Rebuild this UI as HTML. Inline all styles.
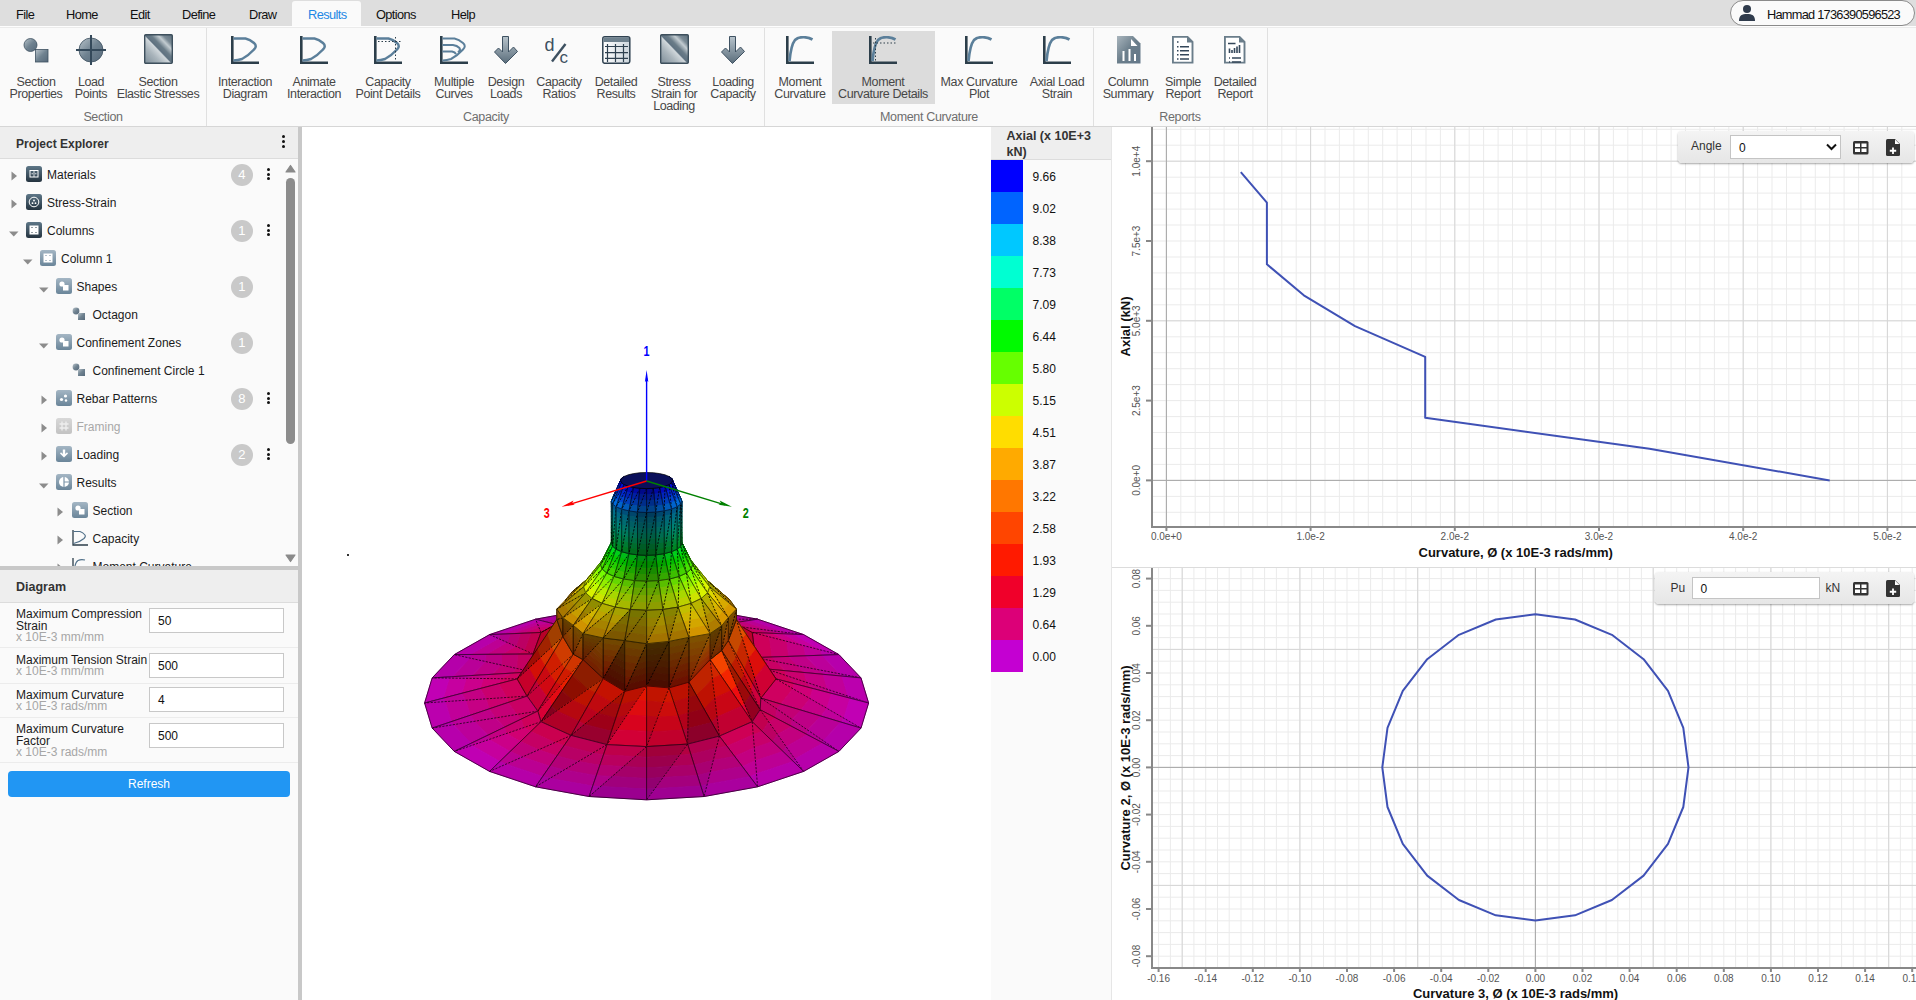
<!DOCTYPE html><html><head><meta charset="utf-8"><style>
*{box-sizing:border-box;margin:0;padding:0}
html,body{width:1916px;height:1000px;overflow:hidden;background:#fff;font-family:"Liberation Sans", sans-serif;}
.a{position:absolute}
.t{position:absolute;white-space:nowrap;line-height:1}
.menu{left:0;top:0;width:1916px;height:26px;background:#dedede}
.mi{position:absolute;top:7.8px;font-size:12.8px;color:#111;line-height:13px;letter-spacing:-0.6px}
.ribbon{left:0;top:26px;width:1916px;height:101px;background:#fafafa;border-bottom:1px solid #d6d6d6;box-shadow:inset 0 1px 0 #fdfdfd, inset 0 2px 0 #ebebeb}
.rl{position:absolute;top:75.6px;font-size:12.5px;line-height:12px;color:#474747;text-align:center;white-space:nowrap;letter-spacing:-0.4px}
.gl{position:absolute;top:110.6px;font-size:12.5px;line-height:12px;color:#6e6e6e;white-space:nowrap;letter-spacing:-0.35px}
.sep{position:absolute;top:28px;width:1px;height:98px;background:#e0e0e0}
</style></head><body>
<div class="a menu"></div>
<div class="mi" style="left:16px">File</div>
<div class="mi" style="left:66px">Home</div>
<div class="mi" style="left:130px">Edit</div>
<div class="mi" style="left:182px">Define</div>
<div class="mi" style="left:249px">Draw</div>
<div class="mi" style="left:376px">Options</div>
<div class="mi" style="left:451px">Help</div>
<div class="a" style="left:292px;top:1px;width:69px;height:26px;background:#fafafa;border-radius:3px 3px 0 0"></div>
<div class="mi" style="left:308px;color:#1e88e5">Results</div>
<div class="a" style="left:1730px;top:0px;width:185px;height:26px;border:1px solid #8a8a8a;border-radius:13px;background:#fafafa"></div>
<svg class="a" style="left:1738px;top:4px" width="20" height="18" viewBox="0 0 20 18"><circle cx="9" cy="5" r="4" fill="#2f3b4c"/><path d="M1 17 C1 11 4 10 9 10 C14 10 17 11 17 17 Z" fill="#2f3b4c"/></svg>
<div class="mi" style="left:1767px;top:8px;letter-spacing:-0.75px">Hammad 1736390596523</div>
<div class="a ribbon"></div>
<div class="sep" style="left:206px"></div>
<div class="sep" style="left:764px"></div>
<div class="sep" style="left:1093px"></div>
<div class="sep" style="left:1267px"></div>
<div class="a" style="left:832px;top:31px;width:103px;height:73px;background:#dcdcdc"></div>
<svg width="0" height="0" style="position:absolute"><defs>
<linearGradient id="gm" x1="0" y1="0" x2="1" y2="1"><stop offset="0" stop-color="#b9c4cb"/><stop offset="0.5" stop-color="#6f8290"/><stop offset="1" stop-color="#56697a"/></linearGradient>
<linearGradient id="gs" x1="0" y1="0" x2="1" y2="1"><stop offset="0" stop-color="#c5ced4"/><stop offset="0.3" stop-color="#7a8b97"/><stop offset="0.45" stop-color="#c9d1d6"/><stop offset="0.6" stop-color="#657886"/><stop offset="1" stop-color="#5f7280"/></linearGradient>
<linearGradient id="gq" x1="0" y1="1" x2="1" y2="0"><stop offset="0" stop-color="#7d8d98"/><stop offset="0.3" stop-color="#aab5bc"/><stop offset="0.47" stop-color="#d0d7db"/><stop offset="0.5" stop-color="#5e7180"/><stop offset="0.6" stop-color="#6a7c88"/><stop offset="0.73" stop-color="#c3ccd1"/><stop offset="0.82" stop-color="#7a8a95"/><stop offset="1" stop-color="#5d6f7c"/></linearGradient>
<linearGradient id="ga" x1="0" y1="0" x2="0" y2="1"><stop offset="0" stop-color="#b8c4cc"/><stop offset="1" stop-color="#5a6d7b"/></linearGradient>
<linearGradient id="gt" x1="0" y1="0" x2="1" y2="0"><stop offset="0" stop-color="#ffffff"/><stop offset="1" stop-color="#cdd6dd"/></linearGradient>
<linearGradient id="gd" x1="0" y1="0" x2="1" y2="1"><stop offset="0" stop-color="#a9b5bd"/><stop offset="0.5" stop-color="#6b7e8b"/><stop offset="1" stop-color="#64788a"/></linearGradient>
<linearGradient id="ti" x1="0" y1="0" x2="0" y2="1"><stop offset="0" stop-color="#5e7788"/><stop offset="1" stop-color="#24333f"/></linearGradient>
<linearGradient id="ti2" x1="0" y1="0" x2="0" y2="1"><stop offset="0" stop-color="#a4b6c4"/><stop offset="1" stop-color="#6a8599"/></linearGradient>
<linearGradient id="ti3" x1="0" y1="0" x2="0" y2="1"><stop offset="0" stop-color="#d8d8d8"/><stop offset="1" stop-color="#c2c2c2"/></linearGradient>
</defs></svg>
<div class="rl" style="left:-24px;width:120px">Section<br>Properties</div>
<svg class="a" style="left:23px;top:35px" width="26" height="28" viewBox="0 0 26 28"><circle cx="7.5" cy="10" r="6.5" fill="url(#gm)" stroke="#3d5060" stroke-width="0.8"/><rect x="12.5" y="14.5" width="12.5" height="12.5" fill="url(#gm)" stroke="#3d5060" stroke-width="0.8"/></svg>
<div class="rl" style="left:31px;width:120px">Load<br>Points</div>
<svg class="a" style="left:76px;top:35px" width="30" height="31" viewBox="0 0 30 31"><circle cx="15" cy="15" r="12" fill="url(#gm)" stroke="#3d5060" stroke-width="0.8"/><path d="M0 15 H30 M15 0 V30" stroke="#34495a" stroke-width="2"/></svg>
<div class="rl" style="left:98px;width:120px">Section<br>Elastic Stresses</div>
<svg class="a" style="left:144px;top:34px" width="29" height="30" viewBox="0 0 29 30"><rect x="0.7" y="0.7" width="27.6" height="28.6" fill="url(#gq)" stroke="#3d4f5c" stroke-width="1.4" rx="1"/></svg>
<div class="rl" style="left:185px;width:120px">Interaction<br>Diagram</div>
<svg class="a" style="left:231px;top:36px" width="29" height="28" viewBox="0 0 29 28"><path d="M1.3 0 V26.7 H28" fill="none" stroke="#2c3e4a" stroke-width="2.6"/><path d="M2.5 2.5 H14.5 Q19 3.5 23 7 Q26.5 10 23 13.5 Q17 20 11 23 Q7 24.4 2.5 24.5" fill="none" stroke="#5b7f9a" stroke-width="2.5"/></svg>
<div class="rl" style="left:254px;width:120px">Animate<br>Interaction</div>
<svg class="a" style="left:300px;top:36px" width="29" height="28" viewBox="0 0 29 28"><path d="M1.3 0 V26.7 H28" fill="none" stroke="#2c3e4a" stroke-width="2.6"/><path d="M2.5 2.5 H14.5 Q19 3.5 23 7 Q26.5 10 23 13.5 Q17 20 11 23 Q7 24.4 2.5 24.5" fill="none" stroke="#5b7f9a" stroke-width="2.5"/></svg>
<div class="rl" style="left:328px;width:120px">Capacity<br>Point Details</div>
<svg class="a" style="left:374px;top:36px" width="29" height="28" viewBox="0 0 29 28"><path d="M1.3 0 V26.7 H28" fill="none" stroke="#2c3e4a" stroke-width="2.6"/><path d="M2.5 2.5 H14.5 Q19 3.5 23 7 Q26.5 10 23 13.5 Q17 20 11 23 Q7 24.4 2.5 24.5" fill="none" stroke="#5b7f9a" stroke-width="2.5"/><path d="M4 5.5 H27 M21.5 1 V24" stroke="#2c3e4a" stroke-width="1" stroke-dasharray="1.5 2" fill="none"/></svg>
<div class="rl" style="left:394px;width:120px">Multiple<br>Curves</div>
<svg class="a" style="left:440px;top:36px" width="29" height="28" viewBox="0 0 29 28"><path d="M1.3 0 V26.7 H28" fill="none" stroke="#2c3e4a" stroke-width="2.6"/><path d="M2.5 2.5 H14.5 Q19 3.5 23 7 Q26.5 10 23 13.5 Q17 20 11 23 Q7 24.4 2.5 24.5 M2.5 9 H13 Q17 9.5 19.5 12 Q21 14 18 16.5 M2.5 15.5 H12 Q15 16 16 18" fill="none" stroke="#5b7f9a" stroke-width="2"/></svg>
<div class="rl" style="left:446px;width:120px">Design<br>Loads</div>
<svg class="a" style="left:494px;top:36px" width="24" height="28" viewBox="0 0 24 28"><path d="M8.5 0.5 H14.5 V16 L19.5 11 L23.5 15.5 L11.5 27.5 L0.5 16 L4.5 12 L8.5 16 Z" fill="url(#ga)" stroke="#3f5262" stroke-width="1"/></svg>
<div class="rl" style="left:499px;width:120px">Capacity<br>Ratios</div>
<svg class="a" style="left:545px;top:36px" width="28" height="28" viewBox="0 0 28 28"><text x="-0.5" y="14.5" font-family="Liberation Sans" font-size="18" fill="#3d5060">d</text><path d="M7 25.5 L20.5 8" stroke="#3d5060" stroke-width="2.4"/><text x="14.5" y="26.5" font-family="Liberation Sans" font-size="17" fill="#3d5060">c</text></svg>
<div class="rl" style="left:556px;width:120px">Detailed<br>Results</div>
<svg class="a" style="left:602px;top:36px" width="29" height="28" viewBox="0 0 29 28"><rect x="0.8" y="0.8" width="27" height="26.5" rx="2" fill="url(#gt)" stroke="#2f4150" stroke-width="1.5"/><rect x="1.5" y="1.5" width="25.6" height="4.5" fill="#6d808d"/><path d="M5.5 8 V26 M13.5 8 V26 M21.5 8 V26 M3 10.5 H26 M3 16.6 H26 M3 22.3 H26" stroke="#2f4150" stroke-width="1.2"/></svg>
<div class="rl" style="left:614px;width:120px">Stress<br>Strain for<br>Loading</div>
<svg class="a" style="left:660px;top:34px" width="29" height="30" viewBox="0 0 29 30"><rect x="0.7" y="0.7" width="27.6" height="28.6" fill="url(#gq)" stroke="#3d4f5c" stroke-width="1.4" rx="1"/></svg>
<div class="rl" style="left:673px;width:120px">Loading<br>Capacity</div>
<svg class="a" style="left:721px;top:36px" width="24" height="28" viewBox="0 0 24 28"><path d="M8.5 0.5 H14.5 V16 L19.5 11 L23.5 15.5 L11.5 27.5 L0.5 16 L4.5 12 L8.5 16 Z" fill="url(#ga)" stroke="#3f5262" stroke-width="1"/></svg>
<div class="rl" style="left:740px;width:120px">Moment<br>Curvature</div>
<svg class="a" style="left:786px;top:36px" width="29" height="28" viewBox="0 0 29 28"><path d="M1.3 0 V26.7 H28" fill="none" stroke="#2c3e4a" stroke-width="2.6"/><path d="M3.5 25 Q5 9 9 4 Q12 1 18 1.2 Q23 1.5 26.5 3.5" fill="none" stroke="#5b7f9a" stroke-width="2.7"/></svg>
<div class="rl" style="left:823px;width:120px">Moment<br>Curvature Details</div>
<svg class="a" style="left:869px;top:36px" width="29" height="28" viewBox="0 0 29 28"><path d="M1.3 0 V26.7 H28" fill="none" stroke="#2c3e4a" stroke-width="2.6"/><path d="M3.5 25 Q5 9 9 4 Q12 1 18 1.2 Q23 1.5 26.5 3.5" fill="none" stroke="#5b7f9a" stroke-width="2.7"/><path d="M4 7 H27 M6.5 2 V25" stroke="#2c3e4a" stroke-width="1" stroke-dasharray="1.5 2" fill="none"/></svg>
<div class="rl" style="left:919px;width:120px">Max Curvature<br>Plot</div>
<svg class="a" style="left:965px;top:36px" width="29" height="28" viewBox="0 0 29 28"><path d="M1.3 0 V26.7 H28" fill="none" stroke="#2c3e4a" stroke-width="2.6"/><path d="M3.5 25 Q5 9 9 4 Q12 1 18 1.2 Q23 1.5 26.5 3.5" fill="none" stroke="#5b7f9a" stroke-width="2.7"/></svg>
<div class="rl" style="left:997px;width:120px">Axial Load<br>Strain</div>
<svg class="a" style="left:1043px;top:36px" width="29" height="28" viewBox="0 0 29 28"><path d="M1.3 0 V26.7 H28" fill="none" stroke="#2c3e4a" stroke-width="2.6"/><path d="M3.5 25 Q5 9 9 4 Q12 1 18 1.2 Q23 1.5 26.5 3.5" fill="none" stroke="#5b7f9a" stroke-width="2.7"/></svg>
<div class="rl" style="left:1068px;width:120px">Column<br>Summary</div>
<svg class="a" style="left:1117px;top:36px" width="24" height="28" viewBox="0 0 24 28"><path d="M0 0 H16 L23.5 7.5 V27.5 H0 Z" fill="url(#gd)"/><path d="M14 3 L20.5 10 H14 Z" fill="#fff"/><rect x="5.5" y="15" width="2" height="10" fill="#fff"/><rect x="11.5" y="13" width="2" height="12" fill="#fff"/><rect x="17" y="18" width="2" height="7" fill="#fff"/></svg>
<div class="rl" style="left:1123px;width:120px">Simple<br>Report</div>
<svg class="a" style="left:1172px;top:36px" width="22" height="28" viewBox="0 0 22 28"><path d="M0.9 0.9 H15.5 L20.5 6 V26.6 H0.9 Z" fill="#fff" stroke="#6a7d8a" stroke-width="1.9"/><path d="M15 1 V6.5 H20.5" fill="#6a7d8a"/><path d="M5 6 H6.5 M5 10.7 H6.5 M8 10.7 H17 M5 14.7 H6.5 M8 14.7 H17 M5 18.8 H6.5 M8 18.8 H17 M5 23 H6.5 M8 23 H17" stroke="#34475a" stroke-width="1.5"/></svg>
<div class="rl" style="left:1175px;width:120px">Detailed<br>Report</div>
<svg class="a" style="left:1224px;top:36px" width="22" height="28" viewBox="0 0 22 28"><path d="M0.9 0.9 H15.5 L20.5 6 V26.6 H0.9 Z" fill="#fff" stroke="#6a7d8a" stroke-width="1.9"/><path d="M15 1 V6.5 H20.5" fill="#6a7d8a"/><path d="M4 7.5 H11.5 M5 22 H6 M8 22 H17 M5 26 H6 M8 26 H17" stroke="#34475a" stroke-width="1.5"/><path d="M5.5 17 V12.5 M8 17 V14 M10.5 17 V12 M13 17 V10.5 M15.5 17 V9" stroke="#34475a" stroke-width="1.6"/></svg>
<div class="gl" style="left:43px;width:120px;text-align:center">Section</div>
<div class="gl" style="left:426px;width:120px;text-align:center">Capacity</div>
<div class="gl" style="left:869px;width:120px;text-align:center">Moment Curvature</div>
<div class="gl" style="left:1120px;width:120px;text-align:center">Reports</div>
<div class="a" style="left:0;top:127px;width:298px;height:873px;background:#fafafa"></div>
<div class="a" style="left:298px;top:127px;width:4px;height:873px;background:#c8c8c8"></div>
<div class="a" style="left:0;top:127px;width:298px;height:32px;background:#eeeeee;border-bottom:1px solid #dcdcdc"></div>
<div class="t" style="left:16px;top:138px;font-size:12px;font-weight:bold;color:#333;letter-spacing:0px">Project Explorer</div>
<div class="a" style="left:282.0px;top:135.0px;width:3px;height:3px;border-radius:50%;background:#111"></div><div class="a" style="left:282.0px;top:139.8px;width:3px;height:3px;border-radius:50%;background:#111"></div><div class="a" style="left:282.0px;top:144.60000000000002px;width:3px;height:3px;border-radius:50%;background:#111"></div>
<div class="a" style="left:0;top:160px;width:283px;height:406px;overflow:hidden"><div class="a" style="left:0;top:-160px;width:283px;height:1000px"><svg class="a" style="left:11px;top:171px" width="7" height="10"><path d="M0.5 0.5 L6 5 L0.5 9.5 Z" fill="#8c8c8c"/></svg><svg class="a" style="left:26px;top:166px" width="16" height="16"><rect x="0" y="0" width="16" height="16" rx="2.5" fill="url(#ti)"/><rect x="4" y="4.5" width="8" height="6.5" fill="none" stroke="#fff" stroke-width="1"/><path d="M8 5 V11 M5.5 7.75 H7 M9 7.75 H10.5" stroke="#fff" stroke-width="0.8"/></svg><div class="t" style="left:47px;top:169px;font-size:12px;color:#1a1a1a">Materials</div><div class="a" style="left:230.8px;top:163.5px;width:22px;height:22px;border-radius:50%;background:#c9c9c9;color:#fff;font-size:13px;line-height:22px;text-align:center">4</div><div class="a" style="left:266.5px;top:167.7px;width:3px;height:3px;border-radius:50%;background:#111"></div><div class="a" style="left:266.5px;top:172.5px;width:3px;height:3px;border-radius:50%;background:#111"></div><div class="a" style="left:266.5px;top:177.3px;width:3px;height:3px;border-radius:50%;background:#111"></div><svg class="a" style="left:11px;top:199px" width="7" height="10"><path d="M0.5 0.5 L6 5 L0.5 9.5 Z" fill="#8c8c8c"/></svg><svg class="a" style="left:26px;top:194px" width="16" height="16"><rect x="0" y="0" width="16" height="16" rx="2.5" fill="url(#ti)"/><circle cx="8" cy="8" r="4.8" fill="none" stroke="#fff" stroke-width="1"/><circle cx="8" cy="6.5" r="0.9" fill="#fff"/><circle cx="6.5" cy="9.2" r="0.9" fill="#fff"/><circle cx="9.5" cy="9.2" r="0.9" fill="#fff"/></svg><div class="t" style="left:47px;top:197px;font-size:12px;color:#1a1a1a">Stress-Strain</div><svg class="a" style="left:9px;top:231px" width="10" height="6"><path d="M0 0.5 H9.5 L4.75 5.5 Z" fill="#8c8c8c"/></svg><svg class="a" style="left:26px;top:222px" width="16" height="16"><rect x="0" y="0" width="16" height="16" rx="2.5" fill="url(#ti)"/><rect x="3.5" y="3.5" width="9" height="9" fill="#fff"/><path d="M5.5 5.5 h1 M9.5 5.5 h1 M5.5 10.5 h1 M9.5 10.5 h1" stroke="#2c3e4a" stroke-width="1"/></svg><div class="t" style="left:47px;top:225px;font-size:12px;color:#1a1a1a">Columns</div><div class="a" style="left:230.8px;top:219.5px;width:22px;height:22px;border-radius:50%;background:#c9c9c9;color:#fff;font-size:13px;line-height:22px;text-align:center">1</div><div class="a" style="left:266.5px;top:223.7px;width:3px;height:3px;border-radius:50%;background:#111"></div><div class="a" style="left:266.5px;top:228.5px;width:3px;height:3px;border-radius:50%;background:#111"></div><div class="a" style="left:266.5px;top:233.3px;width:3px;height:3px;border-radius:50%;background:#111"></div><svg class="a" style="left:23px;top:259px" width="10" height="6"><path d="M0 0.5 H9.5 L4.75 5.5 Z" fill="#8c8c8c"/></svg><svg class="a" style="left:40px;top:250px" width="16" height="16"><rect x="0" y="0" width="16" height="16" rx="2.5" fill="url(#ti2)"/><rect x="3.5" y="3.5" width="9" height="9" fill="#fff"/><path d="M5.5 5.5 h1 M9.5 5.5 h1 M5.5 10.5 h1 M9.5 10.5 h1" stroke="#6a8599" stroke-width="1"/></svg><div class="t" style="left:61px;top:253px;font-size:12px;color:#1a1a1a">Column 1</div><svg class="a" style="left:39px;top:287px" width="10" height="6"><path d="M0 0.5 H9.5 L4.75 5.5 Z" fill="#8c8c8c"/></svg><svg class="a" style="left:56px;top:278px" width="16" height="16"><rect x="0" y="0" width="16" height="16" rx="2.5" fill="url(#ti2)"/><circle cx="6" cy="6" r="2.6" fill="#fff"/><rect x="7" y="7" width="5.5" height="5.5" fill="#fff"/></svg><div class="t" style="left:76.5px;top:281px;font-size:12px;color:#1a1a1a">Shapes</div><div class="a" style="left:230.8px;top:275.5px;width:22px;height:22px;border-radius:50%;background:#c9c9c9;color:#fff;font-size:13px;line-height:22px;text-align:center">1</div><svg class="a" style="left:72px;top:307px" width="14" height="14"><circle cx="4" cy="4" r="3.4" fill="url(#gm)"/><rect x="6" y="6" width="7" height="7" fill="url(#gm)"/></svg><div class="t" style="left:92.5px;top:309px;font-size:12px;color:#1a1a1a">Octagon</div><svg class="a" style="left:39px;top:343px" width="10" height="6"><path d="M0 0.5 H9.5 L4.75 5.5 Z" fill="#8c8c8c"/></svg><svg class="a" style="left:56px;top:334px" width="16" height="16"><rect x="0" y="0" width="16" height="16" rx="2.5" fill="url(#ti2)"/><circle cx="6" cy="6" r="2.6" fill="#fff"/><rect x="7" y="7" width="5.5" height="5.5" fill="#fff"/></svg><div class="t" style="left:76.5px;top:337px;font-size:12px;color:#1a1a1a">Confinement Zones</div><div class="a" style="left:230.8px;top:331.5px;width:22px;height:22px;border-radius:50%;background:#c9c9c9;color:#fff;font-size:13px;line-height:22px;text-align:center">1</div><svg class="a" style="left:72px;top:363px" width="14" height="14"><circle cx="4" cy="4" r="3.4" fill="url(#gm)"/><rect x="6" y="6" width="7" height="7" fill="url(#gm)"/></svg><div class="t" style="left:92.5px;top:365px;font-size:12px;color:#1a1a1a">Confinement Circle 1</div><svg class="a" style="left:41px;top:395px" width="7" height="10"><path d="M0.5 0.5 L6 5 L0.5 9.5 Z" fill="#8c8c8c"/></svg><svg class="a" style="left:56px;top:390px" width="16" height="16"><rect x="0" y="0" width="16" height="16" rx="2.5" fill="url(#ti2)"/><circle cx="5.5" cy="9.5" r="1.6" fill="#fff"/><circle cx="9.5" cy="6" r="1.6" fill="#fff"/><circle cx="10" cy="10.5" r="1.2" fill="#fff"/></svg><div class="t" style="left:76.5px;top:393px;font-size:12px;color:#1a1a1a">Rebar Patterns</div><div class="a" style="left:230.8px;top:387.5px;width:22px;height:22px;border-radius:50%;background:#c9c9c9;color:#fff;font-size:13px;line-height:22px;text-align:center">8</div><div class="a" style="left:266.5px;top:391.7px;width:3px;height:3px;border-radius:50%;background:#111"></div><div class="a" style="left:266.5px;top:396.5px;width:3px;height:3px;border-radius:50%;background:#111"></div><div class="a" style="left:266.5px;top:401.3px;width:3px;height:3px;border-radius:50%;background:#111"></div><svg class="a" style="left:41px;top:423px" width="7" height="10"><path d="M0.5 0.5 L6 5 L0.5 9.5 Z" fill="#8c8c8c"/></svg><svg class="a" style="left:56px;top:418px" width="16" height="16"><rect x="0" y="0" width="16" height="16" rx="2.5" fill="url(#ti3)"/><path d="M6 3.5 V12.5 M10 3.5 V12.5 M3.5 6 H12.5 M3.5 10 H12.5" stroke="#eee" stroke-width="1.3"/></svg><div class="t" style="left:76.5px;top:421px;font-size:12px;color:#a8a8a8">Framing</div><svg class="a" style="left:41px;top:451px" width="7" height="10"><path d="M0.5 0.5 L6 5 L0.5 9.5 Z" fill="#8c8c8c"/></svg><svg class="a" style="left:56px;top:446px" width="16" height="16"><rect x="0" y="0" width="16" height="16" rx="2.5" fill="url(#ti2)"/><path d="M6.8 3.5 H9.2 V8 L11 6.3 L12 7.5 L8 11.5 L4 7.5 L5 6.3 L6.8 8 Z" fill="#fff"/></svg><div class="t" style="left:76.5px;top:449px;font-size:12px;color:#1a1a1a">Loading</div><div class="a" style="left:230.8px;top:443.5px;width:22px;height:22px;border-radius:50%;background:#c9c9c9;color:#fff;font-size:13px;line-height:22px;text-align:center">2</div><div class="a" style="left:266.5px;top:447.7px;width:3px;height:3px;border-radius:50%;background:#111"></div><div class="a" style="left:266.5px;top:452.5px;width:3px;height:3px;border-radius:50%;background:#111"></div><div class="a" style="left:266.5px;top:457.3px;width:3px;height:3px;border-radius:50%;background:#111"></div><svg class="a" style="left:39px;top:483px" width="10" height="6"><path d="M0 0.5 H9.5 L4.75 5.5 Z" fill="#8c8c8c"/></svg><svg class="a" style="left:56px;top:474px" width="16" height="16"><rect x="0" y="0" width="16" height="16" rx="2.5" fill="url(#ti2)"/><circle cx="8" cy="8" r="5" fill="#fff"/><path d="M8 3 V13 M8 8 H13" stroke="#7d96a9" stroke-width="1.2"/></svg><div class="t" style="left:76.5px;top:477px;font-size:12px;color:#1a1a1a">Results</div><svg class="a" style="left:57px;top:507px" width="7" height="10"><path d="M0.5 0.5 L6 5 L0.5 9.5 Z" fill="#8c8c8c"/></svg><svg class="a" style="left:72px;top:502px" width="16" height="16"><rect x="0" y="0" width="16" height="16" rx="2.5" fill="url(#ti2)"/><circle cx="6" cy="6" r="2.6" fill="#fff"/><rect x="7" y="7" width="5.5" height="5.5" fill="#fff"/></svg><div class="t" style="left:92.5px;top:505px;font-size:12px;color:#1a1a1a">Section</div><svg class="a" style="left:57px;top:535px" width="7" height="10"><path d="M0.5 0.5 L6 5 L0.5 9.5 Z" fill="#8c8c8c"/></svg><svg class="a" style="left:72px;top:530px" width="16" height="16"><path d="M1 0 V15 H16" fill="none" stroke="#2c3e4a" stroke-width="1.3"/><path d="M1.5 1.5 H8 Q11 2.5 13 5 Q14 6.5 12 8.5 Q8 12 1.5 13.5" fill="none" stroke="#4f6f88" stroke-width="1.1"/></svg><div class="t" style="left:92.5px;top:533px;font-size:12px;color:#1a1a1a">Capacity</div><svg class="a" style="left:57px;top:563px" width="7" height="10"><path d="M0.5 0.5 L6 5 L0.5 9.5 Z" fill="#8c8c8c"/></svg><svg class="a" style="left:72px;top:558px" width="16" height="16"><path d="M1 0 V15 H16" fill="none" stroke="#2c3e4a" stroke-width="1.3"/><path d="M2 14 Q3 4 6 2.5 Q9 1 13 2" fill="none" stroke="#4f6f88" stroke-width="1.1"/></svg><div class="t" style="left:92.5px;top:561px;font-size:12px;color:#1a1a1a">Moment Curvature</div></div></div>
<svg class="a" style="left:285px;top:164px" width="11" height="9"><path d="M1 8 L5.5 1.5 L10 8 Z" fill="#8a8a8a" stroke="#8a8a8a" stroke-linejoin="round" stroke-width="1.2"/></svg>
<svg class="a" style="left:285px;top:554px" width="11" height="9"><path d="M1 1 L5.5 7.5 L10 1 Z" fill="#8a8a8a" stroke="#8a8a8a" stroke-linejoin="round" stroke-width="1.2"/></svg>
<div class="a" style="left:286px;top:177.5px;width:9px;height:266px;border-radius:4.5px;background:#8c8c8c"></div>
<div class="a" style="left:0;top:566px;width:298px;height:4px;background:#c8c8c8"></div>
<div class="a" style="left:0;top:570px;width:298px;height:33px;background:#eeeeee;border-bottom:1px solid #dcdcdc"></div>
<div class="t" style="left:16px;top:581px;font-size:12.5px;font-weight:bold;color:#333">Diagram</div>
<div class="a" style="left:16px;top:608.9px;font-size:12px;line-height:11.8px;color:#1a1a1a;white-space:nowrap">Maximum Compression<br>Strain<br><span style="color:#a6a6a6">x 10E-3 mm/mm</span></div>
<div class="a" style="left:149px;top:607.5px;width:135px;height:25px;background:#fff;border:1px solid #c8c8c8"></div>
<div class="t" style="left:158px;top:614.5px;font-size:12px;color:#111">50</div>
<div class="a" style="left:0;top:647.3px;width:298px;height:1px;background:#ececec"></div>
<div class="a" style="left:16px;top:654.5px;font-size:12px;line-height:11.8px;color:#1a1a1a;white-space:nowrap">Maximum Tension Strain<br><span style="color:#a6a6a6">x 10E-3 mm/mm</span></div>
<div class="a" style="left:149px;top:652.6px;width:135px;height:25px;background:#fff;border:1px solid #c8c8c8"></div>
<div class="t" style="left:158px;top:659.6px;font-size:12px;color:#111">500</div>
<div class="a" style="left:0;top:682.6px;width:298px;height:1px;background:#ececec"></div>
<div class="a" style="left:16px;top:689.5px;font-size:12px;line-height:11.8px;color:#1a1a1a;white-space:nowrap">Maximum Curvature<br><span style="color:#a6a6a6">x 10E-3 rads/mm</span></div>
<div class="a" style="left:149px;top:687.4px;width:135px;height:25px;background:#fff;border:1px solid #c8c8c8"></div>
<div class="t" style="left:158px;top:694.4px;font-size:12px;color:#111">4</div>
<div class="a" style="left:0;top:717.3px;width:298px;height:1px;background:#ececec"></div>
<div class="a" style="left:16px;top:723.9px;font-size:12px;line-height:11.8px;color:#1a1a1a;white-space:nowrap">Maximum Curvature<br>Factor<br><span style="color:#a6a6a6">x 10E-3 rads/mm</span></div>
<div class="a" style="left:149px;top:722.6px;width:135px;height:25px;background:#fff;border:1px solid #c8c8c8"></div>
<div class="t" style="left:158px;top:729.6px;font-size:12px;color:#111">500</div>
<div class="a" style="left:0;top:762.2px;width:298px;height:1px;background:#ececec"></div>
<div class="a" style="left:8px;top:771px;width:282px;height:26px;border-radius:4px;background:#2196f3"></div>
<div class="t" style="left:8px;top:778px;width:282px;text-align:center;font-size:12px;color:#fff">Refresh</div>
<div class="a" style="left:302px;top:127px;width:689px;height:873px;background:#fff"></div>
<div class="a" style="left:347px;top:554px;width:2px;height:2px;background:#333"></div>
<svg class="a" style="left:0;top:0" width="991" height="1000"><path d="M605.6 614.6L646.6 603.9L646.6 604.3L613.8 612.9Z" fill="#a0003a" stroke="#a0003a" stroke-width="1"/><path d="M613.8 612.9L646.6 604.3L646.6 604.8L622.0 611.2Z" fill="#9b004c" stroke="#9b004c" stroke-width="1"/><path d="M622.0 611.2L646.6 604.8L646.6 605.3L630.2 609.5Z" fill="#97005e" stroke="#97005e" stroke-width="1"/><path d="M630.2 609.5L646.6 605.3L646.6 605.7L638.4 607.9Z" fill="#920070" stroke="#920070" stroke-width="1"/><path d="M638.4 607.9L646.6 605.7L646.6 606.2L646.6 606.2Z" fill="#8e0082" stroke="#8e0082" stroke-width="1"/><path d="M605.6 614.6L605.6 614.6L613.8 612.9L602.3 613.5Z" fill="#b30041" stroke="#b30041" stroke-width="1"/><path d="M602.3 613.5L613.8 612.9L622.0 611.2L599.0 612.5Z" fill="#ae0055" stroke="#ae0055" stroke-width="1"/><path d="M599.0 612.5L622.0 611.2L630.2 609.5L595.7 611.5Z" fill="#a90069" stroke="#a90069" stroke-width="1"/><path d="M595.7 611.5L630.2 609.5L638.4 607.9L592.4 610.5Z" fill="#a4007d" stroke="#a4007d" stroke-width="1"/><path d="M592.4 610.5L638.4 607.9L646.6 606.2L589.1 609.5Z" fill="#9f0092" stroke="#9f0092" stroke-width="1"/><path d="M605.6 614.6L646.6 603.9L646.6 606.2L589.1 609.5Z" fill="none" stroke="#000" stroke-width="0.7" stroke-opacity="0.85"/><path d="M605.6 614.6L646.6 606.2" stroke="#000" stroke-width="0.75" stroke-dasharray="2.2 1.3" stroke-opacity="0.9"/><path d="M646.6 603.9L686.2 619.1L689.8 617.1L658.1 605.0Z" fill="#be004a" stroke="#be004a" stroke-width="1"/><path d="M658.1 605.0L689.8 617.1L693.3 615.2L669.6 606.1Z" fill="#b9005e" stroke="#b9005e" stroke-width="1"/><path d="M669.6 606.1L693.3 615.2L696.9 613.3L681.1 607.3Z" fill="#b40073" stroke="#b40073" stroke-width="1"/><path d="M681.1 607.3L696.9 613.3L700.5 611.4L692.6 608.4Z" fill="#af0088" stroke="#af0088" stroke-width="1"/><path d="M692.6 608.4L700.5 611.4L704.1 609.5L704.1 609.5Z" fill="#a9009c" stroke="#a9009c" stroke-width="1"/><path d="M646.6 603.9L646.6 603.9L658.1 605.0L646.6 604.3Z" fill="#ae0043" stroke="#ae0043" stroke-width="1"/><path d="M646.6 604.3L658.1 605.0L669.6 606.1L646.6 604.8Z" fill="#aa0056" stroke="#aa0056" stroke-width="1"/><path d="M646.6 604.8L669.6 606.1L681.1 607.3L646.6 605.3Z" fill="#a50069" stroke="#a50069" stroke-width="1"/><path d="M646.6 605.3L681.1 607.3L692.6 608.4L646.6 605.7Z" fill="#a0007c" stroke="#a0007c" stroke-width="1"/><path d="M646.6 605.7L692.6 608.4L704.1 609.5L646.6 606.2Z" fill="#9b008f" stroke="#9b008f" stroke-width="1"/><path d="M646.6 603.9L686.2 619.1L704.1 609.5L646.6 606.2Z" fill="none" stroke="#000" stroke-width="0.7" stroke-opacity="0.85"/><path d="M646.6 603.9L704.1 609.5" stroke="#000" stroke-width="0.75" stroke-dasharray="2.2 1.3" stroke-opacity="0.9"/><path d="M573.8 628.9L605.6 614.6L602.3 613.5L576.9 625.0Z" fill="#b1004e" stroke="#b1004e" stroke-width="1"/><path d="M576.9 625.0L602.3 613.5L599.0 612.5L579.9 621.1Z" fill="#ad005f" stroke="#ad005f" stroke-width="1"/><path d="M579.9 621.1L599.0 612.5L595.7 611.5L583.0 617.3Z" fill="#a90071" stroke="#a90071" stroke-width="1"/><path d="M583.0 617.3L595.7 611.5L592.4 610.5L586.1 613.4Z" fill="#a40083" stroke="#a40083" stroke-width="1"/><path d="M586.1 613.4L592.4 610.5L589.1 609.5L589.1 609.5Z" fill="#a00095" stroke="#a00095" stroke-width="1"/><path d="M573.8 628.9L573.8 628.9L576.9 625.0L566.2 626.9Z" fill="#bc0053" stroke="#bc0053" stroke-width="1"/><path d="M566.2 626.9L576.9 625.0L579.9 621.1L558.5 625.0Z" fill="#b80065" stroke="#b80065" stroke-width="1"/><path d="M558.5 625.0L579.9 621.1L583.0 617.3L550.9 623.1Z" fill="#b30078" stroke="#b30078" stroke-width="1"/><path d="M550.9 623.1L583.0 617.3L586.1 613.4L543.2 621.1Z" fill="#ae008b" stroke="#ae008b" stroke-width="1"/><path d="M543.2 621.1L586.1 613.4L589.1 609.5L535.6 619.2Z" fill="#aa009e" stroke="#aa009e" stroke-width="1"/><path d="M573.8 628.9L605.6 614.6L589.1 609.5L535.6 619.2Z" fill="none" stroke="#000" stroke-width="0.7" stroke-opacity="0.85"/><path d="M573.8 628.9L589.1 609.5" stroke="#000" stroke-width="0.75" stroke-dasharray="2.2 1.3" stroke-opacity="0.9"/><path d="M686.2 619.1L722.1 624.6L729.2 623.5L700.5 619.1Z" fill="#bc0053" stroke="#bc0053" stroke-width="1"/><path d="M700.5 619.1L729.2 623.5L736.3 622.4L714.8 619.1Z" fill="#b80065" stroke="#b80065" stroke-width="1"/><path d="M714.8 619.1L736.3 622.4L743.4 621.3L729.0 619.1Z" fill="#b30078" stroke="#b30078" stroke-width="1"/><path d="M729.0 619.1L743.4 621.3L750.5 620.3L743.3 619.2Z" fill="#ae008b" stroke="#ae008b" stroke-width="1"/><path d="M743.3 619.2L750.5 620.3L757.6 619.2L757.6 619.2Z" fill="#a9009e" stroke="#a9009e" stroke-width="1"/><path d="M686.2 619.1L686.2 619.1L700.5 619.1L689.8 617.1Z" fill="#bd0053" stroke="#bd0053" stroke-width="1"/><path d="M689.8 617.1L700.5 619.1L714.8 619.1L693.3 615.2Z" fill="#b90066" stroke="#b90066" stroke-width="1"/><path d="M693.3 615.2L714.8 619.1L729.0 619.1L696.9 613.3Z" fill="#b40079" stroke="#b40079" stroke-width="1"/><path d="M696.9 613.3L729.0 619.1L743.3 619.2L700.5 611.4Z" fill="#af008c" stroke="#af008c" stroke-width="1"/><path d="M700.5 611.4L743.3 619.2L757.6 619.2L704.1 609.5Z" fill="#ab009f" stroke="#ab009f" stroke-width="1"/><path d="M686.2 619.1L722.1 624.6L757.6 619.2L704.1 609.5Z" fill="none" stroke="#000" stroke-width="0.7" stroke-opacity="0.85"/><path d="M686.2 619.1L757.6 619.2" stroke="#000" stroke-width="0.75" stroke-dasharray="2.2 1.3" stroke-opacity="0.9"/><path d="M722.1 624.6L752.2 632.5L762.5 632.9L738.4 626.6Z" fill="#ca004f" stroke="#ca004f" stroke-width="1"/><path d="M738.4 626.6L762.5 632.9L772.8 633.3L754.7 628.6Z" fill="#c50064" stroke="#c50064" stroke-width="1"/><path d="M754.7 628.6L772.8 633.3L783.0 633.7L771.0 630.6Z" fill="#bf007a" stroke="#bf007a" stroke-width="1"/><path d="M771.0 630.6L783.0 633.7L793.3 634.1L787.3 632.6Z" fill="#ba0090" stroke="#ba0090" stroke-width="1"/><path d="M787.3 632.6L793.3 634.1L803.6 634.6L803.6 634.6Z" fill="#b400a7" stroke="#b400a7" stroke-width="1"/><path d="M722.1 624.6L722.1 624.6L738.4 626.6L729.2 623.5Z" fill="#cc004f" stroke="#cc004f" stroke-width="1"/><path d="M729.2 623.5L738.4 626.6L754.7 628.6L736.3 622.4Z" fill="#c70065" stroke="#c70065" stroke-width="1"/><path d="M736.3 622.4L754.7 628.6L771.0 630.6L743.4 621.3Z" fill="#c1007b" stroke="#c1007b" stroke-width="1"/><path d="M743.4 621.3L771.0 630.6L787.3 632.6L750.5 620.3Z" fill="#bb0092" stroke="#bb0092" stroke-width="1"/><path d="M750.5 620.3L787.3 632.6L803.6 634.6L757.6 619.2Z" fill="#b600a8" stroke="#b600a8" stroke-width="1"/><path d="M722.1 624.6L752.2 632.5L803.6 634.6L757.6 619.2Z" fill="none" stroke="#000" stroke-width="0.7" stroke-opacity="0.85"/><path d="M722.1 624.6L803.6 634.6" stroke="#000" stroke-width="0.75" stroke-dasharray="2.2 1.3" stroke-opacity="0.9"/><path d="M541.0 632.5L573.8 628.9L566.2 626.9L539.9 629.8Z" fill="#ce0055" stroke="#ce0055" stroke-width="1"/><path d="M539.9 629.8L566.2 626.9L558.5 625.0L538.8 627.2Z" fill="#c8006b" stroke="#c8006b" stroke-width="1"/><path d="M538.8 627.2L558.5 625.0L550.9 623.1L537.8 624.5Z" fill="#c30080" stroke="#c30080" stroke-width="1"/><path d="M537.8 624.5L550.9 623.1L543.2 621.1L536.7 621.8Z" fill="#be0095" stroke="#be0095" stroke-width="1"/><path d="M536.7 621.8L543.2 621.1L535.6 619.2L535.6 619.2Z" fill="#b800ab" stroke="#b800ab" stroke-width="1"/><path d="M541.0 632.5L541.0 632.5L539.9 629.8L530.7 632.9Z" fill="#cc0055" stroke="#cc0055" stroke-width="1"/><path d="M530.7 632.9L539.9 629.8L538.8 627.2L520.4 633.3Z" fill="#c7006a" stroke="#c7006a" stroke-width="1"/><path d="M520.4 633.3L538.8 627.2L537.8 624.5L510.2 633.7Z" fill="#c2007f" stroke="#c2007f" stroke-width="1"/><path d="M510.2 633.7L537.8 624.5L536.7 621.8L499.9 634.1Z" fill="#bc0094" stroke="#bc0094" stroke-width="1"/><path d="M499.9 634.1L536.7 621.8L535.6 619.2L489.6 634.6Z" fill="#b700aa" stroke="#b700aa" stroke-width="1"/><path d="M541.0 632.5L573.8 628.9L535.6 619.2L489.6 634.6Z" fill="none" stroke="#000" stroke-width="0.7" stroke-opacity="0.85"/><path d="M541.0 632.5L535.6 619.2" stroke="#000" stroke-width="0.75" stroke-dasharray="2.2 1.3" stroke-opacity="0.9"/><path d="M624.2 619.3L646.6 612.7L646.6 610.5L629.8 615.5Z" fill="#c31500" stroke="#c31500" stroke-width="1"/><path d="M629.8 615.5L646.6 610.5L646.6 608.3L635.4 611.6Z" fill="#be0c0a" stroke="#be0c0a" stroke-width="1"/><path d="M635.4 611.6L646.6 608.3L646.6 606.1L641.0 607.7Z" fill="#ba0417" stroke="#ba0417" stroke-width="1"/><path d="M641.0 607.7L646.6 606.1L646.6 603.9L646.6 603.9Z" fill="#b40029" stroke="#b40029" stroke-width="1"/><path d="M624.2 619.3L624.2 619.3L629.8 615.5L619.5 618.1Z" fill="#c21500" stroke="#c21500" stroke-width="1"/><path d="M619.5 618.1L629.8 615.5L635.4 611.6L614.9 616.9Z" fill="#be0c0a" stroke="#be0c0a" stroke-width="1"/><path d="M614.9 616.9L635.4 611.6L641.0 607.7L610.3 615.7Z" fill="#b90417" stroke="#b90417" stroke-width="1"/><path d="M610.3 615.7L641.0 607.7L646.6 603.9L605.6 614.6Z" fill="#b40029" stroke="#b40029" stroke-width="1"/><path d="M624.2 619.3L646.6 612.7L646.6 603.9L605.6 614.6Z" fill="none" stroke="#000" stroke-width="0.7" stroke-opacity="0.85"/><path d="M624.2 619.3L646.6 603.9" stroke="#000" stroke-width="0.75" stroke-dasharray="2.2 1.3" stroke-opacity="0.9"/><path d="M646.6 612.7L668.5 624.1L672.9 622.8L656.5 614.3Z" fill="#bc1101" stroke="#bc1101" stroke-width="1"/><path d="M656.5 614.3L672.9 622.8L677.3 621.6L666.4 615.9Z" fill="#b8090d" stroke="#b8090d" stroke-width="1"/><path d="M666.4 615.9L677.3 621.6L681.8 620.3L676.3 617.5Z" fill="#b40219" stroke="#b40219" stroke-width="1"/><path d="M676.3 617.5L681.8 620.3L686.2 619.1L686.2 619.1Z" fill="#ae002d" stroke="#ae002d" stroke-width="1"/><path d="M646.6 612.7L646.6 612.7L656.5 614.3L646.6 610.5Z" fill="#ba1101" stroke="#ba1101" stroke-width="1"/><path d="M646.6 610.5L656.5 614.3L666.4 615.9L646.6 608.3Z" fill="#b6090d" stroke="#b6090d" stroke-width="1"/><path d="M646.6 608.3L666.4 615.9L676.3 617.5L646.6 606.1Z" fill="#b10219" stroke="#b10219" stroke-width="1"/><path d="M646.6 606.1L676.3 617.5L686.2 619.1L646.6 603.9Z" fill="#ac002c" stroke="#ac002c" stroke-width="1"/><path d="M646.6 612.7L668.5 624.1L686.2 619.1L646.6 603.9Z" fill="none" stroke="#000" stroke-width="0.7" stroke-opacity="0.85"/><path d="M646.6 612.7L686.2 619.1" stroke="#000" stroke-width="0.75" stroke-dasharray="2.2 1.3" stroke-opacity="0.9"/><path d="M533.1 654.0L541.0 632.5L530.7 632.9L524.4 650.1Z" fill="#c1004f" stroke="#c1004f" stroke-width="1"/><path d="M524.4 650.1L530.7 632.9L520.4 633.3L515.7 646.2Z" fill="#bc0063" stroke="#bc0063" stroke-width="1"/><path d="M515.7 646.2L520.4 633.3L510.2 633.7L507.0 642.3Z" fill="#b70077" stroke="#b70077" stroke-width="1"/><path d="M507.0 642.3L510.2 633.7L499.9 634.1L498.3 638.4Z" fill="#b1008b" stroke="#b1008b" stroke-width="1"/><path d="M498.3 638.4L499.9 634.1L489.6 634.6L489.6 634.6Z" fill="#ac00a0" stroke="#ac00a0" stroke-width="1"/><path d="M533.1 654.0L533.1 654.0L524.4 650.1L517.4 654.1Z" fill="#cd0054" stroke="#cd0054" stroke-width="1"/><path d="M517.4 654.1L524.4 650.1L515.7 646.2L501.6 654.2Z" fill="#c80069" stroke="#c80069" stroke-width="1"/><path d="M501.6 654.2L515.7 646.2L507.0 642.3L485.9 654.4Z" fill="#c2007f" stroke="#c2007f" stroke-width="1"/><path d="M485.9 654.4L507.0 642.3L498.3 638.4L470.1 654.5Z" fill="#bd0094" stroke="#bd0094" stroke-width="1"/><path d="M470.1 654.5L498.3 638.4L489.6 634.6L454.3 654.6Z" fill="#b700aa" stroke="#b700aa" stroke-width="1"/><path d="M533.1 654.0L541.0 632.5L489.6 634.6L454.3 654.6Z" fill="none" stroke="#000" stroke-width="0.7" stroke-opacity="0.85"/><path d="M533.1 654.0L489.6 634.6" stroke="#000" stroke-width="0.75" stroke-dasharray="2.2 1.3" stroke-opacity="0.9"/><path d="M752.2 632.5L755.4 657.6L772.1 657.0L769.5 636.9Z" fill="#ce005a" stroke="#ce005a" stroke-width="1"/><path d="M769.5 636.9L772.1 657.0L788.8 656.4L786.9 641.3Z" fill="#c9006e" stroke="#c9006e" stroke-width="1"/><path d="M786.9 641.3L788.8 656.4L805.5 655.8L804.2 645.7Z" fill="#c40083" stroke="#c40083" stroke-width="1"/><path d="M804.2 645.7L805.5 655.8L822.2 655.2L821.5 650.2Z" fill="#be0098" stroke="#be0098" stroke-width="1"/><path d="M821.5 650.2L822.2 655.2L838.9 654.6L838.9 654.6Z" fill="#b900ac" stroke="#b900ac" stroke-width="1"/><path d="M752.2 632.5L752.2 632.5L769.5 636.9L762.5 632.9Z" fill="#d6005d" stroke="#d6005d" stroke-width="1"/><path d="M762.5 632.9L769.5 636.9L786.9 641.3L772.8 633.3Z" fill="#d10072" stroke="#d10072" stroke-width="1"/><path d="M772.8 633.3L786.9 641.3L804.2 645.7L783.0 633.7Z" fill="#cb0088" stroke="#cb0088" stroke-width="1"/><path d="M783.0 633.7L804.2 645.7L821.5 650.2L793.3 634.1Z" fill="#c6009d" stroke="#c6009d" stroke-width="1"/><path d="M793.3 634.1L821.5 650.2L838.9 654.6L803.6 634.6Z" fill="#c000b3" stroke="#c000b3" stroke-width="1"/><path d="M752.2 632.5L755.4 657.6L838.9 654.6L803.6 634.6Z" fill="none" stroke="#000" stroke-width="0.7" stroke-opacity="0.85"/><path d="M752.2 632.5L838.9 654.6" stroke="#000" stroke-width="0.75" stroke-dasharray="2.2 1.3" stroke-opacity="0.9"/><path d="M604.3 622.2L624.2 619.3L619.5 618.1L604.6 620.3Z" fill="#ea1501" stroke="#ea1501" stroke-width="1"/><path d="M604.6 620.3L619.5 618.1L614.9 616.9L605.0 618.4Z" fill="#e40b12" stroke="#e40b12" stroke-width="1"/><path d="M605.0 618.4L614.9 616.9L610.3 615.7L605.3 616.5Z" fill="#de0122" stroke="#de0122" stroke-width="1"/><path d="M605.3 616.5L610.3 615.7L605.6 614.6L605.6 614.6Z" fill="#d60041" stroke="#d60041" stroke-width="1"/><path d="M604.3 622.2L604.3 622.2L604.6 620.3L596.7 623.9Z" fill="#ce1301" stroke="#ce1301" stroke-width="1"/><path d="M596.7 623.9L604.6 620.3L605.0 618.4L589.0 625.5Z" fill="#c80a10" stroke="#c80a10" stroke-width="1"/><path d="M589.0 625.5L605.0 618.4L605.3 616.5L581.4 627.2Z" fill="#c3011e" stroke="#c3011e" stroke-width="1"/><path d="M581.4 627.2L605.3 616.5L605.6 614.6L573.8 628.9Z" fill="#bc0039" stroke="#bc0039" stroke-width="1"/><path d="M604.3 622.2L624.2 619.3L605.6 614.6L573.8 628.9Z" fill="none" stroke="#000" stroke-width="0.7" stroke-opacity="0.85"/><path d="M604.3 622.2L605.6 614.6" stroke="#000" stroke-width="0.75" stroke-dasharray="2.2 1.3" stroke-opacity="0.9"/><path d="M532.3 671.9L533.1 654.0L517.4 654.1L516.7 668.5Z" fill="#c30061" stroke="#c30061" stroke-width="1"/><path d="M516.7 668.5L517.4 654.1L501.6 654.2L501.1 665.0Z" fill="#bf0072" stroke="#bf0072" stroke-width="1"/><path d="M501.1 665.0L501.6 654.2L485.9 654.4L485.5 661.5Z" fill="#ba0084" stroke="#ba0084" stroke-width="1"/><path d="M485.5 661.5L485.9 654.4L470.1 654.5L469.9 658.1Z" fill="#b60095" stroke="#b60095" stroke-width="1"/><path d="M469.9 658.1L470.1 654.5L454.3 654.6L454.3 654.6Z" fill="#b100a7" stroke="#b100a7" stroke-width="1"/><path d="M532.3 671.9L532.3 671.9L516.7 668.5L512.3 673.1Z" fill="#c70063" stroke="#c70063" stroke-width="1"/><path d="M512.3 673.1L516.7 668.5L501.1 665.0L492.3 674.3Z" fill="#c20074" stroke="#c20074" stroke-width="1"/><path d="M492.3 674.3L501.1 665.0L485.5 661.5L472.2 675.5Z" fill="#be0086" stroke="#be0086" stroke-width="1"/><path d="M472.2 675.5L485.5 661.5L469.9 658.1L452.2 676.7Z" fill="#b90098" stroke="#b90098" stroke-width="1"/><path d="M452.2 676.7L469.9 658.1L454.3 654.6L432.2 677.9Z" fill="#b500aa" stroke="#b500aa" stroke-width="1"/><path d="M532.3 671.9L533.1 654.0L454.3 654.6L432.2 677.9Z" fill="none" stroke="#000" stroke-width="0.7" stroke-opacity="0.85"/><path d="M532.3 671.9L454.3 654.6" stroke="#000" stroke-width="0.75" stroke-dasharray="2.2 1.3" stroke-opacity="0.9"/><path d="M755.4 657.6L766.1 668.9L785.1 670.7L776.5 661.6Z" fill="#c90064" stroke="#c90064" stroke-width="1"/><path d="M776.5 661.6L785.1 670.7L804.1 672.5L797.6 665.7Z" fill="#c50076" stroke="#c50076" stroke-width="1"/><path d="M797.6 665.7L804.1 672.5L823.1 674.3L818.8 669.8Z" fill="#c00088" stroke="#c00088" stroke-width="1"/><path d="M818.8 669.8L823.1 674.3L842.0 676.1L839.9 673.9Z" fill="#bc009a" stroke="#bc009a" stroke-width="1"/><path d="M839.9 673.9L842.0 676.1L861.0 677.9L861.0 677.9Z" fill="#b700ac" stroke="#b700ac" stroke-width="1"/><path d="M755.4 657.6L755.4 657.6L776.5 661.6L772.1 657.0Z" fill="#c90064" stroke="#c90064" stroke-width="1"/><path d="M772.1 657.0L776.5 661.6L797.6 665.7L788.8 656.4Z" fill="#c50076" stroke="#c50076" stroke-width="1"/><path d="M788.8 656.4L797.6 665.7L818.8 669.8L805.5 655.8Z" fill="#c00088" stroke="#c00088" stroke-width="1"/><path d="M805.5 655.8L818.8 669.8L839.9 673.9L822.2 655.2Z" fill="#bc009a" stroke="#bc009a" stroke-width="1"/><path d="M822.2 655.2L839.9 673.9L861.0 677.9L838.9 654.6Z" fill="#b700ac" stroke="#b700ac" stroke-width="1"/><path d="M755.4 657.6L766.1 668.9L861.0 677.9L838.9 654.6Z" fill="none" stroke="#000" stroke-width="0.7" stroke-opacity="0.85"/><path d="M755.4 657.6L861.0 677.9" stroke="#000" stroke-width="0.75" stroke-dasharray="2.2 1.3" stroke-opacity="0.9"/><path d="M571.6 615.9L583.1 609.0L572.6 614.8L563.9 620.0Z" fill="#e94100" stroke="#e94100" stroke-width="1"/><path d="M563.9 620.0L572.6 614.8L562.1 620.7L556.3 624.2Z" fill="#e92300" stroke="#e92300" stroke-width="1"/><path d="M556.3 624.2L562.1 620.7L551.5 626.6L548.6 628.3Z" fill="#e30d0f" stroke="#e30d0f" stroke-width="1"/><path d="M548.6 628.3L551.5 626.6L541.0 632.5L541.0 632.5Z" fill="#d9002f" stroke="#d9002f" stroke-width="1"/><path d="M571.6 615.9L571.6 615.9L563.9 620.0L562.0 625.4Z" fill="#c53700" stroke="#c53700" stroke-width="1"/><path d="M562.0 625.4L563.9 620.0L556.3 624.2L552.4 634.9Z" fill="#c51e00" stroke="#c51e00" stroke-width="1"/><path d="M552.4 634.9L556.3 624.2L548.6 628.3L542.7 644.5Z" fill="#c00b0d" stroke="#c00b0d" stroke-width="1"/><path d="M542.7 644.5L548.6 628.3L541.0 632.5L533.1 654.0Z" fill="#b70028" stroke="#b70028" stroke-width="1"/><path d="M571.6 615.9L583.1 609.0L541.0 632.5L533.1 654.0Z" fill="none" stroke="#000" stroke-width="0.7" stroke-opacity="0.85"/><path d="M571.6 615.9L541.0 632.5" stroke="#000" stroke-width="0.75" stroke-dasharray="2.2 1.3" stroke-opacity="0.9"/><path d="M710.1 609.0L719.9 620.2L728.8 629.6L721.4 621.1Z" fill="#ce3500" stroke="#ce3500" stroke-width="1"/><path d="M721.4 621.1L728.8 629.6L737.6 638.9L732.7 633.3Z" fill="#ce1b00" stroke="#ce1b00" stroke-width="1"/><path d="M732.7 633.3L737.6 638.9L746.5 648.2L744.1 645.4Z" fill="#c70910" stroke="#c70910" stroke-width="1"/><path d="M744.1 645.4L746.5 648.2L755.4 657.6L755.4 657.6Z" fill="#be002f" stroke="#be002f" stroke-width="1"/><path d="M710.1 609.0L710.1 609.0L721.4 621.1L720.6 614.8Z" fill="#c93400" stroke="#c93400" stroke-width="1"/><path d="M720.6 614.8L721.4 621.1L732.7 633.3L731.1 620.7Z" fill="#c91a00" stroke="#c91a00" stroke-width="1"/><path d="M731.1 620.7L732.7 633.3L744.1 645.4L741.7 626.6Z" fill="#c30910" stroke="#c30910" stroke-width="1"/><path d="M741.7 626.6L744.1 645.4L755.4 657.6L752.2 632.5Z" fill="#ba002e" stroke="#ba002e" stroke-width="1"/><path d="M710.1 609.0L719.9 620.2L755.4 657.6L752.2 632.5Z" fill="none" stroke="#000" stroke-width="0.7" stroke-opacity="0.85"/><path d="M710.1 609.0L755.4 657.6" stroke="#000" stroke-width="0.75" stroke-dasharray="2.2 1.3" stroke-opacity="0.9"/><path d="M564.9 623.0L571.6 615.9L562.0 625.4L556.9 630.8Z" fill="#ff4900" stroke="#ff4900" stroke-width="1"/><path d="M556.9 630.8L562.0 625.4L552.4 634.9L549.0 638.5Z" fill="#ff2400" stroke="#ff2400" stroke-width="1"/><path d="M549.0 638.5L552.4 634.9L542.7 644.5L541.1 646.3Z" fill="#f60b15" stroke="#f60b15" stroke-width="1"/><path d="M541.1 646.3L542.7 644.5L533.1 654.0L533.1 654.0Z" fill="#e80044" stroke="#e80044" stroke-width="1"/><path d="M564.9 623.0L564.9 623.0L556.9 630.8L556.7 635.3Z" fill="#d23c00" stroke="#d23c00" stroke-width="1"/><path d="M556.7 635.3L556.9 630.8L549.0 638.5L548.6 647.5Z" fill="#d21e00" stroke="#d21e00" stroke-width="1"/><path d="M548.6 647.5L549.0 638.5L541.1 646.3L540.5 659.7Z" fill="#cb0912" stroke="#cb0912" stroke-width="1"/><path d="M540.5 659.7L541.1 646.3L533.1 654.0L532.3 671.9Z" fill="#c00038" stroke="#c00038" stroke-width="1"/><path d="M564.9 623.0L571.6 615.9L533.1 654.0L532.3 671.9Z" fill="none" stroke="#000" stroke-width="0.7" stroke-opacity="0.85"/><path d="M564.9 623.0L533.1 654.0" stroke="#000" stroke-width="0.75" stroke-dasharray="2.2 1.3" stroke-opacity="0.9"/><path d="M766.1 668.9L776.0 678.9L794.5 683.7L786.6 675.7Z" fill="#ce005a" stroke="#ce005a" stroke-width="1"/><path d="M786.6 675.7L794.5 683.7L813.0 688.5L807.1 682.5Z" fill="#c9006e" stroke="#c9006e" stroke-width="1"/><path d="M807.1 682.5L813.0 688.5L831.5 693.4L827.6 689.4Z" fill="#c40083" stroke="#c40083" stroke-width="1"/><path d="M827.6 689.4L831.5 693.4L850.1 698.2L848.1 696.2Z" fill="#bf0098" stroke="#bf0098" stroke-width="1"/><path d="M848.1 696.2L850.1 698.2L868.6 703.0L868.6 703.0Z" fill="#ba00ad" stroke="#ba00ad" stroke-width="1"/><path d="M766.1 668.9L766.1 668.9L786.6 675.7L785.1 670.7Z" fill="#d0005b" stroke="#d0005b" stroke-width="1"/><path d="M785.1 670.7L786.6 675.7L807.1 682.5L804.1 672.5Z" fill="#cb006f" stroke="#cb006f" stroke-width="1"/><path d="M804.1 672.5L807.1 682.5L827.6 689.4L823.1 674.3Z" fill="#c60084" stroke="#c60084" stroke-width="1"/><path d="M823.1 674.3L827.6 689.4L848.1 696.2L842.0 676.1Z" fill="#c10099" stroke="#c10099" stroke-width="1"/><path d="M842.0 676.1L848.1 696.2L868.6 703.0L861.0 677.9Z" fill="#bb00ae" stroke="#bb00ae" stroke-width="1"/><path d="M766.1 668.9L776.0 678.9L868.6 703.0L861.0 677.9Z" fill="none" stroke="#000" stroke-width="0.7" stroke-opacity="0.85"/><path d="M766.1 668.9L868.6 703.0" stroke="#000" stroke-width="0.75" stroke-dasharray="2.2 1.3" stroke-opacity="0.9"/><path d="M517.2 678.9L532.3 671.9L512.3 673.1L500.2 678.7Z" fill="#cf0060" stroke="#cf0060" stroke-width="1"/><path d="M500.2 678.7L512.3 673.1L492.3 674.3L483.2 678.5Z" fill="#ca0073" stroke="#ca0073" stroke-width="1"/><path d="M483.2 678.5L492.3 674.3L472.2 675.5L466.2 678.3Z" fill="#c50087" stroke="#c50087" stroke-width="1"/><path d="M466.2 678.3L472.2 675.5L452.2 676.7L449.2 678.1Z" fill="#c0009b" stroke="#c0009b" stroke-width="1"/><path d="M449.2 678.1L452.2 676.7L432.2 677.9L432.2 677.9Z" fill="#bb00af" stroke="#bb00af" stroke-width="1"/><path d="M517.2 678.9L517.2 678.9L500.2 678.7L498.7 683.7Z" fill="#d50063" stroke="#d50063" stroke-width="1"/><path d="M498.7 683.7L500.2 678.7L483.2 678.5L480.2 688.5Z" fill="#d00077" stroke="#d00077" stroke-width="1"/><path d="M480.2 688.5L483.2 678.5L466.2 678.3L461.7 693.4Z" fill="#cb008c" stroke="#cb008c" stroke-width="1"/><path d="M461.7 693.4L466.2 678.3L449.2 678.1L443.1 698.2Z" fill="#c600a0" stroke="#c600a0" stroke-width="1"/><path d="M443.1 698.2L449.2 678.1L432.2 677.9L424.6 703.0Z" fill="#c100b4" stroke="#c100b4" stroke-width="1"/><path d="M517.2 678.9L532.3 671.9L432.2 677.9L424.6 703.0Z" fill="none" stroke="#000" stroke-width="0.7" stroke-opacity="0.85"/><path d="M517.2 678.9L432.2 677.9" stroke="#000" stroke-width="0.75" stroke-dasharray="2.2 1.3" stroke-opacity="0.9"/><path d="M678.1 566.4L691.1 570.1L695.9 573.8L686.1 571.0Z" fill="#939000" stroke="#939000" stroke-width="1"/><path d="M686.1 571.0L695.9 573.8L700.6 577.4L694.1 575.5Z" fill="#9c8800" stroke="#9c8800" stroke-width="1"/><path d="M694.1 575.5L700.6 577.4L705.3 581.0L702.1 580.1Z" fill="#9c7b00" stroke="#9c7b00" stroke-width="1"/><path d="M702.1 580.1L705.3 581.0L710.1 584.6L710.1 584.6Z" fill="#9c6e00" stroke="#9c6e00" stroke-width="1"/><path d="M678.1 566.4L678.1 566.4L686.1 571.0L681.1 569.9Z" fill="#aeab00" stroke="#aeab00" stroke-width="1"/><path d="M681.1 569.9L686.1 571.0L694.1 575.5L684.0 573.3Z" fill="#baa100" stroke="#baa100" stroke-width="1"/><path d="M684.0 573.3L694.1 575.5L702.1 580.1L687.0 576.7Z" fill="#ba9200" stroke="#ba9200" stroke-width="1"/><path d="M687.0 576.7L702.1 580.1L710.1 584.6L689.9 580.2Z" fill="#ba8300" stroke="#ba8300" stroke-width="1"/><path d="M678.1 566.4L691.1 570.1L710.1 584.6L689.9 580.2Z" fill="none" stroke="#000" stroke-width="0.7" stroke-opacity="0.85"/><path d="M678.1 566.4L710.1 584.6" stroke="#000" stroke-width="0.95" stroke-dasharray="2.2 1.3" stroke-opacity="0.9"/><path d="M592.0 575.0L602.1 570.1L597.3 573.8L589.8 577.4Z" fill="#cac500" stroke="#cac500" stroke-width="1"/><path d="M589.8 577.4L597.3 573.8L592.6 577.4L587.6 579.8Z" fill="#d7bb00" stroke="#d7bb00" stroke-width="1"/><path d="M587.6 579.8L592.6 577.4L587.9 581.0L585.4 582.2Z" fill="#d7a900" stroke="#d7a900" stroke-width="1"/><path d="M585.4 582.2L587.9 581.0L583.1 584.6L583.1 584.6Z" fill="#d79800" stroke="#d79800" stroke-width="1"/><path d="M592.0 575.0L592.0 575.0L589.8 577.4L586.9 579.4Z" fill="#dfdb00" stroke="#dfdb00" stroke-width="1"/><path d="M586.9 579.4L589.8 577.4L587.6 579.8L581.8 583.7Z" fill="#eecf00" stroke="#eecf00" stroke-width="1"/><path d="M581.8 583.7L587.6 579.8L585.4 582.2L576.7 588.1Z" fill="#eebc00" stroke="#eebc00" stroke-width="1"/><path d="M576.7 588.1L585.4 582.2L583.1 584.6L571.6 592.4Z" fill="#eea800" stroke="#eea800" stroke-width="1"/><path d="M592.0 575.0L602.1 570.1L583.1 584.6L571.6 592.4Z" fill="none" stroke="#000" stroke-width="0.7" stroke-opacity="0.85"/><path d="M592.0 575.0L583.1 584.6" stroke="#000" stroke-width="0.95" stroke-dasharray="2.2 1.3" stroke-opacity="0.9"/><path d="M691.1 570.1L701.2 575.0L705.8 579.5L698.3 575.8Z" fill="#c6c200" stroke="#c6c200" stroke-width="1"/><path d="M698.3 575.8L705.8 579.5L710.5 583.9L705.5 581.5Z" fill="#d3b800" stroke="#d3b800" stroke-width="1"/><path d="M705.5 581.5L710.5 583.9L715.2 588.4L712.7 587.1Z" fill="#d3a600" stroke="#d3a600" stroke-width="1"/><path d="M712.7 587.1L715.2 588.4L719.9 592.8L719.9 592.8Z" fill="#d39500" stroke="#d39500" stroke-width="1"/><path d="M691.1 570.1L691.1 570.1L698.3 575.8L695.9 573.8Z" fill="#b6b200" stroke="#b6b200" stroke-width="1"/><path d="M695.9 573.8L698.3 575.8L705.5 581.5L700.6 577.4Z" fill="#c2a900" stroke="#c2a900" stroke-width="1"/><path d="M700.6 577.4L705.5 581.5L712.7 587.1L705.3 581.0Z" fill="#c29900" stroke="#c29900" stroke-width="1"/><path d="M705.3 581.0L712.7 587.1L719.9 592.8L710.1 584.6Z" fill="#c28900" stroke="#c28900" stroke-width="1"/><path d="M691.1 570.1L701.2 575.0L719.9 592.8L710.1 584.6Z" fill="none" stroke="#000" stroke-width="0.7" stroke-opacity="0.85"/><path d="M691.1 570.1L719.9 592.8" stroke="#000" stroke-width="0.95" stroke-dasharray="2.2 1.3" stroke-opacity="0.9"/><path d="M730.3 618.8L736.4 619.5L746.3 634.4L741.7 633.9Z" fill="#a13f00" stroke="#a13f00" stroke-width="1"/><path d="M741.7 633.9L746.3 634.4L756.2 649.2L753.1 648.9Z" fill="#a12300" stroke="#a12300" stroke-width="1"/><path d="M753.1 648.9L756.2 649.2L766.1 664.1L764.5 663.9Z" fill="#9e0c05" stroke="#9e0c05" stroke-width="1"/><path d="M764.5 663.9L766.1 664.1L776.0 678.9L776.0 678.9Z" fill="#950020" stroke="#950020" stroke-width="1"/><path d="M730.3 618.8L730.3 618.8L741.7 633.9L739.2 631.4Z" fill="#bb4900" stroke="#bb4900" stroke-width="1"/><path d="M739.2 631.4L741.7 633.9L753.1 648.9L748.2 643.9Z" fill="#bb2900" stroke="#bb2900" stroke-width="1"/><path d="M748.2 643.9L753.1 648.9L764.5 663.9L757.1 656.4Z" fill="#b90e06" stroke="#b90e06" stroke-width="1"/><path d="M757.1 656.4L764.5 663.9L776.0 678.9L766.1 668.9Z" fill="#ae0025" stroke="#ae0025" stroke-width="1"/><path d="M730.3 618.8L736.4 619.5L776.0 678.9L766.1 668.9Z" fill="none" stroke="#000" stroke-width="0.7" stroke-opacity="0.85"/><path d="M730.3 618.8L776.0 678.9" stroke="#000" stroke-width="0.95" stroke-dasharray="2.2 1.3" stroke-opacity="0.9"/><path d="M585.7 580.7L592.0 575.0L586.9 579.4L582.2 583.6Z" fill="#a19e00" stroke="#a19e00" stroke-width="1"/><path d="M582.2 583.6L586.9 579.4L581.8 583.7L578.7 586.5Z" fill="#ab9500" stroke="#ab9500" stroke-width="1"/><path d="M578.7 586.5L581.8 583.7L576.7 588.1L575.1 589.5Z" fill="#ab8700" stroke="#ab8700" stroke-width="1"/><path d="M575.1 589.5L576.7 588.1L571.6 592.4L571.6 592.4Z" fill="#ab7900" stroke="#ab7900" stroke-width="1"/><path d="M585.7 580.7L585.7 580.7L582.2 583.6L580.5 585.7Z" fill="#a6a300" stroke="#a6a300" stroke-width="1"/><path d="M580.5 585.7L582.2 583.6L578.7 586.5L575.3 590.7Z" fill="#b19a00" stroke="#b19a00" stroke-width="1"/><path d="M575.3 590.7L578.7 586.5L575.1 589.5L570.1 595.7Z" fill="#b18c00" stroke="#b18c00" stroke-width="1"/><path d="M570.1 595.7L575.1 589.5L571.6 592.4L564.9 600.7Z" fill="#b17d00" stroke="#b17d00" stroke-width="1"/><path d="M585.7 580.7L592.0 575.0L571.6 592.4L564.9 600.7Z" fill="none" stroke="#000" stroke-width="0.7" stroke-opacity="0.85"/><path d="M585.7 580.7L571.6 592.4" stroke="#000" stroke-width="0.95" stroke-dasharray="2.2 1.3" stroke-opacity="0.9"/><path d="M701.2 575.0L707.5 580.7L713.2 585.6L708.4 581.4Z" fill="#cbc700" stroke="#cbc700" stroke-width="1"/><path d="M708.4 581.4L713.2 585.6L718.9 590.6L715.7 587.7Z" fill="#d8bc00" stroke="#d8bc00" stroke-width="1"/><path d="M715.7 587.7L718.9 590.6L724.6 595.5L723.0 594.1Z" fill="#d8aa00" stroke="#d8aa00" stroke-width="1"/><path d="M723.0 594.1L724.6 595.5L730.3 600.5L730.3 600.5Z" fill="#d89900" stroke="#d89900" stroke-width="1"/><path d="M701.2 575.0L701.2 575.0L708.4 581.4L705.8 579.5Z" fill="#979400" stroke="#979400" stroke-width="1"/><path d="M705.8 579.5L708.4 581.4L715.7 587.7L710.5 583.9Z" fill="#a18c00" stroke="#a18c00" stroke-width="1"/><path d="M710.5 583.9L715.7 587.7L723.0 594.1L715.2 588.4Z" fill="#a17e00" stroke="#a17e00" stroke-width="1"/><path d="M715.2 588.4L723.0 594.1L730.3 600.5L719.9 592.8Z" fill="#a17100" stroke="#a17100" stroke-width="1"/><path d="M701.2 575.0L707.5 580.7L730.3 600.5L719.9 592.8Z" fill="none" stroke="#000" stroke-width="0.7" stroke-opacity="0.85"/><path d="M701.2 575.0L730.3 600.5" stroke="#000" stroke-width="0.95" stroke-dasharray="2.2 1.3" stroke-opacity="0.9"/><path d="M776.0 678.9L760.9 698.1L780.9 704.1L793.0 688.7Z" fill="#cf0060" stroke="#cf0060" stroke-width="1"/><path d="M793.0 688.7L780.9 704.1L800.9 710.1L810.0 698.6Z" fill="#ca0073" stroke="#ca0073" stroke-width="1"/><path d="M810.0 698.6L800.9 710.1L821.0 716.1L827.0 708.4Z" fill="#c50087" stroke="#c50087" stroke-width="1"/><path d="M827.0 708.4L821.0 716.1L841.0 722.1L844.0 718.2Z" fill="#c0009b" stroke="#c0009b" stroke-width="1"/><path d="M844.0 718.2L841.0 722.1L861.0 728.1L861.0 728.1Z" fill="#bb00af" stroke="#bb00af" stroke-width="1"/><path d="M776.0 678.9L776.0 678.9L793.0 688.7L794.5 683.7Z" fill="#d50063" stroke="#d50063" stroke-width="1"/><path d="M794.5 683.7L793.0 688.7L810.0 698.6L813.0 688.5Z" fill="#d00077" stroke="#d00077" stroke-width="1"/><path d="M813.0 688.5L810.0 698.6L827.0 708.4L831.5 693.4Z" fill="#cb008c" stroke="#cb008c" stroke-width="1"/><path d="M831.5 693.4L827.0 708.4L844.0 718.2L850.1 698.2Z" fill="#c600a0" stroke="#c600a0" stroke-width="1"/><path d="M850.1 698.2L844.0 718.2L861.0 728.1L868.6 703.0Z" fill="#c100b4" stroke="#c100b4" stroke-width="1"/><path d="M776.0 678.9L760.9 698.1L861.0 728.1L868.6 703.0Z" fill="none" stroke="#000" stroke-width="0.7" stroke-opacity="0.85"/><path d="M776.0 678.9L861.0 728.1" stroke="#000" stroke-width="0.75" stroke-dasharray="2.2 1.3" stroke-opacity="0.9"/><path d="M527.1 696.1L517.2 678.9L498.7 683.7L506.6 697.5Z" fill="#ce005a" stroke="#ce005a" stroke-width="1"/><path d="M506.6 697.5L498.7 683.7L480.2 688.5L486.1 698.9Z" fill="#c9006e" stroke="#c9006e" stroke-width="1"/><path d="M486.1 698.9L480.2 688.5L461.7 693.4L465.6 700.2Z" fill="#c40083" stroke="#c40083" stroke-width="1"/><path d="M465.6 700.2L461.7 693.4L443.1 698.2L445.1 701.6Z" fill="#bf0098" stroke="#bf0098" stroke-width="1"/><path d="M445.1 701.6L443.1 698.2L424.6 703.0L424.6 703.0Z" fill="#ba00ad" stroke="#ba00ad" stroke-width="1"/><path d="M527.1 696.1L527.1 696.1L506.6 697.5L508.1 702.5Z" fill="#d0005b" stroke="#d0005b" stroke-width="1"/><path d="M508.1 702.5L506.6 697.5L486.1 698.9L489.1 708.9Z" fill="#cb006f" stroke="#cb006f" stroke-width="1"/><path d="M489.1 708.9L486.1 698.9L465.6 700.2L470.1 715.3Z" fill="#c60084" stroke="#c60084" stroke-width="1"/><path d="M470.1 715.3L465.6 700.2L445.1 701.6L451.2 721.7Z" fill="#c10099" stroke="#c10099" stroke-width="1"/><path d="M451.2 721.7L445.1 701.6L424.6 703.0L432.2 728.1Z" fill="#bb00ae" stroke="#bb00ae" stroke-width="1"/><path d="M527.1 696.1L517.2 678.9L424.6 703.0L432.2 728.1Z" fill="none" stroke="#000" stroke-width="0.7" stroke-opacity="0.85"/><path d="M527.1 696.1L424.6 703.0" stroke="#000" stroke-width="0.75" stroke-dasharray="2.2 1.3" stroke-opacity="0.9"/><path d="M736.4 619.5L728.3 640.5L736.5 654.9L742.5 639.1Z" fill="#c64900" stroke="#c64900" stroke-width="1"/><path d="M742.5 639.1L736.5 654.9L744.6 669.3L748.6 658.8Z" fill="#c62700" stroke="#c62700" stroke-width="1"/><path d="M748.6 658.8L744.6 669.3L752.7 683.7L754.7 678.4Z" fill="#c30d0a" stroke="#c30d0a" stroke-width="1"/><path d="M754.7 678.4L752.7 683.7L760.9 698.1L760.9 698.1Z" fill="#b7002d" stroke="#b7002d" stroke-width="1"/><path d="M736.4 619.5L736.4 619.5L742.5 639.1L746.3 634.4Z" fill="#e15200" stroke="#e15200" stroke-width="1"/><path d="M746.3 634.4L742.5 639.1L748.6 658.8L756.2 649.2Z" fill="#e12c00" stroke="#e12c00" stroke-width="1"/><path d="M756.2 649.2L748.6 658.8L754.7 678.4L766.1 664.1Z" fill="#dc0e0b" stroke="#dc0e0b" stroke-width="1"/><path d="M766.1 664.1L754.7 678.4L760.9 698.1L776.0 678.9Z" fill="#cf0033" stroke="#cf0033" stroke-width="1"/><path d="M736.4 619.5L728.3 640.5L760.9 698.1L776.0 678.9Z" fill="none" stroke="#000" stroke-width="0.7" stroke-opacity="0.85"/><path d="M736.4 619.5L760.9 698.1" stroke="#000" stroke-width="0.95" stroke-dasharray="2.2 1.3" stroke-opacity="0.9"/><path d="M562.9 636.6L556.8 619.5L546.9 634.4L551.5 647.2Z" fill="#a13f00" stroke="#a13f00" stroke-width="1"/><path d="M551.5 647.2L546.9 634.4L537.0 649.2L540.1 657.7Z" fill="#a12300" stroke="#a12300" stroke-width="1"/><path d="M540.1 657.7L537.0 649.2L527.1 664.1L528.7 668.3Z" fill="#9f0c05" stroke="#9f0c05" stroke-width="1"/><path d="M528.7 668.3L527.1 664.1L517.2 678.9L517.2 678.9Z" fill="#960020" stroke="#960020" stroke-width="1"/><path d="M562.9 636.6L562.9 636.6L551.5 647.2L554.0 651.5Z" fill="#d55300" stroke="#d55300" stroke-width="1"/><path d="M554.0 651.5L551.5 647.2L540.1 657.7L545.0 666.4Z" fill="#d52e00" stroke="#d52e00" stroke-width="1"/><path d="M545.0 666.4L540.1 657.7L528.7 668.3L536.1 681.2Z" fill="#d21007" stroke="#d21007" stroke-width="1"/><path d="M536.1 681.2L528.7 668.3L517.2 678.9L527.1 696.1Z" fill="#c6002a" stroke="#c6002a" stroke-width="1"/><path d="M562.9 636.6L556.8 619.5L517.2 678.9L527.1 696.1Z" fill="none" stroke="#000" stroke-width="0.7" stroke-opacity="0.85"/><path d="M562.9 636.6L517.2 678.9" stroke="#000" stroke-width="0.95" stroke-dasharray="2.2 1.3" stroke-opacity="0.9"/><path d="M707.5 580.7L709.6 586.8L716.3 592.4L714.7 587.8Z" fill="#a09d00" stroke="#a09d00" stroke-width="1"/><path d="M714.7 587.8L716.3 592.4L723.0 597.9L721.9 594.9Z" fill="#ab9400" stroke="#ab9400" stroke-width="1"/><path d="M721.9 594.9L723.0 597.9L729.7 603.5L729.1 602.0Z" fill="#ab8600" stroke="#ab8600" stroke-width="1"/><path d="M729.1 602.0L729.7 603.5L736.4 609.1L736.4 609.1Z" fill="#ab7800" stroke="#ab7800" stroke-width="1"/><path d="M707.5 580.7L707.5 580.7L714.7 587.8L713.2 585.6Z" fill="#a9a600" stroke="#a9a600" stroke-width="1"/><path d="M713.2 585.6L714.7 587.8L721.9 594.9L718.9 590.6Z" fill="#b49d00" stroke="#b49d00" stroke-width="1"/><path d="M718.9 590.6L721.9 594.9L729.1 602.0L724.6 595.5Z" fill="#b48e00" stroke="#b48e00" stroke-width="1"/><path d="M724.6 595.5L729.1 602.0L736.4 609.1L730.3 600.5Z" fill="#b47f00" stroke="#b47f00" stroke-width="1"/><path d="M707.5 580.7L709.6 586.8L736.4 609.1L730.3 600.5Z" fill="none" stroke="#000" stroke-width="0.7" stroke-opacity="0.85"/><path d="M707.5 580.7L736.4 609.1" stroke="#000" stroke-width="0.95" stroke-dasharray="2.2 1.3" stroke-opacity="0.9"/><path d="M583.6 586.8L585.7 580.7L580.5 585.7L578.9 590.2Z" fill="#c2be00" stroke="#c2be00" stroke-width="1"/><path d="M578.9 590.2L580.5 585.7L575.3 590.7L574.2 593.7Z" fill="#cfb400" stroke="#cfb400" stroke-width="1"/><path d="M574.2 593.7L575.3 590.7L570.1 595.7L569.6 597.2Z" fill="#cfa300" stroke="#cfa300" stroke-width="1"/><path d="M569.6 597.2L570.1 595.7L564.9 600.7L564.9 600.7Z" fill="#cf9200" stroke="#cf9200" stroke-width="1"/><path d="M583.6 586.8L583.6 586.8L578.9 590.2L576.9 592.4Z" fill="#efea00" stroke="#efea00" stroke-width="1"/><path d="M576.9 592.4L578.9 590.2L574.2 593.7L570.2 597.9Z" fill="#ffdd00" stroke="#ffdd00" stroke-width="1"/><path d="M570.2 597.9L574.2 593.7L569.6 597.2L563.5 603.5Z" fill="#ffc800" stroke="#ffc800" stroke-width="1"/><path d="M563.5 603.5L569.6 597.2L564.9 600.7L556.8 609.1Z" fill="#ffb400" stroke="#ffb400" stroke-width="1"/><path d="M583.6 586.8L585.7 580.7L564.9 600.7L556.8 609.1Z" fill="none" stroke="#000" stroke-width="0.7" stroke-opacity="0.85"/><path d="M583.6 586.8L564.9 600.7" stroke="#000" stroke-width="0.95" stroke-dasharray="2.2 1.3" stroke-opacity="0.9"/><path d="M686.4 556.4L691.0 560.4L695.1 565.5L691.7 562.5Z" fill="#76fb00" stroke="#76fb00" stroke-width="1"/><path d="M691.7 562.5L695.1 565.5L699.2 570.5L696.9 568.5Z" fill="#9cfb00" stroke="#9cfb00" stroke-width="1"/><path d="M696.9 568.5L699.2 570.5L703.3 575.6L702.2 574.6Z" fill="#c3fb00" stroke="#c3fb00" stroke-width="1"/><path d="M702.2 574.6L703.3 575.6L707.5 580.7L707.5 580.7Z" fill="#d9f200" stroke="#d9f200" stroke-width="1"/><path d="M686.4 556.4L686.4 556.4L691.7 562.5L690.1 561.0Z" fill="#76fb00" stroke="#76fb00" stroke-width="1"/><path d="M690.1 561.0L691.7 562.5L696.9 568.5L693.8 565.7Z" fill="#9cfb00" stroke="#9cfb00" stroke-width="1"/><path d="M693.8 565.7L696.9 568.5L702.2 574.6L697.5 570.4Z" fill="#c3fb00" stroke="#c3fb00" stroke-width="1"/><path d="M697.5 570.4L702.2 574.6L707.5 580.7L701.2 575.0Z" fill="#d9f200" stroke="#d9f200" stroke-width="1"/><path d="M686.4 556.4L691.0 560.4L707.5 580.7L701.2 575.0Z" fill="none" stroke="#000" stroke-width="0.7" stroke-opacity="0.85"/><path d="M686.4 556.4L707.5 580.7" stroke="#000" stroke-width="0.95" stroke-dasharray="2.2 1.3" stroke-opacity="0.9"/><path d="M602.2 560.4L606.8 556.4L603.1 561.0L599.6 564.0Z" fill="#76fb00" stroke="#76fb00" stroke-width="1"/><path d="M599.6 564.0L603.1 561.0L599.4 565.7L597.1 567.7Z" fill="#9cfb00" stroke="#9cfb00" stroke-width="1"/><path d="M597.1 567.7L599.4 565.7L595.7 570.4L594.6 571.4Z" fill="#c3fb00" stroke="#c3fb00" stroke-width="1"/><path d="M594.6 571.4L595.7 570.4L592.0 575.0L592.0 575.0Z" fill="#d9f200" stroke="#d9f200" stroke-width="1"/><path d="M602.2 560.4L602.2 560.4L599.6 564.0L598.1 565.5Z" fill="#76fb00" stroke="#76fb00" stroke-width="1"/><path d="M598.1 565.5L599.6 564.0L597.1 567.7L594.0 570.5Z" fill="#9cfb00" stroke="#9cfb00" stroke-width="1"/><path d="M594.0 570.5L597.1 567.7L594.6 571.4L589.9 575.6Z" fill="#c3fb00" stroke="#c3fb00" stroke-width="1"/><path d="M589.9 575.6L594.6 571.4L592.0 575.0L585.7 580.7Z" fill="#d9f200" stroke="#d9f200" stroke-width="1"/><path d="M602.2 560.4L606.8 556.4L592.0 575.0L585.7 580.7Z" fill="none" stroke="#000" stroke-width="0.7" stroke-opacity="0.85"/><path d="M602.2 560.4L592.0 575.0" stroke="#000" stroke-width="0.95" stroke-dasharray="2.2 1.3" stroke-opacity="0.9"/><path d="M736.4 609.1L728.3 617.6L728.3 620.8L735.2 613.6Z" fill="#7b5000" stroke="#7b5000" stroke-width="1"/><path d="M735.2 613.6L728.3 620.8L728.3 624.1L734.1 618.1Z" fill="#7b4c00" stroke="#7b4c00" stroke-width="1"/><path d="M734.1 618.1L728.3 624.1L728.3 627.4L732.9 622.5Z" fill="#7b4800" stroke="#7b4800" stroke-width="1"/><path d="M732.9 622.5L728.3 627.4L728.3 630.6L731.8 627.0Z" fill="#7b4500" stroke="#7b4500" stroke-width="1"/><path d="M731.8 627.0L728.3 630.6L728.3 633.9L730.6 631.5Z" fill="#7b4100" stroke="#7b4100" stroke-width="1"/><path d="M730.6 631.5L728.3 633.9L728.3 637.2L729.5 636.0Z" fill="#7b3d00" stroke="#7b3d00" stroke-width="1"/><path d="M729.5 636.0L728.3 637.2L728.3 640.5L728.3 640.5Z" fill="#7b3a00" stroke="#7b3a00" stroke-width="1"/><path d="M736.4 609.1L736.4 609.1L735.2 613.6L736.4 610.6Z" fill="#825500" stroke="#825500" stroke-width="1"/><path d="M736.4 610.6L735.2 613.6L734.1 618.1L736.4 612.1Z" fill="#825100" stroke="#825100" stroke-width="1"/><path d="M736.4 612.1L734.1 618.1L732.9 622.5L736.4 613.6Z" fill="#824d00" stroke="#824d00" stroke-width="1"/><path d="M736.4 613.6L732.9 622.5L731.8 627.0L736.4 615.1Z" fill="#824900" stroke="#824900" stroke-width="1"/><path d="M736.4 615.1L731.8 627.0L730.6 631.5L736.4 616.5Z" fill="#824500" stroke="#824500" stroke-width="1"/><path d="M736.4 616.5L730.6 631.5L729.5 636.0L736.4 618.0Z" fill="#824100" stroke="#824100" stroke-width="1"/><path d="M736.4 618.0L729.5 636.0L728.3 640.5L736.4 619.5Z" fill="#823d00" stroke="#823d00" stroke-width="1"/><path d="M736.4 609.1L728.3 617.6L728.3 640.5L736.4 619.5Z" fill="none" stroke="#000" stroke-width="0.7" stroke-opacity="0.85"/><path d="M736.4 609.1L728.3 640.5" stroke="#000" stroke-width="0.95" stroke-dasharray="2.2 1.3" stroke-opacity="0.9"/><path d="M562.9 617.8L556.8 609.1L556.8 610.6L562.1 618.0Z" fill="#8d5c00" stroke="#8d5c00" stroke-width="1"/><path d="M562.1 618.0L556.8 610.6L556.8 612.1L561.2 618.3Z" fill="#8d5800" stroke="#8d5800" stroke-width="1"/><path d="M561.2 618.3L556.8 612.1L556.8 613.6L560.3 618.5Z" fill="#8d5500" stroke="#8d5500" stroke-width="1"/><path d="M560.3 618.5L556.8 613.6L556.8 615.1L559.4 618.8Z" fill="#8d5100" stroke="#8d5100" stroke-width="1"/><path d="M559.4 618.8L556.8 615.1L556.8 616.5L558.6 619.0Z" fill="#8d4d00" stroke="#8d4d00" stroke-width="1"/><path d="M558.6 619.0L556.8 616.5L556.8 618.0L557.7 619.3Z" fill="#8d4900" stroke="#8d4900" stroke-width="1"/><path d="M557.7 619.3L556.8 618.0L556.8 619.5L556.8 619.5Z" fill="#8d4600" stroke="#8d4600" stroke-width="1"/><path d="M562.9 617.8L562.9 617.8L562.1 618.0L562.9 620.4Z" fill="#835500" stroke="#835500" stroke-width="1"/><path d="M562.9 620.4L562.1 618.0L561.2 618.3L562.9 623.1Z" fill="#835200" stroke="#835200" stroke-width="1"/><path d="M562.9 623.1L561.2 618.3L560.3 618.5L562.9 625.8Z" fill="#834e00" stroke="#834e00" stroke-width="1"/><path d="M562.9 625.8L560.3 618.5L559.4 618.8L562.9 628.5Z" fill="#834b00" stroke="#834b00" stroke-width="1"/><path d="M562.9 628.5L559.4 618.8L558.6 619.0L562.9 631.2Z" fill="#834700" stroke="#834700" stroke-width="1"/><path d="M562.9 631.2L558.6 619.0L557.7 619.3L562.9 633.9Z" fill="#834400" stroke="#834400" stroke-width="1"/><path d="M562.9 633.9L557.7 619.3L556.8 619.5L562.9 636.6Z" fill="#834100" stroke="#834100" stroke-width="1"/><path d="M562.9 617.8L556.8 609.1L556.8 619.5L562.9 636.6Z" fill="none" stroke="#000" stroke-width="0.7" stroke-opacity="0.85"/><path d="M562.9 617.8L556.8 619.5" stroke="#000" stroke-width="0.95" stroke-dasharray="2.2 1.3" stroke-opacity="0.9"/><path d="M691.0 560.4L692.6 564.7L696.9 570.2L695.7 567.0Z" fill="#77ff00" stroke="#77ff00" stroke-width="1"/><path d="M695.7 567.0L696.9 570.2L701.1 575.7L700.3 573.6Z" fill="#9eff00" stroke="#9eff00" stroke-width="1"/><path d="M700.3 573.6L701.1 575.7L705.4 581.2L705.0 580.2Z" fill="#c5ff00" stroke="#c5ff00" stroke-width="1"/><path d="M705.0 580.2L705.4 581.2L709.6 586.8L709.6 586.8Z" fill="#dcf500" stroke="#dcf500" stroke-width="1"/><path d="M691.0 560.4L691.0 560.4L695.7 567.0L695.1 565.5Z" fill="#77ff00" stroke="#77ff00" stroke-width="1"/><path d="M695.1 565.5L695.7 567.0L700.3 573.6L699.2 570.5Z" fill="#9eff00" stroke="#9eff00" stroke-width="1"/><path d="M699.2 570.5L700.3 573.6L705.0 580.2L703.3 575.6Z" fill="#c5ff00" stroke="#c5ff00" stroke-width="1"/><path d="M703.3 575.6L705.0 580.2L709.6 586.8L707.5 580.7Z" fill="#dcf500" stroke="#dcf500" stroke-width="1"/><path d="M691.0 560.4L692.6 564.7L709.6 586.8L707.5 580.7Z" fill="none" stroke="#000" stroke-width="0.7" stroke-opacity="0.85"/><path d="M691.0 560.4L709.6 586.8" stroke="#000" stroke-width="0.95" stroke-dasharray="2.2 1.3" stroke-opacity="0.9"/><path d="M600.6 564.7L602.2 560.4L598.1 565.5L596.9 568.7Z" fill="#77ff00" stroke="#77ff00" stroke-width="1"/><path d="M596.9 568.7L598.1 565.5L594.0 570.5L593.2 572.7Z" fill="#9eff00" stroke="#9eff00" stroke-width="1"/><path d="M593.2 572.7L594.0 570.5L589.9 575.6L589.5 576.7Z" fill="#c5ff00" stroke="#c5ff00" stroke-width="1"/><path d="M589.5 576.7L589.9 575.6L585.7 580.7L585.7 580.7Z" fill="#dcf500" stroke="#dcf500" stroke-width="1"/><path d="M600.6 564.7L600.6 564.7L596.9 568.7L596.4 570.2Z" fill="#77ff00" stroke="#77ff00" stroke-width="1"/><path d="M596.4 570.2L596.9 568.7L593.2 572.7L592.1 575.7Z" fill="#9eff00" stroke="#9eff00" stroke-width="1"/><path d="M592.1 575.7L593.2 572.7L589.5 576.7L587.9 581.2Z" fill="#c5ff00" stroke="#c5ff00" stroke-width="1"/><path d="M587.9 581.2L589.5 576.7L585.7 580.7L583.6 586.8Z" fill="#dcf500" stroke="#dcf500" stroke-width="1"/><path d="M600.6 564.7L602.2 560.4L585.7 580.7L583.6 586.8Z" fill="none" stroke="#000" stroke-width="0.7" stroke-opacity="0.85"/><path d="M600.6 564.7L585.7 580.7" stroke="#000" stroke-width="0.95" stroke-dasharray="2.2 1.3" stroke-opacity="0.9"/><path d="M677.1 536.9L680.6 539.9L683.2 545.0L680.6 542.8Z" fill="#00dc1c" stroke="#00dc1c" stroke-width="1"/><path d="M680.6 542.8L683.2 545.0L685.8 550.1L684.1 548.7Z" fill="#04d900" stroke="#04d900" stroke-width="1"/><path d="M684.1 548.7L685.8 550.1L688.4 555.3L687.5 554.5Z" fill="#26dd00" stroke="#26dd00" stroke-width="1"/><path d="M687.5 554.5L688.4 555.3L691.0 560.4L691.0 560.4Z" fill="#47e000" stroke="#47e000" stroke-width="1"/><path d="M677.1 536.9L677.1 536.9L680.6 542.8L679.4 541.8Z" fill="#00dc1c" stroke="#00dc1c" stroke-width="1"/><path d="M679.4 541.8L680.6 542.8L684.1 548.7L681.8 546.7Z" fill="#04d900" stroke="#04d900" stroke-width="1"/><path d="M681.8 546.7L684.1 548.7L687.5 554.5L684.1 551.5Z" fill="#26dd00" stroke="#26dd00" stroke-width="1"/><path d="M684.1 551.5L687.5 554.5L691.0 560.4L686.4 556.4Z" fill="#47e000" stroke="#47e000" stroke-width="1"/><path d="M677.1 536.9L680.6 539.9L691.0 560.4L686.4 556.4Z" fill="none" stroke="#000" stroke-width="0.7" stroke-opacity="0.85"/><path d="M677.1 536.9L691.0 560.4" stroke="#000" stroke-width="0.95" stroke-dasharray="2.2 1.3" stroke-opacity="0.9"/><path d="M612.6 539.9L616.1 536.9L613.8 541.8L611.1 544.0Z" fill="#00dc1c" stroke="#00dc1c" stroke-width="1"/><path d="M611.1 544.0L613.8 541.8L611.4 546.7L609.7 548.1Z" fill="#04d900" stroke="#04d900" stroke-width="1"/><path d="M609.7 548.1L611.4 546.7L609.1 551.5L608.2 552.3Z" fill="#26dd00" stroke="#26dd00" stroke-width="1"/><path d="M608.2 552.3L609.1 551.5L606.8 556.4L606.8 556.4Z" fill="#47e000" stroke="#47e000" stroke-width="1"/><path d="M612.6 539.9L612.6 539.9L611.1 544.0L610.0 545.0Z" fill="#00dc1c" stroke="#00dc1c" stroke-width="1"/><path d="M610.0 545.0L611.1 544.0L609.7 548.1L607.4 550.1Z" fill="#04d900" stroke="#04d900" stroke-width="1"/><path d="M607.4 550.1L609.7 548.1L608.2 552.3L604.8 555.3Z" fill="#26dd00" stroke="#26dd00" stroke-width="1"/><path d="M604.8 555.3L608.2 552.3L606.8 556.4L602.2 560.4Z" fill="#47e000" stroke="#47e000" stroke-width="1"/><path d="M612.6 539.9L616.1 536.9L606.8 556.4L602.2 560.4Z" fill="none" stroke="#000" stroke-width="0.7" stroke-opacity="0.85"/><path d="M612.6 539.9L606.8 556.4" stroke="#000" stroke-width="0.95" stroke-dasharray="2.2 1.3" stroke-opacity="0.9"/><path d="M709.6 586.8L707.5 592.8L712.7 599.0L714.3 594.5Z" fill="#dcd800" stroke="#dcd800" stroke-width="1"/><path d="M714.3 594.5L712.7 599.0L717.9 605.2L719.0 602.2Z" fill="#ebcc00" stroke="#ebcc00" stroke-width="1"/><path d="M719.0 602.2L717.9 605.2L723.1 611.4L723.6 609.9Z" fill="#ebb900" stroke="#ebb900" stroke-width="1"/><path d="M723.6 609.9L723.1 611.4L728.3 617.6L728.3 617.6Z" fill="#eba600" stroke="#eba600" stroke-width="1"/><path d="M709.6 586.8L709.6 586.8L714.3 594.5L716.3 592.4Z" fill="#cbc600" stroke="#cbc600" stroke-width="1"/><path d="M716.3 592.4L714.3 594.5L719.0 602.2L723.0 597.9Z" fill="#d8bc00" stroke="#d8bc00" stroke-width="1"/><path d="M723.0 597.9L719.0 602.2L723.6 609.9L729.7 603.5Z" fill="#d8aa00" stroke="#d8aa00" stroke-width="1"/><path d="M729.7 603.5L723.6 609.9L728.3 617.6L736.4 609.1Z" fill="#d89900" stroke="#d89900" stroke-width="1"/><path d="M709.6 586.8L707.5 592.8L728.3 617.6L736.4 609.1Z" fill="none" stroke="#000" stroke-width="0.7" stroke-opacity="0.85"/><path d="M709.6 586.8L728.3 617.6" stroke="#000" stroke-width="0.95" stroke-dasharray="2.2 1.3" stroke-opacity="0.9"/><path d="M585.7 592.8L583.6 586.8L576.9 592.4L578.5 596.9Z" fill="#a19e00" stroke="#a19e00" stroke-width="1"/><path d="M578.5 596.9L576.9 592.4L570.2 597.9L571.3 601.0Z" fill="#ac9500" stroke="#ac9500" stroke-width="1"/><path d="M571.3 601.0L570.2 597.9L563.5 603.5L564.1 605.0Z" fill="#ac8700" stroke="#ac8700" stroke-width="1"/><path d="M564.1 605.0L563.5 603.5L556.8 609.1L556.8 609.1Z" fill="#ac7900" stroke="#ac7900" stroke-width="1"/><path d="M585.7 592.8L585.7 592.8L578.5 596.9L580.0 599.1Z" fill="#9e9b00" stroke="#9e9b00" stroke-width="1"/><path d="M580.0 599.1L578.5 596.9L571.3 601.0L574.3 605.3Z" fill="#a89200" stroke="#a89200" stroke-width="1"/><path d="M574.3 605.3L571.3 601.0L564.1 605.0L568.6 611.5Z" fill="#a88400" stroke="#a88400" stroke-width="1"/><path d="M568.6 611.5L564.1 605.0L556.8 609.1L562.9 617.8Z" fill="#a87700" stroke="#a87700" stroke-width="1"/><path d="M585.7 592.8L583.6 586.8L556.8 609.1L562.9 617.8Z" fill="none" stroke="#000" stroke-width="0.7" stroke-opacity="0.85"/><path d="M585.7 592.8L556.8 609.1" stroke="#000" stroke-width="0.95" stroke-dasharray="2.2 1.3" stroke-opacity="0.9"/><path d="M573.3 654.2L562.9 636.6L554.0 651.5L561.8 664.6Z" fill="#cf3c00" stroke="#cf3c00" stroke-width="1"/><path d="M561.8 664.6L554.0 651.5L545.0 666.4L550.2 675.1Z" fill="#cf1e00" stroke="#cf1e00" stroke-width="1"/><path d="M550.2 675.1L545.0 666.4L536.1 681.2L538.7 685.6Z" fill="#c90911" stroke="#c90911" stroke-width="1"/><path d="M538.7 685.6L536.1 681.2L527.1 696.1L527.1 696.1Z" fill="#bd0038" stroke="#bd0038" stroke-width="1"/><path d="M573.3 654.2L573.3 654.2L561.8 664.6L564.4 668.4Z" fill="#d73e00" stroke="#d73e00" stroke-width="1"/><path d="M564.4 668.4L561.8 664.6L550.2 675.1L555.6 682.6Z" fill="#d71f00" stroke="#d71f00" stroke-width="1"/><path d="M555.6 682.6L550.2 675.1L538.7 685.6L546.7 696.9Z" fill="#d00912" stroke="#d00912" stroke-width="1"/><path d="M546.7 696.9L538.7 685.6L527.1 696.1L537.8 711.1Z" fill="#c40039" stroke="#c40039" stroke-width="1"/><path d="M573.3 654.2L562.9 636.6L527.1 696.1L537.8 711.1Z" fill="none" stroke="#000" stroke-width="0.7" stroke-opacity="0.85"/><path d="M573.3 654.2L527.1 696.1" stroke="#000" stroke-width="0.75" stroke-dasharray="2.2 1.3" stroke-opacity="0.9"/><path d="M728.3 640.5L721.6 650.4L731.2 665.2L736.3 657.8Z" fill="#bd3600" stroke="#bd3600" stroke-width="1"/><path d="M736.3 657.8L731.2 665.2L740.8 680.0L744.2 675.1Z" fill="#bd1b00" stroke="#bd1b00" stroke-width="1"/><path d="M744.2 675.1L740.8 680.0L750.5 694.9L752.1 692.4Z" fill="#b70810" stroke="#b70810" stroke-width="1"/><path d="M752.1 692.4L750.5 694.9L760.1 709.7L760.1 709.7Z" fill="#ad0033" stroke="#ad0033" stroke-width="1"/><path d="M728.3 640.5L728.3 640.5L736.3 657.8L736.5 654.9Z" fill="#e24100" stroke="#e24100" stroke-width="1"/><path d="M736.5 654.9L736.3 657.8L744.2 675.1L744.6 669.3Z" fill="#e22000" stroke="#e22000" stroke-width="1"/><path d="M744.6 669.3L744.2 675.1L752.1 692.4L752.7 683.7Z" fill="#da0a13" stroke="#da0a13" stroke-width="1"/><path d="M752.7 683.7L752.1 692.4L760.1 709.7L760.9 698.1Z" fill="#ce003d" stroke="#ce003d" stroke-width="1"/><path d="M728.3 640.5L721.6 650.4L760.1 709.7L760.9 698.1Z" fill="none" stroke="#000" stroke-width="0.7" stroke-opacity="0.85"/><path d="M728.3 640.5L760.1 709.7" stroke="#000" stroke-width="0.75" stroke-dasharray="2.2 1.3" stroke-opacity="0.9"/><path d="M680.6 539.9L681.8 543.0L684.5 548.5L683.6 546.1Z" fill="#00e31d" stroke="#00e31d" stroke-width="1"/><path d="M683.6 546.1L684.5 548.5L687.2 553.9L686.6 552.3Z" fill="#04e000" stroke="#04e000" stroke-width="1"/><path d="M686.6 552.3L687.2 553.9L689.9 559.3L689.6 558.5Z" fill="#27e400" stroke="#27e400" stroke-width="1"/><path d="M689.6 558.5L689.9 559.3L692.6 564.7L692.6 564.7Z" fill="#4ae700" stroke="#4ae700" stroke-width="1"/><path d="M680.6 539.9L680.6 539.9L683.6 546.1L683.2 545.0Z" fill="#00e31d" stroke="#00e31d" stroke-width="1"/><path d="M683.2 545.0L683.6 546.1L686.6 552.3L685.8 550.1Z" fill="#04e000" stroke="#04e000" stroke-width="1"/><path d="M685.8 550.1L686.6 552.3L689.6 558.5L688.4 555.3Z" fill="#27e400" stroke="#27e400" stroke-width="1"/><path d="M688.4 555.3L689.6 558.5L692.6 564.7L691.0 560.4Z" fill="#4ae700" stroke="#4ae700" stroke-width="1"/><path d="M680.6 539.9L681.8 543.0L692.6 564.7L691.0 560.4Z" fill="none" stroke="#000" stroke-width="0.7" stroke-opacity="0.85"/><path d="M680.6 539.9L692.6 564.7" stroke="#000" stroke-width="0.95" stroke-dasharray="2.2 1.3" stroke-opacity="0.9"/><path d="M611.4 543.0L612.6 539.9L610.0 545.0L609.1 547.4Z" fill="#00e31d" stroke="#00e31d" stroke-width="1"/><path d="M609.1 547.4L610.0 545.0L607.4 550.1L606.8 551.7Z" fill="#04e000" stroke="#04e000" stroke-width="1"/><path d="M606.8 551.7L607.4 550.1L604.8 555.3L604.5 556.0Z" fill="#27e400" stroke="#27e400" stroke-width="1"/><path d="M604.5 556.0L604.8 555.3L602.2 560.4L602.2 560.4Z" fill="#4ae700" stroke="#4ae700" stroke-width="1"/><path d="M611.4 543.0L611.4 543.0L609.1 547.4L608.7 548.5Z" fill="#00e31d" stroke="#00e31d" stroke-width="1"/><path d="M608.7 548.5L609.1 547.4L606.8 551.7L606.0 553.9Z" fill="#04e000" stroke="#04e000" stroke-width="1"/><path d="M606.0 553.9L606.8 551.7L604.5 556.0L603.3 559.3Z" fill="#27e400" stroke="#27e400" stroke-width="1"/><path d="M603.3 559.3L604.5 556.0L602.2 560.4L600.6 564.7Z" fill="#4ae700" stroke="#4ae700" stroke-width="1"/><path d="M611.4 543.0L612.6 539.9L602.2 560.4L600.6 564.7Z" fill="none" stroke="#000" stroke-width="0.7" stroke-opacity="0.85"/><path d="M611.4 543.0L602.2 560.4" stroke="#000" stroke-width="0.95" stroke-dasharray="2.2 1.3" stroke-opacity="0.9"/><path d="M692.6 564.7L691.0 569.0L695.1 574.9L696.3 571.7Z" fill="#77ff00" stroke="#77ff00" stroke-width="1"/><path d="M696.3 571.7L695.1 574.9L699.2 580.9L700.0 578.8Z" fill="#9eff00" stroke="#9eff00" stroke-width="1"/><path d="M700.0 578.8L699.2 580.9L703.3 586.9L703.7 585.8Z" fill="#c5ff00" stroke="#c5ff00" stroke-width="1"/><path d="M703.7 585.8L703.3 586.9L707.5 592.8L707.5 592.8Z" fill="#dcf500" stroke="#dcf500" stroke-width="1"/><path d="M692.6 564.7L692.6 564.7L696.3 571.7L696.9 570.2Z" fill="#77ff00" stroke="#77ff00" stroke-width="1"/><path d="M696.9 570.2L696.3 571.7L700.0 578.8L701.1 575.7Z" fill="#9eff00" stroke="#9eff00" stroke-width="1"/><path d="M701.1 575.7L700.0 578.8L703.7 585.8L705.4 581.2Z" fill="#c5ff00" stroke="#c5ff00" stroke-width="1"/><path d="M705.4 581.2L703.7 585.8L707.5 592.8L709.6 586.8Z" fill="#dcf500" stroke="#dcf500" stroke-width="1"/><path d="M692.6 564.7L691.0 569.0L707.5 592.8L709.6 586.8Z" fill="none" stroke="#000" stroke-width="0.7" stroke-opacity="0.85"/><path d="M692.6 564.7L707.5 592.8" stroke="#000" stroke-width="0.95" stroke-dasharray="2.2 1.3" stroke-opacity="0.9"/><path d="M602.2 569.0L600.6 564.7L596.4 570.2L597.5 573.4Z" fill="#77ff00" stroke="#77ff00" stroke-width="1"/><path d="M597.5 573.4L596.4 570.2L592.1 575.7L592.9 577.9Z" fill="#9eff00" stroke="#9eff00" stroke-width="1"/><path d="M592.9 577.9L592.1 575.7L587.9 581.2L588.2 582.3Z" fill="#c5ff00" stroke="#c5ff00" stroke-width="1"/><path d="M588.2 582.3L587.9 581.2L583.6 586.8L583.6 586.8Z" fill="#dcf500" stroke="#dcf500" stroke-width="1"/><path d="M602.2 569.0L602.2 569.0L597.5 573.4L598.1 574.9Z" fill="#77ff00" stroke="#77ff00" stroke-width="1"/><path d="M598.1 574.9L597.5 573.4L592.9 577.9L594.0 580.9Z" fill="#9eff00" stroke="#9eff00" stroke-width="1"/><path d="M594.0 580.9L592.9 577.9L588.2 582.3L589.9 586.9Z" fill="#c5ff00" stroke="#c5ff00" stroke-width="1"/><path d="M589.9 586.9L588.2 582.3L583.6 586.8L585.7 592.8Z" fill="#dcf500" stroke="#dcf500" stroke-width="1"/><path d="M602.2 569.0L600.6 564.7L583.6 586.8L585.7 592.8Z" fill="none" stroke="#000" stroke-width="0.7" stroke-opacity="0.85"/><path d="M602.2 569.0L583.6 586.8" stroke="#000" stroke-width="0.95" stroke-dasharray="2.2 1.3" stroke-opacity="0.9"/><path d="M537.8 711.1L527.1 696.1L508.1 702.5L516.7 714.5Z" fill="#c90064" stroke="#c90064" stroke-width="1"/><path d="M516.7 714.5L508.1 702.5L489.1 708.9L495.6 717.9Z" fill="#c50076" stroke="#c50076" stroke-width="1"/><path d="M495.6 717.9L489.1 708.9L470.1 715.3L474.4 721.3Z" fill="#c00088" stroke="#c00088" stroke-width="1"/><path d="M474.4 721.3L470.1 715.3L451.2 721.7L453.3 724.7Z" fill="#bc009a" stroke="#bc009a" stroke-width="1"/><path d="M453.3 724.7L451.2 721.7L432.2 728.1L432.2 728.1Z" fill="#b700ac" stroke="#b700ac" stroke-width="1"/><path d="M537.8 711.1L537.8 711.1L516.7 714.5L521.1 719.2Z" fill="#c90064" stroke="#c90064" stroke-width="1"/><path d="M521.1 719.2L516.7 714.5L495.6 717.9L504.4 727.2Z" fill="#c50076" stroke="#c50076" stroke-width="1"/><path d="M504.4 727.2L495.6 717.9L474.4 721.3L487.7 735.3Z" fill="#c00088" stroke="#c00088" stroke-width="1"/><path d="M487.7 735.3L474.4 721.3L453.3 724.7L471.0 743.3Z" fill="#bc009a" stroke="#bc009a" stroke-width="1"/><path d="M471.0 743.3L453.3 724.7L432.2 728.1L454.3 751.4Z" fill="#b700ac" stroke="#b700ac" stroke-width="1"/><path d="M537.8 711.1L527.1 696.1L432.2 728.1L454.3 751.4Z" fill="none" stroke="#000" stroke-width="0.7" stroke-opacity="0.85"/><path d="M537.8 711.1L432.2 728.1" stroke="#000" stroke-width="0.75" stroke-dasharray="2.2 1.3" stroke-opacity="0.9"/><path d="M760.9 698.1L760.1 709.7L775.8 718.0L776.5 708.7Z" fill="#c30061" stroke="#c30061" stroke-width="1"/><path d="M776.5 708.7L775.8 718.0L791.6 726.4L792.1 719.4Z" fill="#bf0072" stroke="#bf0072" stroke-width="1"/><path d="M792.1 719.4L791.6 726.4L807.3 734.7L807.7 730.1Z" fill="#ba0084" stroke="#ba0084" stroke-width="1"/><path d="M807.7 730.1L807.3 734.7L823.1 743.0L823.3 740.7Z" fill="#b60095" stroke="#b60095" stroke-width="1"/><path d="M823.3 740.7L823.1 743.0L838.9 751.4L838.9 751.4Z" fill="#b100a7" stroke="#b100a7" stroke-width="1"/><path d="M760.9 698.1L760.9 698.1L776.5 708.7L780.9 704.1Z" fill="#c70063" stroke="#c70063" stroke-width="1"/><path d="M780.9 704.1L776.5 708.7L792.1 719.4L800.9 710.1Z" fill="#c20074" stroke="#c20074" stroke-width="1"/><path d="M800.9 710.1L792.1 719.4L807.7 730.1L821.0 716.1Z" fill="#be0086" stroke="#be0086" stroke-width="1"/><path d="M821.0 716.1L807.7 730.1L823.3 740.7L841.0 722.1Z" fill="#b90098" stroke="#b90098" stroke-width="1"/><path d="M841.0 722.1L823.3 740.7L838.9 751.4L861.0 728.1Z" fill="#b500aa" stroke="#b500aa" stroke-width="1"/><path d="M760.9 698.1L760.1 709.7L838.9 751.4L861.0 728.1Z" fill="none" stroke="#000" stroke-width="0.7" stroke-opacity="0.85"/><path d="M760.9 698.1L838.9 751.4" stroke="#000" stroke-width="0.75" stroke-dasharray="2.2 1.3" stroke-opacity="0.9"/><path d="M573.3 625.4L562.9 617.8L562.9 620.4L571.8 627.0Z" fill="#644100" stroke="#644100" stroke-width="1"/><path d="M571.8 627.0L562.9 620.4L562.9 623.1L570.4 628.6Z" fill="#643c00" stroke="#643c00" stroke-width="1"/><path d="M570.4 628.6L562.9 623.1L562.9 625.8L568.9 630.2Z" fill="#643800" stroke="#643800" stroke-width="1"/><path d="M568.9 630.2L562.9 625.8L562.9 628.5L567.4 631.8Z" fill="#643400" stroke="#643400" stroke-width="1"/><path d="M567.4 631.8L562.9 628.5L562.9 631.2L565.9 633.4Z" fill="#643000" stroke="#643000" stroke-width="1"/><path d="M565.9 633.4L562.9 631.2L562.9 633.9L564.4 635.0Z" fill="#642b00" stroke="#642b00" stroke-width="1"/><path d="M564.4 635.0L562.9 633.9L562.9 636.6L562.9 636.6Z" fill="#642700" stroke="#642700" stroke-width="1"/><path d="M573.3 625.4L573.3 625.4L571.8 627.0L573.3 629.5Z" fill="#875700" stroke="#875700" stroke-width="1"/><path d="M573.3 629.5L571.8 627.0L570.4 628.6L573.3 633.6Z" fill="#875100" stroke="#875100" stroke-width="1"/><path d="M573.3 633.6L570.4 628.6L568.9 630.2L573.3 637.7Z" fill="#874b00" stroke="#874b00" stroke-width="1"/><path d="M573.3 637.7L568.9 630.2L567.4 631.8L573.3 641.8Z" fill="#874600" stroke="#874600" stroke-width="1"/><path d="M573.3 641.8L567.4 631.8L565.9 633.4L573.3 645.9Z" fill="#874000" stroke="#874000" stroke-width="1"/><path d="M573.3 645.9L565.9 633.4L564.4 635.0L573.3 650.1Z" fill="#873a00" stroke="#873a00" stroke-width="1"/><path d="M573.3 650.1L564.4 635.0L562.9 636.6L573.3 654.2Z" fill="#873400" stroke="#873400" stroke-width="1"/><path d="M573.3 625.4L562.9 617.8L562.9 636.6L573.3 654.2Z" fill="none" stroke="#000" stroke-width="0.7" stroke-opacity="0.85"/><path d="M573.3 625.4L562.9 636.6" stroke="#000" stroke-width="0.95" stroke-dasharray="2.2 1.3" stroke-opacity="0.9"/><path d="M728.3 617.6L721.6 625.8L721.6 629.3L727.4 622.3Z" fill="#784d00" stroke="#784d00" stroke-width="1"/><path d="M727.4 622.3L721.6 629.3L721.6 632.8L726.4 626.9Z" fill="#784800" stroke="#784800" stroke-width="1"/><path d="M726.4 626.9L721.6 632.8L721.6 636.4L725.5 631.6Z" fill="#784300" stroke="#784300" stroke-width="1"/><path d="M725.5 631.6L721.6 636.4L721.6 639.9L724.5 636.3Z" fill="#783e00" stroke="#783e00" stroke-width="1"/><path d="M724.5 636.3L721.6 639.9L721.6 643.4L723.5 641.0Z" fill="#783900" stroke="#783900" stroke-width="1"/><path d="M723.5 641.0L721.6 643.4L721.6 646.9L722.6 645.7Z" fill="#783400" stroke="#783400" stroke-width="1"/><path d="M722.6 645.7L721.6 646.9L721.6 650.4L721.6 650.4Z" fill="#782e00" stroke="#782e00" stroke-width="1"/><path d="M728.3 617.6L728.3 617.6L727.4 622.3L728.3 620.8Z" fill="#925e00" stroke="#925e00" stroke-width="1"/><path d="M728.3 620.8L727.4 622.3L726.4 626.9L728.3 624.1Z" fill="#925800" stroke="#925800" stroke-width="1"/><path d="M728.3 624.1L726.4 626.9L725.5 631.6L728.3 627.4Z" fill="#925200" stroke="#925200" stroke-width="1"/><path d="M728.3 627.4L725.5 631.6L724.5 636.3L728.3 630.6Z" fill="#924b00" stroke="#924b00" stroke-width="1"/><path d="M728.3 630.6L724.5 636.3L723.5 641.0L728.3 633.9Z" fill="#924500" stroke="#924500" stroke-width="1"/><path d="M728.3 633.9L723.5 641.0L722.6 645.7L728.3 637.2Z" fill="#923f00" stroke="#923f00" stroke-width="1"/><path d="M728.3 637.2L722.6 645.7L721.6 650.4L728.3 640.5Z" fill="#923900" stroke="#923900" stroke-width="1"/><path d="M728.3 617.6L721.6 625.8L721.6 650.4L728.3 640.5Z" fill="none" stroke="#000" stroke-width="0.7" stroke-opacity="0.85"/><path d="M728.3 617.6L721.6 650.4" stroke="#000" stroke-width="0.95" stroke-dasharray="2.2 1.3" stroke-opacity="0.9"/><path d="M681.8 543.0L680.6 546.2L683.2 551.9L684.1 549.5Z" fill="#00e31d" stroke="#00e31d" stroke-width="1"/><path d="M684.1 549.5L683.2 551.9L685.8 557.6L686.4 556.0Z" fill="#04e000" stroke="#04e000" stroke-width="1"/><path d="M686.4 556.0L685.8 557.6L688.4 563.3L688.7 562.5Z" fill="#27e400" stroke="#27e400" stroke-width="1"/><path d="M688.7 562.5L688.4 563.3L691.0 569.0L691.0 569.0Z" fill="#4ae700" stroke="#4ae700" stroke-width="1"/><path d="M681.8 543.0L681.8 543.0L684.1 549.5L684.5 548.5Z" fill="#00e31d" stroke="#00e31d" stroke-width="1"/><path d="M684.5 548.5L684.1 549.5L686.4 556.0L687.2 553.9Z" fill="#04e000" stroke="#04e000" stroke-width="1"/><path d="M687.2 553.9L686.4 556.0L688.7 562.5L689.9 559.3Z" fill="#27e400" stroke="#27e400" stroke-width="1"/><path d="M689.9 559.3L688.7 562.5L691.0 569.0L692.6 564.7Z" fill="#4ae700" stroke="#4ae700" stroke-width="1"/><path d="M681.8 543.0L680.6 546.2L691.0 569.0L692.6 564.7Z" fill="none" stroke="#000" stroke-width="0.7" stroke-opacity="0.85"/><path d="M681.8 543.0L691.0 569.0" stroke="#000" stroke-width="0.95" stroke-dasharray="2.2 1.3" stroke-opacity="0.9"/><path d="M612.6 546.2L611.4 543.0L608.7 548.5L609.6 550.8Z" fill="#00e31d" stroke="#00e31d" stroke-width="1"/><path d="M609.6 550.8L608.7 548.5L606.0 553.9L606.6 555.4Z" fill="#04e000" stroke="#04e000" stroke-width="1"/><path d="M606.6 555.4L606.0 553.9L603.3 559.3L603.6 560.1Z" fill="#27e400" stroke="#27e400" stroke-width="1"/><path d="M603.6 560.1L603.3 559.3L600.6 564.7L600.6 564.7Z" fill="#4ae700" stroke="#4ae700" stroke-width="1"/><path d="M612.6 546.2L612.6 546.2L609.6 550.8L610.0 551.9Z" fill="#00e31d" stroke="#00e31d" stroke-width="1"/><path d="M610.0 551.9L609.6 550.8L606.6 555.4L607.4 557.6Z" fill="#04e000" stroke="#04e000" stroke-width="1"/><path d="M607.4 557.6L606.6 555.4L603.6 560.1L604.8 563.3Z" fill="#27e400" stroke="#27e400" stroke-width="1"/><path d="M604.8 563.3L603.6 560.1L600.6 564.7L602.2 569.0Z" fill="#4ae700" stroke="#4ae700" stroke-width="1"/><path d="M612.6 546.2L611.4 543.0L600.6 564.7L602.2 569.0Z" fill="none" stroke="#000" stroke-width="0.7" stroke-opacity="0.85"/><path d="M612.6 546.2L600.6 564.7" stroke="#000" stroke-width="0.95" stroke-dasharray="2.2 1.3" stroke-opacity="0.9"/><path d="M592.0 598.5L585.7 592.8L580.0 599.1L584.8 603.3Z" fill="#989500" stroke="#989500" stroke-width="1"/><path d="M584.8 603.3L580.0 599.1L574.3 605.3L577.5 608.1Z" fill="#a28d00" stroke="#a28d00" stroke-width="1"/><path d="M577.5 608.1L574.3 605.3L568.6 611.5L570.2 612.9Z" fill="#a28000" stroke="#a28000" stroke-width="1"/><path d="M570.2 612.9L568.6 611.5L562.9 617.8L562.9 617.8Z" fill="#a27300" stroke="#a27300" stroke-width="1"/><path d="M592.0 598.5L592.0 598.5L584.8 603.3L587.4 605.2Z" fill="#bbb700" stroke="#bbb700" stroke-width="1"/><path d="M587.4 605.2L584.8 603.3L577.5 608.1L582.7 612.0Z" fill="#c7ad00" stroke="#c7ad00" stroke-width="1"/><path d="M582.7 612.0L577.5 608.1L570.2 612.9L578.0 618.7Z" fill="#c79d00" stroke="#c79d00" stroke-width="1"/><path d="M578.0 618.7L570.2 612.9L562.9 617.8L573.3 625.4Z" fill="#c78c00" stroke="#c78c00" stroke-width="1"/><path d="M592.0 598.5L585.7 592.8L562.9 617.8L573.3 625.4Z" fill="none" stroke="#000" stroke-width="0.7" stroke-opacity="0.85"/><path d="M592.0 598.5L562.9 617.8" stroke="#000" stroke-width="0.95" stroke-dasharray="2.2 1.3" stroke-opacity="0.9"/><path d="M707.5 592.8L701.2 598.5L706.3 605.3L711.0 601.1Z" fill="#b4b000" stroke="#b4b000" stroke-width="1"/><path d="M711.0 601.1L706.3 605.3L711.4 612.2L714.5 609.3Z" fill="#c0a600" stroke="#c0a600" stroke-width="1"/><path d="M714.5 609.3L711.4 612.2L716.5 619.0L718.1 617.6Z" fill="#c09700" stroke="#c09700" stroke-width="1"/><path d="M718.1 617.6L716.5 619.0L721.6 625.8L721.6 625.8Z" fill="#c08700" stroke="#c08700" stroke-width="1"/><path d="M707.5 592.8L707.5 592.8L711.0 601.1L712.7 599.0Z" fill="#c9c500" stroke="#c9c500" stroke-width="1"/><path d="M712.7 599.0L711.0 601.1L714.5 609.3L717.9 605.2Z" fill="#d7ba00" stroke="#d7ba00" stroke-width="1"/><path d="M717.9 605.2L714.5 609.3L718.1 617.6L723.1 611.4Z" fill="#d7a900" stroke="#d7a900" stroke-width="1"/><path d="M723.1 611.4L718.1 617.6L721.6 625.8L728.3 617.6Z" fill="#d79800" stroke="#d79800" stroke-width="1"/><path d="M707.5 592.8L701.2 598.5L721.6 625.8L728.3 617.6Z" fill="none" stroke="#000" stroke-width="0.7" stroke-opacity="0.85"/><path d="M707.5 592.8L721.6 625.8" stroke="#000" stroke-width="0.95" stroke-dasharray="2.2 1.3" stroke-opacity="0.9"/><path d="M691.0 569.0L686.4 573.0L690.1 579.3L693.6 576.4Z" fill="#76fb00" stroke="#76fb00" stroke-width="1"/><path d="M693.6 576.4L690.1 579.3L693.8 585.7L696.1 583.7Z" fill="#9cfb00" stroke="#9cfb00" stroke-width="1"/><path d="M696.1 583.7L693.8 585.7L697.5 592.1L698.6 591.1Z" fill="#c3fb00" stroke="#c3fb00" stroke-width="1"/><path d="M698.6 591.1L697.5 592.1L701.2 598.5L701.2 598.5Z" fill="#d9f200" stroke="#d9f200" stroke-width="1"/><path d="M691.0 569.0L691.0 569.0L693.6 576.4L695.1 574.9Z" fill="#76fb00" stroke="#76fb00" stroke-width="1"/><path d="M695.1 574.9L693.6 576.4L696.1 583.7L699.2 580.9Z" fill="#9cfb00" stroke="#9cfb00" stroke-width="1"/><path d="M699.2 580.9L696.1 583.7L698.6 591.1L703.3 586.9Z" fill="#c3fb00" stroke="#c3fb00" stroke-width="1"/><path d="M703.3 586.9L698.6 591.1L701.2 598.5L707.5 592.8Z" fill="#d9f200" stroke="#d9f200" stroke-width="1"/><path d="M691.0 569.0L686.4 573.0L701.2 598.5L707.5 592.8Z" fill="none" stroke="#000" stroke-width="0.7" stroke-opacity="0.85"/><path d="M691.0 569.0L701.2 598.5" stroke="#000" stroke-width="0.95" stroke-dasharray="2.2 1.3" stroke-opacity="0.9"/><path d="M606.8 573.0L602.2 569.0L598.1 574.9L601.5 577.9Z" fill="#76fb00" stroke="#76fb00" stroke-width="1"/><path d="M601.5 577.9L598.1 574.9L594.0 580.9L596.3 582.9Z" fill="#9cfb00" stroke="#9cfb00" stroke-width="1"/><path d="M596.3 582.9L594.0 580.9L589.9 586.9L591.0 587.9Z" fill="#c3fb00" stroke="#c3fb00" stroke-width="1"/><path d="M591.0 587.9L589.9 586.9L585.7 592.8L585.7 592.8Z" fill="#d9f200" stroke="#d9f200" stroke-width="1"/><path d="M606.8 573.0L606.8 573.0L601.5 577.9L603.1 579.3Z" fill="#76fb00" stroke="#76fb00" stroke-width="1"/><path d="M603.1 579.3L601.5 577.9L596.3 582.9L599.4 585.7Z" fill="#9cfb00" stroke="#9cfb00" stroke-width="1"/><path d="M599.4 585.7L596.3 582.9L591.0 587.9L595.7 592.1Z" fill="#c3fb00" stroke="#c3fb00" stroke-width="1"/><path d="M595.7 592.1L591.0 587.9L585.7 592.8L592.0 598.5Z" fill="#d9f200" stroke="#d9f200" stroke-width="1"/><path d="M606.8 573.0L602.2 569.0L585.7 592.8L592.0 598.5Z" fill="none" stroke="#000" stroke-width="0.7" stroke-opacity="0.85"/><path d="M606.8 573.0L585.7 592.8" stroke="#000" stroke-width="0.95" stroke-dasharray="2.2 1.3" stroke-opacity="0.9"/><path d="M680.6 498.2L681.8 501.1L681.8 506.3L680.8 503.8Z" fill="#005f93" stroke="#005f93" stroke-width="1"/><path d="M680.8 503.8L681.8 506.3L681.8 511.6L680.9 509.4Z" fill="#007591" stroke="#007591" stroke-width="1"/><path d="M680.9 509.4L681.8 511.6L681.8 516.8L681.1 515.0Z" fill="#008188" stroke="#008188" stroke-width="1"/><path d="M681.1 515.0L681.8 516.8L681.8 522.1L681.2 520.6Z" fill="#008d7e" stroke="#008d7e" stroke-width="1"/><path d="M681.2 520.6L681.8 522.1L681.8 527.3L681.4 526.2Z" fill="#00936d" stroke="#00936d" stroke-width="1"/><path d="M681.4 526.2L681.8 527.3L681.8 532.6L681.5 531.8Z" fill="#009355" stroke="#009355" stroke-width="1"/><path d="M681.5 531.8L681.8 532.6L681.8 537.8L681.7 537.4Z" fill="#00933d" stroke="#00933d" stroke-width="1"/><path d="M681.7 537.4L681.8 537.8L681.8 543.0L681.8 543.0Z" fill="#009128" stroke="#009128" stroke-width="1"/><path d="M680.6 498.2L680.6 498.2L680.8 503.8L680.6 503.4Z" fill="#005f93" stroke="#005f93" stroke-width="1"/><path d="M680.6 503.4L680.8 503.8L680.9 509.4L680.6 508.6Z" fill="#007591" stroke="#007591" stroke-width="1"/><path d="M680.6 508.6L680.9 509.4L681.1 515.0L680.6 513.8Z" fill="#008188" stroke="#008188" stroke-width="1"/><path d="M680.6 513.8L681.1 515.0L681.2 520.6L680.6 519.0Z" fill="#008d7e" stroke="#008d7e" stroke-width="1"/><path d="M680.6 519.0L681.2 520.6L681.4 526.2L680.6 524.2Z" fill="#00936d" stroke="#00936d" stroke-width="1"/><path d="M680.6 524.2L681.4 526.2L681.5 531.8L680.6 529.5Z" fill="#009355" stroke="#009355" stroke-width="1"/><path d="M680.6 529.5L681.5 531.8L681.7 537.4L680.6 534.7Z" fill="#00933d" stroke="#00933d" stroke-width="1"/><path d="M680.6 534.7L681.7 537.4L681.8 543.0L680.6 539.9Z" fill="#009128" stroke="#009128" stroke-width="1"/><path d="M680.6 498.2L681.8 501.1L681.8 543.0L680.6 539.9Z" fill="none" stroke="#000" stroke-width="0.7" stroke-opacity="0.85"/><path d="M680.6 498.2L681.8 543.0" stroke="#000" stroke-width="0.95" stroke-dasharray="2.2 1.3" stroke-opacity="0.9"/><path d="M611.4 501.1L612.6 498.2L612.6 503.4L611.5 506.0Z" fill="#005f93" stroke="#005f93" stroke-width="1"/><path d="M611.5 506.0L612.6 503.4L612.6 508.6L611.7 510.8Z" fill="#007591" stroke="#007591" stroke-width="1"/><path d="M611.7 510.8L612.6 508.6L612.6 513.8L611.8 515.6Z" fill="#008188" stroke="#008188" stroke-width="1"/><path d="M611.8 515.6L612.6 513.8L612.6 519.0L612.0 520.5Z" fill="#008d7e" stroke="#008d7e" stroke-width="1"/><path d="M612.0 520.5L612.6 519.0L612.6 524.2L612.1 525.3Z" fill="#00936d" stroke="#00936d" stroke-width="1"/><path d="M612.1 525.3L612.6 524.2L612.6 529.5L612.3 530.2Z" fill="#009355" stroke="#009355" stroke-width="1"/><path d="M612.3 530.2L612.6 529.5L612.6 534.7L612.4 535.0Z" fill="#00933d" stroke="#00933d" stroke-width="1"/><path d="M612.4 535.0L612.6 534.7L612.6 539.9L612.6 539.9Z" fill="#009128" stroke="#009128" stroke-width="1"/><path d="M611.4 501.1L611.4 501.1L611.5 506.0L611.4 506.3Z" fill="#005f93" stroke="#005f93" stroke-width="1"/><path d="M611.4 506.3L611.5 506.0L611.7 510.8L611.4 511.6Z" fill="#007591" stroke="#007591" stroke-width="1"/><path d="M611.4 511.6L611.7 510.8L611.8 515.6L611.4 516.8Z" fill="#008188" stroke="#008188" stroke-width="1"/><path d="M611.4 516.8L611.8 515.6L612.0 520.5L611.4 522.1Z" fill="#008d7e" stroke="#008d7e" stroke-width="1"/><path d="M611.4 522.1L612.0 520.5L612.1 525.3L611.4 527.3Z" fill="#00936d" stroke="#00936d" stroke-width="1"/><path d="M611.4 527.3L612.1 525.3L612.3 530.2L611.4 532.6Z" fill="#009355" stroke="#009355" stroke-width="1"/><path d="M611.4 532.6L612.3 530.2L612.4 535.0L611.4 537.8Z" fill="#00933d" stroke="#00933d" stroke-width="1"/><path d="M611.4 537.8L612.4 535.0L612.6 539.9L611.4 543.0Z" fill="#009128" stroke="#009128" stroke-width="1"/><path d="M611.4 501.1L612.6 498.2L612.6 539.9L611.4 543.0Z" fill="none" stroke="#000" stroke-width="0.7" stroke-opacity="0.85"/><path d="M611.4 501.1L612.6 539.9" stroke="#000" stroke-width="0.95" stroke-dasharray="2.2 1.3" stroke-opacity="0.9"/><path d="M680.6 546.2L677.1 549.2L679.4 555.1L682.1 552.9Z" fill="#00dc1c" stroke="#00dc1c" stroke-width="1"/><path d="M682.1 552.9L679.4 555.1L681.8 561.1L683.5 559.6Z" fill="#04d900" stroke="#04d900" stroke-width="1"/><path d="M683.5 559.6L681.8 561.1L684.1 567.0L685.0 566.3Z" fill="#26dd00" stroke="#26dd00" stroke-width="1"/><path d="M685.0 566.3L684.1 567.0L686.4 573.0L686.4 573.0Z" fill="#47e000" stroke="#47e000" stroke-width="1"/><path d="M680.6 546.2L680.6 546.2L682.1 552.9L683.2 551.9Z" fill="#00dc1c" stroke="#00dc1c" stroke-width="1"/><path d="M683.2 551.9L682.1 552.9L683.5 559.6L685.8 557.6Z" fill="#04d900" stroke="#04d900" stroke-width="1"/><path d="M685.8 557.6L683.5 559.6L685.0 566.3L688.4 563.3Z" fill="#26dd00" stroke="#26dd00" stroke-width="1"/><path d="M688.4 563.3L685.0 566.3L686.4 573.0L691.0 569.0Z" fill="#47e000" stroke="#47e000" stroke-width="1"/><path d="M680.6 546.2L677.1 549.2L686.4 573.0L691.0 569.0Z" fill="none" stroke="#000" stroke-width="0.7" stroke-opacity="0.85"/><path d="M680.6 546.2L686.4 573.0" stroke="#000" stroke-width="0.95" stroke-dasharray="2.2 1.3" stroke-opacity="0.9"/><path d="M616.1 549.2L612.6 546.2L610.0 551.9L612.6 554.1Z" fill="#00dc1c" stroke="#00dc1c" stroke-width="1"/><path d="M612.6 554.1L610.0 551.9L607.4 557.6L609.1 559.1Z" fill="#04d900" stroke="#04d900" stroke-width="1"/><path d="M609.1 559.1L607.4 557.6L604.8 563.3L605.7 564.0Z" fill="#26dd00" stroke="#26dd00" stroke-width="1"/><path d="M605.7 564.0L604.8 563.3L602.2 569.0L602.2 569.0Z" fill="#47e000" stroke="#47e000" stroke-width="1"/><path d="M616.1 549.2L616.1 549.2L612.6 554.1L613.8 555.1Z" fill="#00dc1c" stroke="#00dc1c" stroke-width="1"/><path d="M613.8 555.1L612.6 554.1L609.1 559.1L611.4 561.1Z" fill="#04d900" stroke="#04d900" stroke-width="1"/><path d="M611.4 561.1L609.1 559.1L605.7 564.0L609.1 567.0Z" fill="#26dd00" stroke="#26dd00" stroke-width="1"/><path d="M609.1 567.0L605.7 564.0L602.2 569.0L606.8 573.0Z" fill="#47e000" stroke="#47e000" stroke-width="1"/><path d="M616.1 549.2L612.6 546.2L602.2 569.0L606.8 573.0Z" fill="none" stroke="#000" stroke-width="0.7" stroke-opacity="0.85"/><path d="M616.1 549.2L602.2 569.0" stroke="#000" stroke-width="0.95" stroke-dasharray="2.2 1.3" stroke-opacity="0.9"/><path d="M583.1 659.7L573.3 654.2L564.4 668.4L571.8 672.5Z" fill="#d03500" stroke="#d03500" stroke-width="1"/><path d="M571.8 672.5L564.4 668.4L555.6 682.6L560.5 685.4Z" fill="#d01b00" stroke="#d01b00" stroke-width="1"/><path d="M560.5 685.4L555.6 682.6L546.7 696.9L549.1 698.2Z" fill="#ca0911" stroke="#ca0911" stroke-width="1"/><path d="M549.1 698.2L546.7 696.9L537.8 711.1L537.8 711.1Z" fill="#c00030" stroke="#c00030" stroke-width="1"/><path d="M583.1 659.7L583.1 659.7L571.8 672.5L572.6 675.2Z" fill="#ea3c00" stroke="#ea3c00" stroke-width="1"/><path d="M572.6 675.2L571.8 672.5L560.5 685.4L562.1 690.7Z" fill="#ea1f00" stroke="#ea1f00" stroke-width="1"/><path d="M562.1 690.7L560.5 685.4L549.1 698.2L551.5 706.2Z" fill="#e30b13" stroke="#e30b13" stroke-width="1"/><path d="M551.5 706.2L549.1 698.2L537.8 711.1L541.0 721.7Z" fill="#d80036" stroke="#d80036" stroke-width="1"/><path d="M583.1 659.7L573.3 654.2L537.8 711.1L541.0 721.7Z" fill="none" stroke="#000" stroke-width="0.7" stroke-opacity="0.85"/><path d="M583.1 659.7L537.8 711.1" stroke="#000" stroke-width="0.75" stroke-dasharray="2.2 1.3" stroke-opacity="0.9"/><path d="M583.1 633.6L573.3 625.4L573.3 629.5L581.7 636.5Z" fill="#734900" stroke="#734900" stroke-width="1"/><path d="M581.7 636.5L573.3 629.5L573.3 633.6L580.3 639.5Z" fill="#734400" stroke="#734400" stroke-width="1"/><path d="M580.3 639.5L573.3 633.6L573.3 637.7L578.9 642.4Z" fill="#733e00" stroke="#733e00" stroke-width="1"/><path d="M578.9 642.4L573.3 637.7L573.3 641.8L577.5 645.3Z" fill="#733900" stroke="#733900" stroke-width="1"/><path d="M577.5 645.3L573.3 641.8L573.3 645.9L576.1 648.3Z" fill="#733300" stroke="#733300" stroke-width="1"/><path d="M576.1 648.3L573.3 645.9L573.3 650.1L574.7 651.2Z" fill="#732e00" stroke="#732e00" stroke-width="1"/><path d="M574.7 651.2L573.3 650.1L573.3 654.2L573.3 654.2Z" fill="#732800" stroke="#732800" stroke-width="1"/><path d="M583.1 633.6L583.1 633.6L581.7 636.5L583.1 637.3Z" fill="#875600" stroke="#875600" stroke-width="1"/><path d="M583.1 637.3L581.7 636.5L580.3 639.5L583.1 641.0Z" fill="#875000" stroke="#875000" stroke-width="1"/><path d="M583.1 641.0L580.3 639.5L578.9 642.4L583.1 644.8Z" fill="#874900" stroke="#874900" stroke-width="1"/><path d="M583.1 644.8L578.9 642.4L577.5 645.3L583.1 648.5Z" fill="#874300" stroke="#874300" stroke-width="1"/><path d="M583.1 648.5L577.5 645.3L576.1 648.3L583.1 652.2Z" fill="#873c00" stroke="#873c00" stroke-width="1"/><path d="M583.1 652.2L576.1 648.3L574.7 651.2L583.1 655.9Z" fill="#873600" stroke="#873600" stroke-width="1"/><path d="M583.1 655.9L574.7 651.2L573.3 654.2L583.1 659.7Z" fill="#872f00" stroke="#872f00" stroke-width="1"/><path d="M583.1 633.6L573.3 625.4L573.3 654.2L583.1 659.7Z" fill="none" stroke="#000" stroke-width="0.7" stroke-opacity="0.85"/><path d="M583.1 633.6L573.3 654.2" stroke="#000" stroke-width="0.95" stroke-dasharray="2.2 1.3" stroke-opacity="0.9"/><path d="M721.6 650.4L710.1 659.7L720.6 675.2L729.3 668.2Z" fill="#f34400" stroke="#f34400" stroke-width="1"/><path d="M729.3 668.2L720.6 675.2L731.1 690.7L736.9 686.0Z" fill="#f32500" stroke="#f32500" stroke-width="1"/><path d="M736.9 686.0L731.1 690.7L741.7 706.2L744.6 703.9Z" fill="#ed0d10" stroke="#ed0d10" stroke-width="1"/><path d="M744.6 703.9L741.7 706.2L752.2 721.7L752.2 721.7Z" fill="#e20031" stroke="#e20031" stroke-width="1"/><path d="M721.6 650.4L721.6 650.4L729.3 668.2L731.2 665.2Z" fill="#9f2c00" stroke="#9f2c00" stroke-width="1"/><path d="M731.2 665.2L729.3 668.2L736.9 686.0L740.8 680.0Z" fill="#9f1800" stroke="#9f1800" stroke-width="1"/><path d="M740.8 680.0L736.9 686.0L744.6 703.9L750.5 694.9Z" fill="#9b090a" stroke="#9b090a" stroke-width="1"/><path d="M750.5 694.9L744.6 703.9L752.2 721.7L760.1 709.7Z" fill="#930020" stroke="#930020" stroke-width="1"/><path d="M721.6 650.4L710.1 659.7L752.2 721.7L760.1 709.7Z" fill="none" stroke="#000" stroke-width="0.7" stroke-opacity="0.85"/><path d="M721.6 650.4L752.2 721.7" stroke="#000" stroke-width="0.75" stroke-dasharray="2.2 1.3" stroke-opacity="0.9"/><path d="M721.6 625.8L710.1 633.6L710.1 637.3L720.0 630.7Z" fill="#5e3c00" stroke="#5e3c00" stroke-width="1"/><path d="M720.0 630.7L710.1 637.3L710.1 641.0L718.3 635.5Z" fill="#5e3800" stroke="#5e3800" stroke-width="1"/><path d="M718.3 635.5L710.1 641.0L710.1 644.8L716.7 640.3Z" fill="#5e3400" stroke="#5e3400" stroke-width="1"/><path d="M716.7 640.3L710.1 644.8L710.1 648.5L715.0 645.2Z" fill="#5e3000" stroke="#5e3000" stroke-width="1"/><path d="M715.0 645.2L710.1 648.5L710.1 652.2L713.4 650.0Z" fill="#5e2c00" stroke="#5e2c00" stroke-width="1"/><path d="M713.4 650.0L710.1 652.2L710.1 655.9L711.7 654.8Z" fill="#5e2700" stroke="#5e2700" stroke-width="1"/><path d="M711.7 654.8L710.1 655.9L710.1 659.7L710.1 659.7Z" fill="#5e2300" stroke="#5e2300" stroke-width="1"/><path d="M721.6 625.8L721.6 625.8L720.0 630.7L721.6 629.3Z" fill="#714800" stroke="#714800" stroke-width="1"/><path d="M721.6 629.3L720.0 630.7L718.3 635.5L721.6 632.8Z" fill="#714300" stroke="#714300" stroke-width="1"/><path d="M721.6 632.8L718.3 635.5L716.7 640.3L721.6 636.4Z" fill="#713e00" stroke="#713e00" stroke-width="1"/><path d="M721.6 636.4L716.7 640.3L715.0 645.2L721.6 639.9Z" fill="#713900" stroke="#713900" stroke-width="1"/><path d="M721.6 639.9L715.0 645.2L713.4 650.0L721.6 643.4Z" fill="#713400" stroke="#713400" stroke-width="1"/><path d="M721.6 643.4L713.4 650.0L711.7 654.8L721.6 646.9Z" fill="#712f00" stroke="#712f00" stroke-width="1"/><path d="M721.6 646.9L711.7 654.8L710.1 659.7L721.6 650.4Z" fill="#712a00" stroke="#712a00" stroke-width="1"/><path d="M721.6 625.8L710.1 633.6L710.1 659.7L721.6 650.4Z" fill="none" stroke="#000" stroke-width="0.7" stroke-opacity="0.85"/><path d="M721.6 625.8L710.1 659.7" stroke="#000" stroke-width="0.95" stroke-dasharray="2.2 1.3" stroke-opacity="0.9"/><path d="M681.8 501.1L680.6 504.0L680.6 509.3L681.7 506.7Z" fill="#005f93" stroke="#005f93" stroke-width="1"/><path d="M681.7 506.7L680.6 509.3L680.6 514.6L681.5 512.4Z" fill="#007591" stroke="#007591" stroke-width="1"/><path d="M681.5 512.4L680.6 514.6L680.6 519.9L681.4 518.0Z" fill="#008188" stroke="#008188" stroke-width="1"/><path d="M681.4 518.0L680.6 519.9L680.6 525.1L681.2 523.7Z" fill="#008d7e" stroke="#008d7e" stroke-width="1"/><path d="M681.2 523.7L680.6 525.1L680.6 530.4L681.1 529.3Z" fill="#00936d" stroke="#00936d" stroke-width="1"/><path d="M681.1 529.3L680.6 530.4L680.6 535.7L680.9 534.9Z" fill="#009355" stroke="#009355" stroke-width="1"/><path d="M680.9 534.9L680.6 535.7L680.6 540.9L680.8 540.6Z" fill="#00933d" stroke="#00933d" stroke-width="1"/><path d="M680.8 540.6L680.6 540.9L680.6 546.2L680.6 546.2Z" fill="#009128" stroke="#009128" stroke-width="1"/><path d="M681.8 501.1L681.8 501.1L681.7 506.7L681.8 506.3Z" fill="#005f93" stroke="#005f93" stroke-width="1"/><path d="M681.8 506.3L681.7 506.7L681.5 512.4L681.8 511.6Z" fill="#007591" stroke="#007591" stroke-width="1"/><path d="M681.8 511.6L681.5 512.4L681.4 518.0L681.8 516.8Z" fill="#008188" stroke="#008188" stroke-width="1"/><path d="M681.8 516.8L681.4 518.0L681.2 523.7L681.8 522.1Z" fill="#008d7e" stroke="#008d7e" stroke-width="1"/><path d="M681.8 522.1L681.2 523.7L681.1 529.3L681.8 527.3Z" fill="#00936d" stroke="#00936d" stroke-width="1"/><path d="M681.8 527.3L681.1 529.3L680.9 534.9L681.8 532.6Z" fill="#009355" stroke="#009355" stroke-width="1"/><path d="M681.8 532.6L680.9 534.9L680.8 540.6L681.8 537.8Z" fill="#00933d" stroke="#00933d" stroke-width="1"/><path d="M681.8 537.8L680.8 540.6L680.6 546.2L681.8 543.0Z" fill="#009128" stroke="#009128" stroke-width="1"/><path d="M681.8 501.1L680.6 504.0L680.6 546.2L681.8 543.0Z" fill="none" stroke="#000" stroke-width="0.7" stroke-opacity="0.85"/><path d="M681.8 501.1L680.6 546.2" stroke="#000" stroke-width="0.95" stroke-dasharray="2.2 1.3" stroke-opacity="0.9"/><path d="M612.6 504.0L611.4 501.1L611.4 506.3L612.4 508.9Z" fill="#005f93" stroke="#005f93" stroke-width="1"/><path d="M612.4 508.9L611.4 506.3L611.4 511.6L612.3 513.8Z" fill="#007591" stroke="#007591" stroke-width="1"/><path d="M612.3 513.8L611.4 511.6L611.4 516.8L612.1 518.7Z" fill="#008188" stroke="#008188" stroke-width="1"/><path d="M612.1 518.7L611.4 516.8L611.4 522.1L612.0 523.5Z" fill="#008d7e" stroke="#008d7e" stroke-width="1"/><path d="M612.0 523.5L611.4 522.1L611.4 527.3L611.8 528.4Z" fill="#00936d" stroke="#00936d" stroke-width="1"/><path d="M611.8 528.4L611.4 527.3L611.4 532.6L611.7 533.3Z" fill="#009355" stroke="#009355" stroke-width="1"/><path d="M611.7 533.3L611.4 532.6L611.4 537.8L611.5 538.2Z" fill="#00933d" stroke="#00933d" stroke-width="1"/><path d="M611.5 538.2L611.4 537.8L611.4 543.0L611.4 543.0Z" fill="#009128" stroke="#009128" stroke-width="1"/><path d="M612.6 504.0L612.6 504.0L612.4 508.9L612.6 509.3Z" fill="#005f93" stroke="#005f93" stroke-width="1"/><path d="M612.6 509.3L612.4 508.9L612.3 513.8L612.6 514.6Z" fill="#007591" stroke="#007591" stroke-width="1"/><path d="M612.6 514.6L612.3 513.8L612.1 518.7L612.6 519.9Z" fill="#008188" stroke="#008188" stroke-width="1"/><path d="M612.6 519.9L612.1 518.7L612.0 523.5L612.6 525.1Z" fill="#008d7e" stroke="#008d7e" stroke-width="1"/><path d="M612.6 525.1L612.0 523.5L611.8 528.4L612.6 530.4Z" fill="#00936d" stroke="#00936d" stroke-width="1"/><path d="M612.6 530.4L611.8 528.4L611.7 533.3L612.6 535.7Z" fill="#009355" stroke="#009355" stroke-width="1"/><path d="M612.6 535.7L611.7 533.3L611.5 538.2L612.6 540.9Z" fill="#00933d" stroke="#00933d" stroke-width="1"/><path d="M612.6 540.9L611.5 538.2L611.4 543.0L612.6 546.2Z" fill="#009128" stroke="#009128" stroke-width="1"/><path d="M612.6 504.0L611.4 501.1L611.4 543.0L612.6 546.2Z" fill="none" stroke="#000" stroke-width="0.7" stroke-opacity="0.85"/><path d="M612.6 504.0L611.4 543.0" stroke="#000" stroke-width="0.95" stroke-dasharray="2.2 1.3" stroke-opacity="0.9"/><path d="M686.4 573.0L679.1 576.4L682.1 583.1L687.6 580.6Z" fill="#6fed00" stroke="#6fed00" stroke-width="1"/><path d="M687.6 580.6L682.1 583.1L685.1 589.9L688.8 588.2Z" fill="#93ed00" stroke="#93ed00" stroke-width="1"/><path d="M688.8 588.2L685.1 589.9L688.1 596.6L690.0 595.8Z" fill="#b8ed00" stroke="#b8ed00" stroke-width="1"/><path d="M690.0 595.8L688.1 596.6L691.1 603.4L691.1 603.4Z" fill="#cde400" stroke="#cde400" stroke-width="1"/><path d="M686.4 573.0L686.4 573.0L687.6 580.6L690.1 579.3Z" fill="#6fed00" stroke="#6fed00" stroke-width="1"/><path d="M690.1 579.3L687.6 580.6L688.8 588.2L693.8 585.7Z" fill="#93ed00" stroke="#93ed00" stroke-width="1"/><path d="M693.8 585.7L688.8 588.2L690.0 595.8L697.5 592.1Z" fill="#b8ed00" stroke="#b8ed00" stroke-width="1"/><path d="M697.5 592.1L690.0 595.8L691.1 603.4L701.2 598.5Z" fill="#cde400" stroke="#cde400" stroke-width="1"/><path d="M686.4 573.0L679.1 576.4L691.1 603.4L701.2 598.5Z" fill="none" stroke="#000" stroke-width="0.7" stroke-opacity="0.85"/><path d="M686.4 573.0L691.1 603.4" stroke="#000" stroke-width="0.95" stroke-dasharray="2.2 1.3" stroke-opacity="0.9"/><path d="M614.1 576.4L606.8 573.0L603.1 579.3L608.6 581.9Z" fill="#6fed00" stroke="#6fed00" stroke-width="1"/><path d="M608.6 581.9L603.1 579.3L599.4 585.7L603.1 587.5Z" fill="#93ed00" stroke="#93ed00" stroke-width="1"/><path d="M603.1 587.5L599.4 585.7L595.7 592.1L597.5 593.0Z" fill="#b8ed00" stroke="#b8ed00" stroke-width="1"/><path d="M597.5 593.0L595.7 592.1L592.0 598.5L592.0 598.5Z" fill="#cde400" stroke="#cde400" stroke-width="1"/><path d="M614.1 576.4L614.1 576.4L608.6 581.9L611.1 583.1Z" fill="#6fed00" stroke="#6fed00" stroke-width="1"/><path d="M611.1 583.1L608.6 581.9L603.1 587.5L608.1 589.9Z" fill="#93ed00" stroke="#93ed00" stroke-width="1"/><path d="M608.1 589.9L603.1 587.5L597.5 593.0L605.1 596.6Z" fill="#b8ed00" stroke="#b8ed00" stroke-width="1"/><path d="M605.1 596.6L597.5 593.0L592.0 598.5L602.1 603.4Z" fill="#cde400" stroke="#cde400" stroke-width="1"/><path d="M614.1 576.4L606.8 573.0L592.0 598.5L602.1 603.4Z" fill="none" stroke="#000" stroke-width="0.7" stroke-opacity="0.85"/><path d="M614.1 576.4L592.0 598.5" stroke="#000" stroke-width="0.95" stroke-dasharray="2.2 1.3" stroke-opacity="0.9"/><path d="M669.1 476.5L671.7 478.4L673.9 483.4L672.0 481.9Z" fill="#000ed9" stroke="#000ed9" stroke-width="1"/><path d="M672.0 481.9L673.9 483.4L676.2 488.3L674.9 487.3Z" fill="#002bd9" stroke="#002bd9" stroke-width="1"/><path d="M674.9 487.3L676.2 488.3L678.4 493.2L677.7 492.7Z" fill="#0047d9" stroke="#0047d9" stroke-width="1"/><path d="M677.7 492.7L678.4 493.2L680.6 498.2L680.6 498.2Z" fill="#006ad9" stroke="#006ad9" stroke-width="1"/><path d="M669.1 476.5L669.1 476.5L672.0 481.9L671.1 481.2Z" fill="#000ed9" stroke="#000ed9" stroke-width="1"/><path d="M671.1 481.2L672.0 481.9L674.9 487.3L673.1 486.0Z" fill="#002bd9" stroke="#002bd9" stroke-width="1"/><path d="M673.1 486.0L674.9 487.3L677.7 492.7L675.1 490.7Z" fill="#0047d9" stroke="#0047d9" stroke-width="1"/><path d="M675.1 490.7L677.7 492.7L680.6 498.2L677.1 495.4Z" fill="#006ad9" stroke="#006ad9" stroke-width="1"/><path d="M669.1 476.5L671.7 478.4L680.6 498.2L677.1 495.4Z" fill="none" stroke="#000" stroke-width="0.7" stroke-opacity="0.85"/><path d="M669.1 476.5L680.6 498.2" stroke="#000" stroke-width="0.95" stroke-dasharray="2.2 1.3" stroke-opacity="0.9"/><path d="M621.5 478.4L624.1 476.5L622.1 481.2L620.1 482.7Z" fill="#000ed9" stroke="#000ed9" stroke-width="1"/><path d="M620.1 482.7L622.1 481.2L620.1 486.0L618.8 486.9Z" fill="#002bd9" stroke="#002bd9" stroke-width="1"/><path d="M618.8 486.9L620.1 486.0L618.1 490.7L617.5 491.2Z" fill="#0047d9" stroke="#0047d9" stroke-width="1"/><path d="M617.5 491.2L618.1 490.7L616.1 495.4L616.1 495.4Z" fill="#006ad9" stroke="#006ad9" stroke-width="1"/><path d="M621.5 478.4L621.5 478.4L620.1 482.7L619.3 483.4Z" fill="#000ed9" stroke="#000ed9" stroke-width="1"/><path d="M619.3 483.4L620.1 482.7L618.8 486.9L617.0 488.3Z" fill="#002bd9" stroke="#002bd9" stroke-width="1"/><path d="M617.0 488.3L618.8 486.9L617.5 491.2L614.8 493.2Z" fill="#0047d9" stroke="#0047d9" stroke-width="1"/><path d="M614.8 493.2L617.5 491.2L616.1 495.4L612.6 498.2Z" fill="#006ad9" stroke="#006ad9" stroke-width="1"/><path d="M621.5 478.4L624.1 476.5L616.1 495.4L612.6 498.2Z" fill="none" stroke="#000" stroke-width="0.7" stroke-opacity="0.85"/><path d="M621.5 478.4L616.1 495.4" stroke="#000" stroke-width="0.95" stroke-dasharray="2.2 1.3" stroke-opacity="0.9"/><path d="M602.1 603.4L592.0 598.5L587.4 605.2L594.9 608.9Z" fill="#908d00" stroke="#908d00" stroke-width="1"/><path d="M594.9 608.9L587.4 605.2L582.7 612.0L587.7 614.4Z" fill="#9a8600" stroke="#9a8600" stroke-width="1"/><path d="M587.7 614.4L582.7 612.0L578.0 618.7L580.5 619.9Z" fill="#9a7900" stroke="#9a7900" stroke-width="1"/><path d="M580.5 619.9L578.0 618.7L573.3 625.4L573.3 625.4Z" fill="#9a6d00" stroke="#9a6d00" stroke-width="1"/><path d="M602.1 603.4L602.1 603.4L594.9 608.9L597.3 610.9Z" fill="#c3bf00" stroke="#c3bf00" stroke-width="1"/><path d="M597.3 610.9L594.9 608.9L587.7 614.4L592.6 618.5Z" fill="#d0b500" stroke="#d0b500" stroke-width="1"/><path d="M592.6 618.5L587.7 614.4L580.5 619.9L587.9 626.0Z" fill="#d0a400" stroke="#d0a400" stroke-width="1"/><path d="M587.9 626.0L580.5 619.9L573.3 625.4L583.1 633.6Z" fill="#d09300" stroke="#d09300" stroke-width="1"/><path d="M602.1 603.4L592.0 598.5L573.3 625.4L583.1 633.6Z" fill="none" stroke="#000" stroke-width="0.7" stroke-opacity="0.85"/><path d="M602.1 603.4L573.3 625.4" stroke="#000" stroke-width="0.95" stroke-dasharray="2.2 1.3" stroke-opacity="0.9"/><path d="M701.2 598.5L691.1 603.4L695.9 610.9L703.4 607.3Z" fill="#b9b500" stroke="#b9b500" stroke-width="1"/><path d="M703.4 607.3L695.9 610.9L700.6 618.5L705.6 616.1Z" fill="#c5ab00" stroke="#c5ab00" stroke-width="1"/><path d="M705.6 616.1L700.6 618.5L705.3 626.0L707.8 624.8Z" fill="#c59b00" stroke="#c59b00" stroke-width="1"/><path d="M707.8 624.8L705.3 626.0L710.1 633.6L710.1 633.6Z" fill="#c58b00" stroke="#c58b00" stroke-width="1"/><path d="M701.2 598.5L701.2 598.5L703.4 607.3L706.3 605.3Z" fill="#a4a100" stroke="#a4a100" stroke-width="1"/><path d="M706.3 605.3L703.4 607.3L705.6 616.1L711.4 612.2Z" fill="#af9800" stroke="#af9800" stroke-width="1"/><path d="M711.4 612.2L705.6 616.1L707.8 624.8L716.5 619.0Z" fill="#af8a00" stroke="#af8a00" stroke-width="1"/><path d="M716.5 619.0L707.8 624.8L710.1 633.6L721.6 625.8Z" fill="#af7c00" stroke="#af7c00" stroke-width="1"/><path d="M701.2 598.5L691.1 603.4L710.1 633.6L721.6 625.8Z" fill="none" stroke="#000" stroke-width="0.7" stroke-opacity="0.85"/><path d="M701.2 598.5L710.1 633.6" stroke="#000" stroke-width="0.95" stroke-dasharray="2.2 1.3" stroke-opacity="0.9"/><path d="M677.1 549.2L671.5 551.7L673.4 557.9L677.6 556.0Z" fill="#00cf1a" stroke="#00cf1a" stroke-width="1"/><path d="M677.6 556.0L673.4 557.9L675.3 564.0L678.1 562.8Z" fill="#04cc00" stroke="#04cc00" stroke-width="1"/><path d="M678.1 562.8L675.3 564.0L677.2 570.2L678.6 569.6Z" fill="#23cf00" stroke="#23cf00" stroke-width="1"/><path d="M678.6 569.6L677.2 570.2L679.1 576.4L679.1 576.4Z" fill="#43d300" stroke="#43d300" stroke-width="1"/><path d="M677.1 549.2L677.1 549.2L677.6 556.0L679.4 555.1Z" fill="#00cf1a" stroke="#00cf1a" stroke-width="1"/><path d="M679.4 555.1L677.6 556.0L678.1 562.8L681.8 561.1Z" fill="#04cc00" stroke="#04cc00" stroke-width="1"/><path d="M681.8 561.1L678.1 562.8L678.6 569.6L684.1 567.0Z" fill="#23cf00" stroke="#23cf00" stroke-width="1"/><path d="M684.1 567.0L678.6 569.6L679.1 576.4L686.4 573.0Z" fill="#43d300" stroke="#43d300" stroke-width="1"/><path d="M677.1 549.2L671.5 551.7L679.1 576.4L686.4 573.0Z" fill="none" stroke="#000" stroke-width="0.7" stroke-opacity="0.85"/><path d="M677.1 549.2L679.1 576.4" stroke="#000" stroke-width="0.95" stroke-dasharray="2.2 1.3" stroke-opacity="0.9"/><path d="M621.7 551.7L616.1 549.2L613.8 555.1L618.0 557.0Z" fill="#00cf1a" stroke="#00cf1a" stroke-width="1"/><path d="M618.0 557.0L613.8 555.1L611.4 561.1L614.2 562.3Z" fill="#04cc00" stroke="#04cc00" stroke-width="1"/><path d="M614.2 562.3L611.4 561.1L609.1 567.0L610.5 567.6Z" fill="#23cf00" stroke="#23cf00" stroke-width="1"/><path d="M610.5 567.6L609.1 567.0L606.8 573.0L606.8 573.0Z" fill="#43d300" stroke="#43d300" stroke-width="1"/><path d="M621.7 551.7L621.7 551.7L618.0 557.0L619.8 557.9Z" fill="#00cf1a" stroke="#00cf1a" stroke-width="1"/><path d="M619.8 557.9L618.0 557.0L614.2 562.3L617.9 564.0Z" fill="#04cc00" stroke="#04cc00" stroke-width="1"/><path d="M617.9 564.0L614.2 562.3L610.5 567.6L616.0 570.2Z" fill="#23cf00" stroke="#23cf00" stroke-width="1"/><path d="M616.0 570.2L610.5 567.6L606.8 573.0L614.1 576.4Z" fill="#43d300" stroke="#43d300" stroke-width="1"/><path d="M621.7 551.7L616.1 549.2L606.8 573.0L614.1 576.4Z" fill="none" stroke="#000" stroke-width="0.7" stroke-opacity="0.85"/><path d="M621.7 551.7L606.8 573.0" stroke="#000" stroke-width="0.95" stroke-dasharray="2.2 1.3" stroke-opacity="0.9"/><path d="M671.7 478.4L672.6 480.5L674.9 485.7L674.2 484.1Z" fill="#000ee0" stroke="#000ee0" stroke-width="1"/><path d="M674.2 484.1L674.9 485.7L677.2 490.8L676.8 489.8Z" fill="#002ce0" stroke="#002ce0" stroke-width="1"/><path d="M676.8 489.8L677.2 490.8L679.5 496.0L679.3 495.4Z" fill="#004ae0" stroke="#004ae0" stroke-width="1"/><path d="M679.3 495.4L679.5 496.0L681.8 501.1L681.8 501.1Z" fill="#006de0" stroke="#006de0" stroke-width="1"/><path d="M671.7 478.4L671.7 478.4L674.2 484.1L673.9 483.4Z" fill="#000ee0" stroke="#000ee0" stroke-width="1"/><path d="M673.9 483.4L674.2 484.1L676.8 489.8L676.2 488.3Z" fill="#002ce0" stroke="#002ce0" stroke-width="1"/><path d="M676.2 488.3L676.8 489.8L679.3 495.4L678.4 493.2Z" fill="#004ae0" stroke="#004ae0" stroke-width="1"/><path d="M678.4 493.2L679.3 495.4L681.8 501.1L680.6 498.2Z" fill="#006de0" stroke="#006de0" stroke-width="1"/><path d="M671.7 478.4L672.6 480.5L681.8 501.1L680.6 498.2Z" fill="none" stroke="#000" stroke-width="0.7" stroke-opacity="0.85"/><path d="M671.7 478.4L681.8 501.1" stroke="#000" stroke-width="0.95" stroke-dasharray="2.2 1.3" stroke-opacity="0.9"/><path d="M620.6 480.5L621.5 478.4L619.3 483.4L618.6 484.9Z" fill="#000ee0" stroke="#000ee0" stroke-width="1"/><path d="M618.6 484.9L619.3 483.4L617.0 488.3L616.6 489.3Z" fill="#002ce0" stroke="#002ce0" stroke-width="1"/><path d="M616.6 489.3L617.0 488.3L614.8 493.2L614.6 493.8Z" fill="#004ae0" stroke="#004ae0" stroke-width="1"/><path d="M614.6 493.8L614.8 493.2L612.6 498.2L612.6 498.2Z" fill="#006de0" stroke="#006de0" stroke-width="1"/><path d="M620.6 480.5L620.6 480.5L618.6 484.9L618.3 485.7Z" fill="#000ee0" stroke="#000ee0" stroke-width="1"/><path d="M618.3 485.7L618.6 484.9L616.6 489.3L616.0 490.8Z" fill="#002ce0" stroke="#002ce0" stroke-width="1"/><path d="M616.0 490.8L616.6 489.3L614.6 493.8L613.7 496.0Z" fill="#004ae0" stroke="#004ae0" stroke-width="1"/><path d="M613.7 496.0L614.6 493.8L612.6 498.2L611.4 501.1Z" fill="#006de0" stroke="#006de0" stroke-width="1"/><path d="M620.6 480.5L621.5 478.4L612.6 498.2L611.4 501.1Z" fill="none" stroke="#000" stroke-width="0.7" stroke-opacity="0.85"/><path d="M620.6 480.5L612.6 498.2" stroke="#000" stroke-width="0.95" stroke-dasharray="2.2 1.3" stroke-opacity="0.9"/><path d="M680.6 504.0L677.1 506.8L677.1 512.1L680.2 509.7Z" fill="#005c8f" stroke="#005c8f" stroke-width="1"/><path d="M680.2 509.7L677.1 512.1L677.1 517.4L679.7 515.3Z" fill="#00728d" stroke="#00728d" stroke-width="1"/><path d="M679.7 515.3L677.1 517.4L677.1 522.7L679.3 521.0Z" fill="#007d84" stroke="#007d84" stroke-width="1"/><path d="M679.3 521.0L677.1 522.7L677.1 528.0L678.8 526.6Z" fill="#00897a" stroke="#00897a" stroke-width="1"/><path d="M678.8 526.6L677.1 528.0L677.1 533.3L678.4 532.2Z" fill="#008f6a" stroke="#008f6a" stroke-width="1"/><path d="M678.4 532.2L677.1 533.3L677.1 538.6L678.0 537.9Z" fill="#008f53" stroke="#008f53" stroke-width="1"/><path d="M678.0 537.9L677.1 538.6L677.1 543.9L677.5 543.5Z" fill="#008f3c" stroke="#008f3c" stroke-width="1"/><path d="M677.5 543.5L677.1 543.9L677.1 549.2L677.1 549.2Z" fill="#008d26" stroke="#008d26" stroke-width="1"/><path d="M680.6 504.0L680.6 504.0L680.2 509.7L680.6 509.3Z" fill="#005c8f" stroke="#005c8f" stroke-width="1"/><path d="M680.6 509.3L680.2 509.7L679.7 515.3L680.6 514.6Z" fill="#00728d" stroke="#00728d" stroke-width="1"/><path d="M680.6 514.6L679.7 515.3L679.3 521.0L680.6 519.9Z" fill="#007d84" stroke="#007d84" stroke-width="1"/><path d="M680.6 519.9L679.3 521.0L678.8 526.6L680.6 525.1Z" fill="#00897a" stroke="#00897a" stroke-width="1"/><path d="M680.6 525.1L678.8 526.6L678.4 532.2L680.6 530.4Z" fill="#008f6a" stroke="#008f6a" stroke-width="1"/><path d="M680.6 530.4L678.4 532.2L678.0 537.9L680.6 535.7Z" fill="#008f53" stroke="#008f53" stroke-width="1"/><path d="M680.6 535.7L678.0 537.9L677.5 543.5L680.6 540.9Z" fill="#008f3c" stroke="#008f3c" stroke-width="1"/><path d="M680.6 540.9L677.5 543.5L677.1 549.2L680.6 546.2Z" fill="#008d26" stroke="#008d26" stroke-width="1"/><path d="M680.6 504.0L677.1 506.8L677.1 549.2L680.6 546.2Z" fill="none" stroke="#000" stroke-width="0.7" stroke-opacity="0.85"/><path d="M680.6 504.0L677.1 549.2" stroke="#000" stroke-width="0.95" stroke-dasharray="2.2 1.3" stroke-opacity="0.9"/><path d="M616.1 506.8L612.6 504.0L612.6 509.3L615.7 511.7Z" fill="#005c8f" stroke="#005c8f" stroke-width="1"/><path d="M615.7 511.7L612.6 509.3L612.6 514.6L615.2 516.6Z" fill="#00728d" stroke="#00728d" stroke-width="1"/><path d="M615.2 516.6L612.6 514.6L612.6 519.9L614.8 521.6Z" fill="#007d84" stroke="#007d84" stroke-width="1"/><path d="M614.8 521.6L612.6 519.9L612.6 525.1L614.4 526.5Z" fill="#00897a" stroke="#00897a" stroke-width="1"/><path d="M614.4 526.5L612.6 525.1L612.6 530.4L613.9 531.4Z" fill="#008f6a" stroke="#008f6a" stroke-width="1"/><path d="M613.9 531.4L612.6 530.4L612.6 535.7L613.5 536.4Z" fill="#008f53" stroke="#008f53" stroke-width="1"/><path d="M613.5 536.4L612.6 535.7L612.6 540.9L613.0 541.3Z" fill="#008f3c" stroke="#008f3c" stroke-width="1"/><path d="M613.0 541.3L612.6 540.9L612.6 546.2L612.6 546.2Z" fill="#008d26" stroke="#008d26" stroke-width="1"/><path d="M616.1 506.8L616.1 506.8L615.7 511.7L616.1 512.1Z" fill="#005c8f" stroke="#005c8f" stroke-width="1"/><path d="M616.1 512.1L615.7 511.7L615.2 516.6L616.1 517.4Z" fill="#00728d" stroke="#00728d" stroke-width="1"/><path d="M616.1 517.4L615.2 516.6L614.8 521.6L616.1 522.7Z" fill="#007d84" stroke="#007d84" stroke-width="1"/><path d="M616.1 522.7L614.8 521.6L614.4 526.5L616.1 528.0Z" fill="#00897a" stroke="#00897a" stroke-width="1"/><path d="M616.1 528.0L614.4 526.5L613.9 531.4L616.1 533.3Z" fill="#008f6a" stroke="#008f6a" stroke-width="1"/><path d="M616.1 533.3L613.9 531.4L613.5 536.4L616.1 538.6Z" fill="#008f53" stroke="#008f53" stroke-width="1"/><path d="M616.1 538.6L613.5 536.4L613.0 541.3L616.1 543.9Z" fill="#008f3c" stroke="#008f3c" stroke-width="1"/><path d="M616.1 543.9L613.0 541.3L612.6 546.2L616.1 549.2Z" fill="#008d26" stroke="#008d26" stroke-width="1"/><path d="M616.1 506.8L612.6 504.0L612.6 546.2L616.1 549.2Z" fill="none" stroke="#000" stroke-width="0.7" stroke-opacity="0.85"/><path d="M616.1 506.8L612.6 546.2" stroke="#000" stroke-width="0.95" stroke-dasharray="2.2 1.3" stroke-opacity="0.9"/><path d="M679.1 576.4L669.6 579.0L671.7 586.0L678.9 584.1Z" fill="#65d800" stroke="#65d800" stroke-width="1"/><path d="M678.9 584.1L671.7 586.0L673.9 593.1L678.6 591.8Z" fill="#86d800" stroke="#86d800" stroke-width="1"/><path d="M678.6 591.8L673.9 593.1L676.0 600.1L678.4 599.4Z" fill="#a8d800" stroke="#a8d800" stroke-width="1"/><path d="M678.4 599.4L676.0 600.1L678.1 607.1L678.1 607.1Z" fill="#bbd000" stroke="#bbd000" stroke-width="1"/><path d="M679.1 576.4L679.1 576.4L678.9 584.1L682.1 583.1Z" fill="#65d800" stroke="#65d800" stroke-width="1"/><path d="M682.1 583.1L678.9 584.1L678.6 591.8L685.1 589.9Z" fill="#86d800" stroke="#86d800" stroke-width="1"/><path d="M685.1 589.9L678.6 591.8L678.4 599.4L688.1 596.6Z" fill="#a8d800" stroke="#a8d800" stroke-width="1"/><path d="M688.1 596.6L678.4 599.4L678.1 607.1L691.1 603.4Z" fill="#bbd000" stroke="#bbd000" stroke-width="1"/><path d="M679.1 576.4L669.6 579.0L678.1 607.1L691.1 603.4Z" fill="none" stroke="#000" stroke-width="0.7" stroke-opacity="0.85"/><path d="M679.1 576.4L678.1 607.1" stroke="#000" stroke-width="0.95" stroke-dasharray="2.2 1.3" stroke-opacity="0.9"/><path d="M623.6 579.0L614.1 576.4L611.1 583.1L618.2 585.1Z" fill="#65d800" stroke="#65d800" stroke-width="1"/><path d="M618.2 585.1L611.1 583.1L608.1 589.9L612.8 591.2Z" fill="#86d800" stroke="#86d800" stroke-width="1"/><path d="M612.8 591.2L608.1 589.9L605.1 596.6L607.4 597.3Z" fill="#a8d800" stroke="#a8d800" stroke-width="1"/><path d="M607.4 597.3L605.1 596.6L602.1 603.4L602.1 603.4Z" fill="#bbd000" stroke="#bbd000" stroke-width="1"/><path d="M623.6 579.0L623.6 579.0L618.2 585.1L621.5 586.0Z" fill="#65d800" stroke="#65d800" stroke-width="1"/><path d="M621.5 586.0L618.2 585.1L612.8 591.2L619.4 593.1Z" fill="#86d800" stroke="#86d800" stroke-width="1"/><path d="M619.4 593.1L612.8 591.2L607.4 597.3L617.2 600.1Z" fill="#a8d800" stroke="#a8d800" stroke-width="1"/><path d="M617.2 600.1L607.4 597.3L602.1 603.4L615.1 607.1Z" fill="#bbd000" stroke="#bbd000" stroke-width="1"/><path d="M623.6 579.0L614.1 576.4L602.1 603.4L615.1 607.1Z" fill="none" stroke="#000" stroke-width="0.7" stroke-opacity="0.85"/><path d="M623.6 579.0L602.1 603.4" stroke="#000" stroke-width="0.95" stroke-dasharray="2.2 1.3" stroke-opacity="0.9"/><path d="M671.5 551.7L664.2 553.6L665.6 560.0L671.0 558.5Z" fill="#00bc18" stroke="#00bc18" stroke-width="1"/><path d="M671.0 558.5L665.6 560.0L666.9 566.3L670.5 565.4Z" fill="#03ba00" stroke="#03ba00" stroke-width="1"/><path d="M670.5 565.4L666.9 566.3L668.2 572.7L670.1 572.2Z" fill="#20bd00" stroke="#20bd00" stroke-width="1"/><path d="M670.1 572.2L668.2 572.7L669.6 579.0L669.6 579.0Z" fill="#3dbf00" stroke="#3dbf00" stroke-width="1"/><path d="M671.5 551.7L671.5 551.7L671.0 558.5L673.4 557.9Z" fill="#00bc18" stroke="#00bc18" stroke-width="1"/><path d="M673.4 557.9L671.0 558.5L670.5 565.4L675.3 564.0Z" fill="#03ba00" stroke="#03ba00" stroke-width="1"/><path d="M675.3 564.0L670.5 565.4L670.1 572.2L677.2 570.2Z" fill="#20bd00" stroke="#20bd00" stroke-width="1"/><path d="M677.2 570.2L670.1 572.2L669.6 579.0L679.1 576.4Z" fill="#3dbf00" stroke="#3dbf00" stroke-width="1"/><path d="M671.5 551.7L664.2 553.6L669.6 579.0L679.1 576.4Z" fill="none" stroke="#000" stroke-width="0.7" stroke-opacity="0.85"/><path d="M671.5 551.7L669.6 579.0" stroke="#000" stroke-width="0.95" stroke-dasharray="2.2 1.3" stroke-opacity="0.9"/><path d="M629.0 553.6L621.7 551.7L619.8 557.9L625.3 559.3Z" fill="#00bc18" stroke="#00bc18" stroke-width="1"/><path d="M625.3 559.3L619.8 557.9L617.9 564.0L621.5 565.0Z" fill="#03ba00" stroke="#03ba00" stroke-width="1"/><path d="M621.5 565.0L617.9 564.0L616.0 570.2L617.8 570.7Z" fill="#20bd00" stroke="#20bd00" stroke-width="1"/><path d="M617.8 570.7L616.0 570.2L614.1 576.4L614.1 576.4Z" fill="#3dbf00" stroke="#3dbf00" stroke-width="1"/><path d="M629.0 553.6L629.0 553.6L625.3 559.3L627.6 560.0Z" fill="#00bc18" stroke="#00bc18" stroke-width="1"/><path d="M627.6 560.0L625.3 559.3L621.5 565.0L626.3 566.3Z" fill="#03ba00" stroke="#03ba00" stroke-width="1"/><path d="M626.3 566.3L621.5 565.0L617.8 570.7L625.0 572.7Z" fill="#20bd00" stroke="#20bd00" stroke-width="1"/><path d="M625.0 572.7L617.8 570.7L614.1 576.4L623.6 579.0Z" fill="#3dbf00" stroke="#3dbf00" stroke-width="1"/><path d="M629.0 553.6L621.7 551.7L614.1 576.4L623.6 579.0Z" fill="none" stroke="#000" stroke-width="0.7" stroke-opacity="0.85"/><path d="M629.0 553.6L614.1 576.4" stroke="#000" stroke-width="0.95" stroke-dasharray="2.2 1.3" stroke-opacity="0.9"/><path d="M710.1 633.6L688.9 637.4L688.9 643.8L707.0 640.5Z" fill="#7f5100" stroke="#7f5100" stroke-width="1"/><path d="M707.0 640.5L688.9 643.8L688.9 650.2L704.0 647.5Z" fill="#7f4900" stroke="#7f4900" stroke-width="1"/><path d="M704.0 647.5L688.9 650.2L688.9 656.6L701.0 654.4Z" fill="#7f4100" stroke="#7f4100" stroke-width="1"/><path d="M701.0 654.4L688.9 656.6L688.9 663.0L698.0 661.3Z" fill="#7f3900" stroke="#7f3900" stroke-width="1"/><path d="M698.0 661.3L688.9 663.0L688.9 669.4L695.0 668.3Z" fill="#7f3100" stroke="#7f3100" stroke-width="1"/><path d="M695.0 668.3L688.9 669.4L688.9 675.8L691.9 675.2Z" fill="#7f2900" stroke="#7f2900" stroke-width="1"/><path d="M691.9 675.2L688.9 675.8L688.9 682.2L688.9 682.2Z" fill="#7f2100" stroke="#7f2100" stroke-width="1"/><path d="M710.1 633.6L710.1 633.6L707.0 640.5L710.1 637.3Z" fill="#915c00" stroke="#915c00" stroke-width="1"/><path d="M710.1 637.3L707.0 640.5L704.0 647.5L710.1 641.0Z" fill="#915300" stroke="#915300" stroke-width="1"/><path d="M710.1 641.0L704.0 647.5L701.0 654.4L710.1 644.8Z" fill="#914a00" stroke="#914a00" stroke-width="1"/><path d="M710.1 644.8L701.0 654.4L698.0 661.3L710.1 648.5Z" fill="#914100" stroke="#914100" stroke-width="1"/><path d="M710.1 648.5L698.0 661.3L695.0 668.3L710.1 652.2Z" fill="#913800" stroke="#913800" stroke-width="1"/><path d="M710.1 652.2L695.0 668.3L691.9 675.2L710.1 655.9Z" fill="#912f00" stroke="#912f00" stroke-width="1"/><path d="M710.1 655.9L691.9 675.2L688.9 682.2L710.1 659.7Z" fill="#912600" stroke="#912600" stroke-width="1"/><path d="M710.1 633.6L688.9 637.4L688.9 682.2L710.1 659.7Z" fill="none" stroke="#000" stroke-width="0.7" stroke-opacity="0.85"/><path d="M710.1 633.6L688.9 682.2" stroke="#000" stroke-width="0.95" stroke-dasharray="2.2 1.3" stroke-opacity="0.9"/><path d="M603.3 638.0L583.1 633.6L583.1 637.3L600.4 641.1Z" fill="#654000" stroke="#654000" stroke-width="1"/><path d="M600.4 641.1L583.1 637.3L583.1 641.0L597.5 644.2Z" fill="#653a00" stroke="#653a00" stroke-width="1"/><path d="M597.5 644.2L583.1 641.0L583.1 644.8L594.6 647.3Z" fill="#653400" stroke="#653400" stroke-width="1"/><path d="M594.6 647.3L583.1 644.8L583.1 648.5L591.8 650.4Z" fill="#652e00" stroke="#652e00" stroke-width="1"/><path d="M591.8 650.4L583.1 648.5L583.1 652.2L588.9 653.5Z" fill="#652800" stroke="#652800" stroke-width="1"/><path d="M588.9 653.5L583.1 652.2L583.1 655.9L586.0 656.6Z" fill="#652300" stroke="#652300" stroke-width="1"/><path d="M586.0 656.6L583.1 655.9L583.1 659.7L583.1 659.7Z" fill="#651d00" stroke="#651d00" stroke-width="1"/><path d="M603.3 638.0L603.3 638.0L600.4 641.1L603.3 643.8Z" fill="#744a00" stroke="#744a00" stroke-width="1"/><path d="M603.3 643.8L600.4 641.1L597.5 644.2L603.3 649.6Z" fill="#744300" stroke="#744300" stroke-width="1"/><path d="M603.3 649.6L597.5 644.2L594.6 647.3L603.3 655.4Z" fill="#743c00" stroke="#743c00" stroke-width="1"/><path d="M603.3 655.4L594.6 647.3L591.8 650.4L603.3 661.2Z" fill="#743600" stroke="#743600" stroke-width="1"/><path d="M603.3 661.2L591.8 650.4L588.9 653.5L603.3 667.0Z" fill="#742f00" stroke="#742f00" stroke-width="1"/><path d="M603.3 667.0L588.9 653.5L586.0 656.6L603.3 672.8Z" fill="#742800" stroke="#742800" stroke-width="1"/><path d="M603.3 672.8L586.0 656.6L583.1 659.7L603.3 678.6Z" fill="#742100" stroke="#742100" stroke-width="1"/><path d="M603.3 638.0L583.1 633.6L583.1 659.7L603.3 678.6Z" fill="none" stroke="#000" stroke-width="0.7" stroke-opacity="0.85"/><path d="M603.3 638.0L583.1 659.7" stroke="#000" stroke-width="0.95" stroke-dasharray="2.2 1.3" stroke-opacity="0.9"/><path d="M691.1 603.4L678.1 607.1L680.8 614.7L690.6 611.9Z" fill="#c3bf00" stroke="#c3bf00" stroke-width="1"/><path d="M690.6 611.9L680.8 614.7L683.5 622.2L690.0 620.4Z" fill="#d0b500" stroke="#d0b500" stroke-width="1"/><path d="M690.0 620.4L683.5 622.2L686.2 629.8L689.5 628.9Z" fill="#d0a400" stroke="#d0a400" stroke-width="1"/><path d="M689.5 628.9L686.2 629.8L688.9 637.4L688.9 637.4Z" fill="#d09300" stroke="#d09300" stroke-width="1"/><path d="M691.1 603.4L691.1 603.4L690.6 611.9L695.9 610.9Z" fill="#c6c200" stroke="#c6c200" stroke-width="1"/><path d="M695.9 610.9L690.6 611.9L690.0 620.4L700.6 618.5Z" fill="#d3b700" stroke="#d3b700" stroke-width="1"/><path d="M700.6 618.5L690.0 620.4L689.5 628.9L705.3 626.0Z" fill="#d3a600" stroke="#d3a600" stroke-width="1"/><path d="M705.3 626.0L689.5 628.9L688.9 637.4L710.1 633.6Z" fill="#d39500" stroke="#d39500" stroke-width="1"/><path d="M691.1 603.4L678.1 607.1L688.9 637.4L710.1 633.6Z" fill="none" stroke="#000" stroke-width="0.7" stroke-opacity="0.85"/><path d="M691.1 603.4L688.9 637.4" stroke="#000" stroke-width="0.95" stroke-dasharray="2.2 1.3" stroke-opacity="0.9"/><path d="M615.1 607.1L602.1 603.4L597.3 610.9L607.1 613.7Z" fill="#b2ae00" stroke="#b2ae00" stroke-width="1"/><path d="M607.1 613.7L597.3 610.9L592.6 618.5L599.1 620.4Z" fill="#bea500" stroke="#bea500" stroke-width="1"/><path d="M599.1 620.4L592.6 618.5L587.9 626.0L591.1 627.0Z" fill="#be9500" stroke="#be9500" stroke-width="1"/><path d="M591.1 627.0L587.9 626.0L583.1 633.6L583.1 633.6Z" fill="#be8600" stroke="#be8600" stroke-width="1"/><path d="M615.1 607.1L615.1 607.1L607.1 613.7L612.1 614.8Z" fill="#9c9900" stroke="#9c9900" stroke-width="1"/><path d="M612.1 614.8L607.1 613.7L599.1 620.4L609.2 622.6Z" fill="#a69000" stroke="#a69000" stroke-width="1"/><path d="M609.2 622.6L599.1 620.4L591.1 627.0L606.2 630.3Z" fill="#a68300" stroke="#a68300" stroke-width="1"/><path d="M606.2 630.3L591.1 627.0L583.1 633.6L603.3 638.0Z" fill="#a67600" stroke="#a67600" stroke-width="1"/><path d="M615.1 607.1L602.1 603.4L583.1 633.6L603.3 638.0Z" fill="none" stroke="#000" stroke-width="0.7" stroke-opacity="0.85"/><path d="M615.1 607.1L583.1 633.6" stroke="#000" stroke-width="0.95" stroke-dasharray="2.2 1.3" stroke-opacity="0.9"/><path d="M664.2 553.6L655.7 554.9L656.4 561.3L662.8 560.4Z" fill="#00a515" stroke="#00a515" stroke-width="1"/><path d="M662.8 560.4L656.4 561.3L657.1 567.8L661.4 567.2Z" fill="#03a300" stroke="#03a300" stroke-width="1"/><path d="M661.4 567.2L657.1 567.8L657.8 574.2L659.9 573.9Z" fill="#1ca500" stroke="#1ca500" stroke-width="1"/><path d="M659.9 573.9L657.8 574.2L658.5 580.7L658.5 580.7Z" fill="#35a800" stroke="#35a800" stroke-width="1"/><path d="M664.2 553.6L664.2 553.6L662.8 560.4L665.6 560.0Z" fill="#00a515" stroke="#00a515" stroke-width="1"/><path d="M665.6 560.0L662.8 560.4L661.4 567.2L666.9 566.3Z" fill="#03a300" stroke="#03a300" stroke-width="1"/><path d="M666.9 566.3L661.4 567.2L659.9 573.9L668.2 572.7Z" fill="#1ca500" stroke="#1ca500" stroke-width="1"/><path d="M668.2 572.7L659.9 573.9L658.5 580.7L669.6 579.0Z" fill="#35a800" stroke="#35a800" stroke-width="1"/><path d="M664.2 553.6L655.7 554.9L658.5 580.7L669.6 579.0Z" fill="none" stroke="#000" stroke-width="0.7" stroke-opacity="0.85"/><path d="M664.2 553.6L658.5 580.7" stroke="#000" stroke-width="0.95" stroke-dasharray="2.2 1.3" stroke-opacity="0.9"/><path d="M637.5 554.9L629.0 553.6L627.6 560.0L634.0 560.9Z" fill="#00a515" stroke="#00a515" stroke-width="1"/><path d="M634.0 560.9L627.6 560.0L626.3 566.3L630.5 566.9Z" fill="#03a300" stroke="#03a300" stroke-width="1"/><path d="M630.5 566.9L626.3 566.3L625.0 572.7L627.1 573.0Z" fill="#1ca500" stroke="#1ca500" stroke-width="1"/><path d="M627.1 573.0L625.0 572.7L623.6 579.0L623.6 579.0Z" fill="#35a800" stroke="#35a800" stroke-width="1"/><path d="M637.5 554.9L637.5 554.9L634.0 560.9L636.8 561.3Z" fill="#00a515" stroke="#00a515" stroke-width="1"/><path d="M636.8 561.3L634.0 560.9L630.5 566.9L636.1 567.8Z" fill="#03a300" stroke="#03a300" stroke-width="1"/><path d="M636.1 567.8L630.5 566.9L627.1 573.0L635.4 574.2Z" fill="#1ca500" stroke="#1ca500" stroke-width="1"/><path d="M635.4 574.2L627.1 573.0L623.6 579.0L634.7 580.7Z" fill="#35a800" stroke="#35a800" stroke-width="1"/><path d="M637.5 554.9L629.0 553.6L623.6 579.0L634.7 580.7Z" fill="none" stroke="#000" stroke-width="0.7" stroke-opacity="0.85"/><path d="M637.5 554.9L623.6 579.0" stroke="#000" stroke-width="0.95" stroke-dasharray="2.2 1.3" stroke-opacity="0.9"/><path d="M672.6 480.5L671.7 482.6L673.9 488.0L674.6 486.4Z" fill="#000ee0" stroke="#000ee0" stroke-width="1"/><path d="M674.6 486.4L673.9 488.0L676.2 493.3L676.6 492.3Z" fill="#002ce0" stroke="#002ce0" stroke-width="1"/><path d="M676.6 492.3L676.2 493.3L678.4 498.7L678.6 498.2Z" fill="#004ae0" stroke="#004ae0" stroke-width="1"/><path d="M678.6 498.2L678.4 498.7L680.6 504.0L680.6 504.0Z" fill="#006de0" stroke="#006de0" stroke-width="1"/><path d="M672.6 480.5L672.6 480.5L674.6 486.4L674.9 485.7Z" fill="#000ee0" stroke="#000ee0" stroke-width="1"/><path d="M674.9 485.7L674.6 486.4L676.6 492.3L677.2 490.8Z" fill="#002ce0" stroke="#002ce0" stroke-width="1"/><path d="M677.2 490.8L676.6 492.3L678.6 498.2L679.5 496.0Z" fill="#004ae0" stroke="#004ae0" stroke-width="1"/><path d="M679.5 496.0L678.6 498.2L680.6 504.0L681.8 501.1Z" fill="#006de0" stroke="#006de0" stroke-width="1"/><path d="M672.6 480.5L671.7 482.6L680.6 504.0L681.8 501.1Z" fill="none" stroke="#000" stroke-width="0.7" stroke-opacity="0.85"/><path d="M672.6 480.5L680.6 504.0" stroke="#000" stroke-width="0.95" stroke-dasharray="2.2 1.3" stroke-opacity="0.9"/><path d="M621.5 482.6L620.6 480.5L618.3 485.7L619.0 487.2Z" fill="#000ee0" stroke="#000ee0" stroke-width="1"/><path d="M619.0 487.2L618.3 485.7L616.0 490.8L616.4 491.9Z" fill="#002ce0" stroke="#002ce0" stroke-width="1"/><path d="M616.4 491.9L616.0 490.8L613.7 496.0L613.9 496.5Z" fill="#004ae0" stroke="#004ae0" stroke-width="1"/><path d="M613.9 496.5L613.7 496.0L611.4 501.1L611.4 501.1Z" fill="#006de0" stroke="#006de0" stroke-width="1"/><path d="M621.5 482.6L621.5 482.6L619.0 487.2L619.3 488.0Z" fill="#000ee0" stroke="#000ee0" stroke-width="1"/><path d="M619.3 488.0L619.0 487.2L616.4 491.9L617.0 493.3Z" fill="#002ce0" stroke="#002ce0" stroke-width="1"/><path d="M617.0 493.3L616.4 491.9L613.9 496.5L614.8 498.7Z" fill="#004ae0" stroke="#004ae0" stroke-width="1"/><path d="M614.8 498.7L613.9 496.5L611.4 501.1L612.6 504.0Z" fill="#006de0" stroke="#006de0" stroke-width="1"/><path d="M621.5 482.6L620.6 480.5L611.4 501.1L612.6 504.0Z" fill="none" stroke="#000" stroke-width="0.7" stroke-opacity="0.85"/><path d="M621.5 482.6L611.4 501.1" stroke="#000" stroke-width="0.95" stroke-dasharray="2.2 1.3" stroke-opacity="0.9"/><path d="M677.1 506.8L671.5 509.1L671.5 514.5L676.4 512.4Z" fill="#005786" stroke="#005786" stroke-width="1"/><path d="M676.4 512.4L671.5 514.5L671.5 519.8L675.7 518.0Z" fill="#006b85" stroke="#006b85" stroke-width="1"/><path d="M675.7 518.0L671.5 519.8L671.5 525.1L675.0 523.6Z" fill="#00767c" stroke="#00767c" stroke-width="1"/><path d="M675.0 523.6L671.5 525.1L671.5 530.4L674.3 529.2Z" fill="#008173" stroke="#008173" stroke-width="1"/><path d="M674.3 529.2L671.5 530.4L671.5 535.7L673.6 534.9Z" fill="#008664" stroke="#008664" stroke-width="1"/><path d="M673.6 534.9L671.5 535.7L671.5 541.1L672.9 540.5Z" fill="#00864e" stroke="#00864e" stroke-width="1"/><path d="M672.9 540.5L671.5 541.1L671.5 546.4L672.2 546.1Z" fill="#008638" stroke="#008638" stroke-width="1"/><path d="M672.2 546.1L671.5 546.4L671.5 551.7L671.5 551.7Z" fill="#008524" stroke="#008524" stroke-width="1"/><path d="M677.1 506.8L677.1 506.8L676.4 512.4L677.1 512.1Z" fill="#005786" stroke="#005786" stroke-width="1"/><path d="M677.1 512.1L676.4 512.4L675.7 518.0L677.1 517.4Z" fill="#006b85" stroke="#006b85" stroke-width="1"/><path d="M677.1 517.4L675.7 518.0L675.0 523.6L677.1 522.7Z" fill="#00767c" stroke="#00767c" stroke-width="1"/><path d="M677.1 522.7L675.0 523.6L674.3 529.2L677.1 528.0Z" fill="#008173" stroke="#008173" stroke-width="1"/><path d="M677.1 528.0L674.3 529.2L673.6 534.9L677.1 533.3Z" fill="#008664" stroke="#008664" stroke-width="1"/><path d="M677.1 533.3L673.6 534.9L672.9 540.5L677.1 538.6Z" fill="#00864e" stroke="#00864e" stroke-width="1"/><path d="M677.1 538.6L672.9 540.5L672.2 546.1L677.1 543.9Z" fill="#008638" stroke="#008638" stroke-width="1"/><path d="M677.1 543.9L672.2 546.1L671.5 551.7L677.1 549.2Z" fill="#008524" stroke="#008524" stroke-width="1"/><path d="M677.1 506.8L671.5 509.1L671.5 551.7L677.1 549.2Z" fill="none" stroke="#000" stroke-width="0.7" stroke-opacity="0.85"/><path d="M677.1 506.8L671.5 551.7" stroke="#000" stroke-width="0.95" stroke-dasharray="2.2 1.3" stroke-opacity="0.9"/><path d="M621.7 509.1L616.1 506.8L616.1 512.1L621.0 514.1Z" fill="#005786" stroke="#005786" stroke-width="1"/><path d="M621.0 514.1L616.1 512.1L616.1 517.4L620.3 519.1Z" fill="#006b85" stroke="#006b85" stroke-width="1"/><path d="M620.3 519.1L616.1 517.4L616.1 522.7L619.6 524.1Z" fill="#00767c" stroke="#00767c" stroke-width="1"/><path d="M619.6 524.1L616.1 522.7L616.1 528.0L618.9 529.1Z" fill="#008173" stroke="#008173" stroke-width="1"/><path d="M618.9 529.1L616.1 528.0L616.1 533.3L618.2 534.2Z" fill="#008664" stroke="#008664" stroke-width="1"/><path d="M618.2 534.2L616.1 533.3L616.1 538.6L617.5 539.2Z" fill="#00864e" stroke="#00864e" stroke-width="1"/><path d="M617.5 539.2L616.1 538.6L616.1 543.9L616.8 544.2Z" fill="#008638" stroke="#008638" stroke-width="1"/><path d="M616.8 544.2L616.1 543.9L616.1 549.2L616.1 549.2Z" fill="#008524" stroke="#008524" stroke-width="1"/><path d="M621.7 509.1L621.7 509.1L621.0 514.1L621.7 514.5Z" fill="#005786" stroke="#005786" stroke-width="1"/><path d="M621.7 514.5L621.0 514.1L620.3 519.1L621.7 519.8Z" fill="#006b85" stroke="#006b85" stroke-width="1"/><path d="M621.7 519.8L620.3 519.1L619.6 524.1L621.7 525.1Z" fill="#00767c" stroke="#00767c" stroke-width="1"/><path d="M621.7 525.1L619.6 524.1L618.9 529.1L621.7 530.4Z" fill="#008173" stroke="#008173" stroke-width="1"/><path d="M621.7 530.4L618.9 529.1L618.2 534.2L621.7 535.7Z" fill="#008664" stroke="#008664" stroke-width="1"/><path d="M621.7 535.7L618.2 534.2L617.5 539.2L621.7 541.1Z" fill="#00864e" stroke="#00864e" stroke-width="1"/><path d="M621.7 541.1L617.5 539.2L616.8 544.2L621.7 546.4Z" fill="#008638" stroke="#008638" stroke-width="1"/><path d="M621.7 546.4L616.8 544.2L616.1 549.2L621.7 551.7Z" fill="#008524" stroke="#008524" stroke-width="1"/><path d="M621.7 509.1L616.1 506.8L616.1 549.2L621.7 551.7Z" fill="none" stroke="#000" stroke-width="0.7" stroke-opacity="0.85"/><path d="M621.7 509.1L616.1 549.2" stroke="#000" stroke-width="0.95" stroke-dasharray="2.2 1.3" stroke-opacity="0.9"/><path d="M669.6 579.0L658.5 580.7L659.6 587.9L667.9 586.6Z" fill="#59bf00" stroke="#59bf00" stroke-width="1"/><path d="M667.9 586.6L659.6 587.9L660.7 595.1L666.3 594.2Z" fill="#77bf00" stroke="#77bf00" stroke-width="1"/><path d="M666.3 594.2L660.7 595.1L661.8 602.3L664.6 601.9Z" fill="#94bf00" stroke="#94bf00" stroke-width="1"/><path d="M664.6 601.9L661.8 602.3L662.9 609.5L662.9 609.5Z" fill="#a5b800" stroke="#a5b800" stroke-width="1"/><path d="M669.6 579.0L669.6 579.0L667.9 586.6L671.7 586.0Z" fill="#59bf00" stroke="#59bf00" stroke-width="1"/><path d="M671.7 586.0L667.9 586.6L666.3 594.2L673.9 593.1Z" fill="#77bf00" stroke="#77bf00" stroke-width="1"/><path d="M673.9 593.1L666.3 594.2L664.6 601.9L676.0 600.1Z" fill="#94bf00" stroke="#94bf00" stroke-width="1"/><path d="M676.0 600.1L664.6 601.9L662.9 609.5L678.1 607.1Z" fill="#a5b800" stroke="#a5b800" stroke-width="1"/><path d="M669.6 579.0L658.5 580.7L662.9 609.5L678.1 607.1Z" fill="none" stroke="#000" stroke-width="0.7" stroke-opacity="0.85"/><path d="M669.6 579.0L662.9 609.5" stroke="#000" stroke-width="0.95" stroke-dasharray="2.2 1.3" stroke-opacity="0.9"/><path d="M634.7 580.7L623.6 579.0L621.5 586.0L629.8 587.3Z" fill="#59bf00" stroke="#59bf00" stroke-width="1"/><path d="M629.8 587.3L621.5 586.0L619.4 593.1L624.9 593.9Z" fill="#77bf00" stroke="#77bf00" stroke-width="1"/><path d="M624.9 593.9L619.4 593.1L617.2 600.1L620.0 600.5Z" fill="#94bf00" stroke="#94bf00" stroke-width="1"/><path d="M620.0 600.5L617.2 600.1L615.1 607.1L615.1 607.1Z" fill="#a5b800" stroke="#a5b800" stroke-width="1"/><path d="M634.7 580.7L634.7 580.7L629.8 587.3L633.6 587.9Z" fill="#59bf00" stroke="#59bf00" stroke-width="1"/><path d="M633.6 587.9L629.8 587.3L624.9 593.9L632.5 595.1Z" fill="#77bf00" stroke="#77bf00" stroke-width="1"/><path d="M632.5 595.1L624.9 593.9L620.0 600.5L631.4 602.3Z" fill="#94bf00" stroke="#94bf00" stroke-width="1"/><path d="M631.4 602.3L620.0 600.5L615.1 607.1L630.3 609.5Z" fill="#a5b800" stroke="#a5b800" stroke-width="1"/><path d="M634.7 580.7L623.6 579.0L615.1 607.1L630.3 609.5Z" fill="none" stroke="#000" stroke-width="0.7" stroke-opacity="0.85"/><path d="M634.7 580.7L615.1 607.1" stroke="#000" stroke-width="0.95" stroke-dasharray="2.2 1.3" stroke-opacity="0.9"/><path d="M710.1 659.7L688.9 682.2L696.5 695.6L712.4 678.8Z" fill="#bf2300" stroke="#bf2300" stroke-width="1"/><path d="M712.4 678.8L696.5 695.6L704.2 709.1L714.7 697.9Z" fill="#be1102" stroke="#be1102" stroke-width="1"/><path d="M714.7 697.9L704.2 709.1L711.8 722.6L717.1 717.0Z" fill="#b70613" stroke="#b70613" stroke-width="1"/><path d="M717.1 717.0L711.8 722.6L719.4 736.1L719.4 736.1Z" fill="#b0002c" stroke="#b0002c" stroke-width="1"/><path d="M710.1 659.7L710.1 659.7L712.4 678.8L720.6 675.2Z" fill="#d12600" stroke="#d12600" stroke-width="1"/><path d="M720.6 675.2L712.4 678.8L714.7 697.9L731.1 690.7Z" fill="#d01202" stroke="#d01202" stroke-width="1"/><path d="M731.1 690.7L714.7 697.9L717.1 717.0L741.7 706.2Z" fill="#c90615" stroke="#c90615" stroke-width="1"/><path d="M741.7 706.2L717.1 717.0L719.4 736.1L752.2 721.7Z" fill="#c10031" stroke="#c10031" stroke-width="1"/><path d="M710.1 659.7L688.9 682.2L719.4 736.1L752.2 721.7Z" fill="none" stroke="#000" stroke-width="0.7" stroke-opacity="0.85"/><path d="M710.1 659.7L719.4 736.1" stroke="#000" stroke-width="0.75" stroke-dasharray="2.2 1.3" stroke-opacity="0.9"/><path d="M655.7 554.9L646.6 555.3L646.6 561.8L653.4 561.5Z" fill="#008b12" stroke="#008b12" stroke-width="1"/><path d="M653.4 561.5L646.6 561.8L646.6 568.3L651.2 568.1Z" fill="#028900" stroke="#028900" stroke-width="1"/><path d="M651.2 568.1L646.6 568.3L646.6 574.8L648.9 574.7Z" fill="#188b00" stroke="#188b00" stroke-width="1"/><path d="M648.9 574.7L646.6 574.8L646.6 581.2L646.6 581.2Z" fill="#2d8e00" stroke="#2d8e00" stroke-width="1"/><path d="M655.7 554.9L655.7 554.9L653.4 561.5L656.4 561.3Z" fill="#008b12" stroke="#008b12" stroke-width="1"/><path d="M656.4 561.3L653.4 561.5L651.2 568.1L657.1 567.8Z" fill="#028900" stroke="#028900" stroke-width="1"/><path d="M657.1 567.8L651.2 568.1L648.9 574.7L657.8 574.2Z" fill="#188b00" stroke="#188b00" stroke-width="1"/><path d="M657.8 574.2L648.9 574.7L646.6 581.2L658.5 580.7Z" fill="#2d8e00" stroke="#2d8e00" stroke-width="1"/><path d="M655.7 554.9L646.6 555.3L646.6 581.2L658.5 580.7Z" fill="none" stroke="#000" stroke-width="0.7" stroke-opacity="0.85"/><path d="M655.7 554.9L646.6 581.2" stroke="#000" stroke-width="0.95" stroke-dasharray="2.2 1.3" stroke-opacity="0.9"/><path d="M646.6 555.3L637.5 554.9L636.8 561.3L643.6 561.6Z" fill="#008b12" stroke="#008b12" stroke-width="1"/><path d="M643.6 561.6L636.8 561.3L636.1 567.8L640.6 568.0Z" fill="#028900" stroke="#028900" stroke-width="1"/><path d="M640.6 568.0L636.1 567.8L635.4 574.2L637.7 574.3Z" fill="#188b00" stroke="#188b00" stroke-width="1"/><path d="M637.7 574.3L635.4 574.2L634.7 580.7L634.7 580.7Z" fill="#2d8e00" stroke="#2d8e00" stroke-width="1"/><path d="M646.6 555.3L646.6 555.3L643.6 561.6L646.6 561.8Z" fill="#008b12" stroke="#008b12" stroke-width="1"/><path d="M646.6 561.8L643.6 561.6L640.6 568.0L646.6 568.3Z" fill="#028900" stroke="#028900" stroke-width="1"/><path d="M646.6 568.3L640.6 568.0L637.7 574.3L646.6 574.8Z" fill="#188b00" stroke="#188b00" stroke-width="1"/><path d="M646.6 574.8L637.7 574.3L634.7 580.7L646.6 581.2Z" fill="#2d8e00" stroke="#2d8e00" stroke-width="1"/><path d="M646.6 555.3L637.5 554.9L634.7 580.7L646.6 581.2Z" fill="none" stroke="#000" stroke-width="0.7" stroke-opacity="0.85"/><path d="M646.6 555.3L634.7 580.7" stroke="#000" stroke-width="0.95" stroke-dasharray="2.2 1.3" stroke-opacity="0.9"/><path d="M624.7 640.6L603.3 638.0L603.3 643.8L621.6 646.1Z" fill="#724700" stroke="#724700" stroke-width="1"/><path d="M621.6 646.1L603.3 643.8L603.3 649.6L618.6 651.5Z" fill="#723e00" stroke="#723e00" stroke-width="1"/><path d="M618.6 651.5L603.3 649.6L603.3 655.4L615.5 656.9Z" fill="#723500" stroke="#723500" stroke-width="1"/><path d="M615.5 656.9L603.3 655.4L603.3 661.2L612.5 662.3Z" fill="#722c00" stroke="#722c00" stroke-width="1"/><path d="M612.5 662.3L603.3 661.2L603.3 667.0L609.4 667.8Z" fill="#722300" stroke="#722300" stroke-width="1"/><path d="M609.4 667.8L603.3 667.0L603.3 672.8L606.3 673.2Z" fill="#721a00" stroke="#721a00" stroke-width="1"/><path d="M606.3 673.2L603.3 672.8L603.3 678.6L603.3 678.6Z" fill="#721200" stroke="#721200" stroke-width="1"/><path d="M624.7 640.6L624.7 640.6L621.6 646.1L624.7 647.9Z" fill="#4e3100" stroke="#4e3100" stroke-width="1"/><path d="M624.7 647.9L621.6 646.1L618.6 651.5L624.7 655.1Z" fill="#4e2b00" stroke="#4e2b00" stroke-width="1"/><path d="M624.7 655.1L618.6 651.5L615.5 656.9L624.7 662.4Z" fill="#4e2500" stroke="#4e2500" stroke-width="1"/><path d="M624.7 662.4L615.5 656.9L612.5 662.3L624.7 669.6Z" fill="#4e1e00" stroke="#4e1e00" stroke-width="1"/><path d="M624.7 669.6L612.5 662.3L609.4 667.8L624.7 676.9Z" fill="#4e1800" stroke="#4e1800" stroke-width="1"/><path d="M624.7 676.9L609.4 667.8L606.3 673.2L624.7 684.1Z" fill="#4e1200" stroke="#4e1200" stroke-width="1"/><path d="M624.7 684.1L606.3 673.2L603.3 678.6L624.7 691.4Z" fill="#4e0c00" stroke="#4e0c00" stroke-width="1"/><path d="M624.7 640.6L603.3 638.0L603.3 678.6L624.7 691.4Z" fill="none" stroke="#000" stroke-width="0.7" stroke-opacity="0.85"/><path d="M624.7 640.6L603.3 678.6" stroke="#000" stroke-width="0.95" stroke-dasharray="2.2 1.3" stroke-opacity="0.9"/><path d="M688.9 637.4L669.0 641.4L669.0 648.0L686.1 644.6Z" fill="#6b4300" stroke="#6b4300" stroke-width="1"/><path d="M686.1 644.6L669.0 648.0L669.0 654.7L683.2 651.8Z" fill="#6b3b00" stroke="#6b3b00" stroke-width="1"/><path d="M683.2 651.8L669.0 654.7L669.0 661.3L680.4 659.0Z" fill="#6b3200" stroke="#6b3200" stroke-width="1"/><path d="M680.4 659.0L669.0 661.3L669.0 668.0L677.5 666.2Z" fill="#6b2900" stroke="#6b2900" stroke-width="1"/><path d="M677.5 666.2L669.0 668.0L669.0 674.6L674.7 673.5Z" fill="#6b2100" stroke="#6b2100" stroke-width="1"/><path d="M674.7 673.5L669.0 674.6L669.0 681.3L671.9 680.7Z" fill="#6b1900" stroke="#6b1900" stroke-width="1"/><path d="M671.9 680.7L669.0 681.3L669.0 687.9L669.0 687.9Z" fill="#6b1100" stroke="#6b1100" stroke-width="1"/><path d="M688.9 637.4L688.9 637.4L686.1 644.6L688.9 643.8Z" fill="#6d4400" stroke="#6d4400" stroke-width="1"/><path d="M688.9 643.8L686.1 644.6L683.2 651.8L688.9 650.2Z" fill="#6d3c00" stroke="#6d3c00" stroke-width="1"/><path d="M688.9 650.2L683.2 651.8L680.4 659.0L688.9 656.6Z" fill="#6d3300" stroke="#6d3300" stroke-width="1"/><path d="M688.9 656.6L680.4 659.0L677.5 666.2L688.9 663.0Z" fill="#6d2a00" stroke="#6d2a00" stroke-width="1"/><path d="M688.9 663.0L677.5 666.2L674.7 673.5L688.9 669.4Z" fill="#6d2100" stroke="#6d2100" stroke-width="1"/><path d="M688.9 669.4L674.7 673.5L671.9 680.7L688.9 675.8Z" fill="#6d1900" stroke="#6d1900" stroke-width="1"/><path d="M688.9 675.8L671.9 680.7L669.0 687.9L688.9 682.2Z" fill="#6d1100" stroke="#6d1100" stroke-width="1"/><path d="M688.9 637.4L669.0 641.4L669.0 687.9L688.9 682.2Z" fill="none" stroke="#000" stroke-width="0.7" stroke-opacity="0.85"/><path d="M688.9 637.4L669.0 687.9" stroke="#000" stroke-width="0.95" stroke-dasharray="2.2 1.3" stroke-opacity="0.9"/><path d="M603.3 678.6L583.1 659.7L572.6 675.2L587.7 689.4Z" fill="#8d1d00" stroke="#8d1d00" stroke-width="1"/><path d="M587.7 689.4L572.6 675.2L562.1 690.7L572.1 700.1Z" fill="#8d0e00" stroke="#8d0e00" stroke-width="1"/><path d="M572.1 700.1L562.1 690.7L551.5 706.2L556.6 710.9Z" fill="#88060c" stroke="#88060c" stroke-width="1"/><path d="M556.6 710.9L551.5 706.2L541.0 721.7L541.0 721.7Z" fill="#83001d" stroke="#83001d" stroke-width="1"/><path d="M603.3 678.6L603.3 678.6L587.7 689.4L595.2 692.8Z" fill="#bc2700" stroke="#bc2700" stroke-width="1"/><path d="M595.2 692.8L587.7 689.4L572.1 700.1L587.2 707.0Z" fill="#bc1300" stroke="#bc1300" stroke-width="1"/><path d="M587.2 707.0L572.1 700.1L556.6 710.9L579.1 721.2Z" fill="#b60810" stroke="#b60810" stroke-width="1"/><path d="M579.1 721.2L556.6 710.9L541.0 721.7L571.1 735.4Z" fill="#af0027" stroke="#af0027" stroke-width="1"/><path d="M603.3 678.6L583.1 659.7L541.0 721.7L571.1 735.4Z" fill="none" stroke="#000" stroke-width="0.7" stroke-opacity="0.85"/><path d="M603.3 678.6L541.0 721.7" stroke="#000" stroke-width="0.75" stroke-dasharray="2.2 1.3" stroke-opacity="0.9"/><path d="M541.0 721.7L537.8 711.1L521.1 719.2L523.7 727.6Z" fill="#ce005a" stroke="#ce005a" stroke-width="1"/><path d="M523.7 727.6L521.1 719.2L504.4 727.2L506.3 733.6Z" fill="#c9006e" stroke="#c9006e" stroke-width="1"/><path d="M506.3 733.6L504.4 727.2L487.7 735.3L489.0 739.5Z" fill="#c40083" stroke="#c40083" stroke-width="1"/><path d="M489.0 739.5L487.7 735.3L471.0 743.3L471.7 745.4Z" fill="#be0098" stroke="#be0098" stroke-width="1"/><path d="M471.7 745.4L471.0 743.3L454.3 751.4L454.3 751.4Z" fill="#b900ac" stroke="#b900ac" stroke-width="1"/><path d="M541.0 721.7L541.0 721.7L523.7 727.6L530.7 731.6Z" fill="#d6005d" stroke="#d6005d" stroke-width="1"/><path d="M530.7 731.6L523.7 727.6L506.3 733.6L520.4 741.6Z" fill="#d10072" stroke="#d10072" stroke-width="1"/><path d="M520.4 741.6L506.3 733.6L489.0 739.5L510.2 751.5Z" fill="#cb0088" stroke="#cb0088" stroke-width="1"/><path d="M510.2 751.5L489.0 739.5L471.7 745.4L499.9 761.5Z" fill="#c6009d" stroke="#c6009d" stroke-width="1"/><path d="M499.9 761.5L471.7 745.4L454.3 751.4L489.6 771.4Z" fill="#c000b3" stroke="#c000b3" stroke-width="1"/><path d="M541.0 721.7L537.8 711.1L454.3 751.4L489.6 771.4Z" fill="none" stroke="#000" stroke-width="0.7" stroke-opacity="0.85"/><path d="M541.0 721.7L454.3 751.4" stroke="#000" stroke-width="0.75" stroke-dasharray="2.2 1.3" stroke-opacity="0.9"/><path d="M658.5 580.7L646.6 581.2L646.6 588.5L655.5 588.1Z" fill="#4ca300" stroke="#4ca300" stroke-width="1"/><path d="M655.5 588.1L646.6 588.5L646.6 595.8L652.6 595.5Z" fill="#65a300" stroke="#65a300" stroke-width="1"/><path d="M652.6 595.5L646.6 595.8L646.6 603.0L649.6 602.9Z" fill="#7ea300" stroke="#7ea300" stroke-width="1"/><path d="M649.6 602.9L646.6 603.0L646.6 610.3L646.6 610.3Z" fill="#8d9d00" stroke="#8d9d00" stroke-width="1"/><path d="M658.5 580.7L658.5 580.7L655.5 588.1L659.6 587.9Z" fill="#4ca300" stroke="#4ca300" stroke-width="1"/><path d="M659.6 587.9L655.5 588.1L652.6 595.5L660.7 595.1Z" fill="#65a300" stroke="#65a300" stroke-width="1"/><path d="M660.7 595.1L652.6 595.5L649.6 602.9L661.8 602.3Z" fill="#7ea300" stroke="#7ea300" stroke-width="1"/><path d="M661.8 602.3L649.6 602.9L646.6 610.3L662.9 609.5Z" fill="#8d9d00" stroke="#8d9d00" stroke-width="1"/><path d="M658.5 580.7L646.6 581.2L646.6 610.3L662.9 609.5Z" fill="none" stroke="#000" stroke-width="0.7" stroke-opacity="0.85"/><path d="M658.5 580.7L646.6 610.3" stroke="#000" stroke-width="0.95" stroke-dasharray="2.2 1.3" stroke-opacity="0.9"/><path d="M646.6 581.2L634.7 580.7L633.6 587.9L642.5 588.3Z" fill="#4ca300" stroke="#4ca300" stroke-width="1"/><path d="M642.5 588.3L633.6 587.9L632.5 595.1L638.4 595.4Z" fill="#65a300" stroke="#65a300" stroke-width="1"/><path d="M638.4 595.4L632.5 595.1L631.4 602.3L634.4 602.4Z" fill="#7ea300" stroke="#7ea300" stroke-width="1"/><path d="M634.4 602.4L631.4 602.3L630.3 609.5L630.3 609.5Z" fill="#8d9d00" stroke="#8d9d00" stroke-width="1"/><path d="M646.6 581.2L646.6 581.2L642.5 588.3L646.6 588.5Z" fill="#4ca300" stroke="#4ca300" stroke-width="1"/><path d="M646.6 588.5L642.5 588.3L638.4 595.4L646.6 595.8Z" fill="#65a300" stroke="#65a300" stroke-width="1"/><path d="M646.6 595.8L638.4 595.4L634.4 602.4L646.6 603.0Z" fill="#7ea300" stroke="#7ea300" stroke-width="1"/><path d="M646.6 603.0L634.4 602.4L630.3 609.5L646.6 610.3Z" fill="#8d9d00" stroke="#8d9d00" stroke-width="1"/><path d="M646.6 581.2L634.7 580.7L630.3 609.5L646.6 610.3Z" fill="none" stroke="#000" stroke-width="0.7" stroke-opacity="0.85"/><path d="M646.6 581.2L630.3 609.5" stroke="#000" stroke-width="0.95" stroke-dasharray="2.2 1.3" stroke-opacity="0.9"/><path d="M760.1 709.7L752.2 721.7L762.5 731.6L768.8 722.0Z" fill="#c1004f" stroke="#c1004f" stroke-width="1"/><path d="M768.8 722.0L762.5 731.6L772.8 741.6L777.5 734.4Z" fill="#bc0063" stroke="#bc0063" stroke-width="1"/><path d="M777.5 734.4L772.8 741.6L783.0 751.5L786.2 746.7Z" fill="#b70077" stroke="#b70077" stroke-width="1"/><path d="M786.2 746.7L783.0 751.5L793.3 761.5L794.9 759.1Z" fill="#b1008b" stroke="#b1008b" stroke-width="1"/><path d="M794.9 759.1L793.3 761.5L803.6 771.4L803.6 771.4Z" fill="#ac00a0" stroke="#ac00a0" stroke-width="1"/><path d="M760.1 709.7L760.1 709.7L768.8 722.0L775.8 718.0Z" fill="#cd0054" stroke="#cd0054" stroke-width="1"/><path d="M775.8 718.0L768.8 722.0L777.5 734.4L791.6 726.4Z" fill="#c80069" stroke="#c80069" stroke-width="1"/><path d="M791.6 726.4L777.5 734.4L786.2 746.7L807.3 734.7Z" fill="#c2007f" stroke="#c2007f" stroke-width="1"/><path d="M807.3 734.7L786.2 746.7L794.9 759.1L823.1 743.0Z" fill="#bd0094" stroke="#bd0094" stroke-width="1"/><path d="M823.1 743.0L794.9 759.1L803.6 771.4L838.9 751.4Z" fill="#b700aa" stroke="#b700aa" stroke-width="1"/><path d="M760.1 709.7L752.2 721.7L803.6 771.4L838.9 751.4Z" fill="none" stroke="#000" stroke-width="0.7" stroke-opacity="0.85"/><path d="M760.1 709.7L803.6 771.4" stroke="#000" stroke-width="0.75" stroke-dasharray="2.2 1.3" stroke-opacity="0.9"/><path d="M629.0 510.9L621.7 509.1L621.7 514.5L628.1 516.0Z" fill="#004f7a" stroke="#004f7a" stroke-width="1"/><path d="M628.1 516.0L621.7 514.5L621.7 519.8L627.2 521.1Z" fill="#006279" stroke="#006279" stroke-width="1"/><path d="M627.2 521.1L621.7 519.8L621.7 525.1L626.3 526.2Z" fill="#006b71" stroke="#006b71" stroke-width="1"/><path d="M626.3 526.2L621.7 525.1L621.7 530.4L625.4 531.3Z" fill="#007569" stroke="#007569" stroke-width="1"/><path d="M625.4 531.3L621.7 530.4L621.7 535.7L624.4 536.4Z" fill="#007a5b" stroke="#007a5b" stroke-width="1"/><path d="M624.4 536.4L621.7 535.7L621.7 541.1L623.5 541.5Z" fill="#007a47" stroke="#007a47" stroke-width="1"/><path d="M623.5 541.5L621.7 541.1L621.7 546.4L622.6 546.6Z" fill="#007a33" stroke="#007a33" stroke-width="1"/><path d="M622.6 546.6L621.7 546.4L621.7 551.7L621.7 551.7Z" fill="#007921" stroke="#007921" stroke-width="1"/><path d="M629.0 510.9L629.0 510.9L628.1 516.0L629.0 516.3Z" fill="#004f7a" stroke="#004f7a" stroke-width="1"/><path d="M629.0 516.3L628.1 516.0L627.2 521.1L629.0 521.6Z" fill="#006279" stroke="#006279" stroke-width="1"/><path d="M629.0 521.6L627.2 521.1L626.3 526.2L629.0 527.0Z" fill="#006b71" stroke="#006b71" stroke-width="1"/><path d="M629.0 527.0L626.3 526.2L625.4 531.3L629.0 532.3Z" fill="#007569" stroke="#007569" stroke-width="1"/><path d="M629.0 532.3L625.4 531.3L624.4 536.4L629.0 537.6Z" fill="#007a5b" stroke="#007a5b" stroke-width="1"/><path d="M629.0 537.6L624.4 536.4L623.5 541.5L629.0 543.0Z" fill="#007a47" stroke="#007a47" stroke-width="1"/><path d="M629.0 543.0L623.5 541.5L622.6 546.6L629.0 548.3Z" fill="#007a33" stroke="#007a33" stroke-width="1"/><path d="M629.0 548.3L622.6 546.6L621.7 551.7L629.0 553.6Z" fill="#007921" stroke="#007921" stroke-width="1"/><path d="M629.0 510.9L621.7 509.1L621.7 551.7L629.0 553.6Z" fill="none" stroke="#000" stroke-width="0.7" stroke-opacity="0.85"/><path d="M629.0 510.9L621.7 551.7" stroke="#000" stroke-width="0.95" stroke-dasharray="2.2 1.3" stroke-opacity="0.9"/><path d="M671.5 509.1L664.2 510.9L664.2 516.3L670.6 514.7Z" fill="#004f7a" stroke="#004f7a" stroke-width="1"/><path d="M670.6 514.7L664.2 516.3L664.2 521.6L669.7 520.3Z" fill="#006279" stroke="#006279" stroke-width="1"/><path d="M669.7 520.3L664.2 521.6L664.2 527.0L668.8 525.8Z" fill="#006b71" stroke="#006b71" stroke-width="1"/><path d="M668.8 525.8L664.2 527.0L664.2 532.3L667.8 531.4Z" fill="#007569" stroke="#007569" stroke-width="1"/><path d="M667.8 531.4L664.2 532.3L664.2 537.6L666.9 537.0Z" fill="#007a5b" stroke="#007a5b" stroke-width="1"/><path d="M666.9 537.0L664.2 537.6L664.2 543.0L666.0 542.5Z" fill="#007a47" stroke="#007a47" stroke-width="1"/><path d="M666.0 542.5L664.2 543.0L664.2 548.3L665.1 548.1Z" fill="#007a33" stroke="#007a33" stroke-width="1"/><path d="M665.1 548.1L664.2 548.3L664.2 553.6L664.2 553.6Z" fill="#007921" stroke="#007921" stroke-width="1"/><path d="M671.5 509.1L671.5 509.1L670.6 514.7L671.5 514.5Z" fill="#004f7a" stroke="#004f7a" stroke-width="1"/><path d="M671.5 514.5L670.6 514.7L669.7 520.3L671.5 519.8Z" fill="#006279" stroke="#006279" stroke-width="1"/><path d="M671.5 519.8L669.7 520.3L668.8 525.8L671.5 525.1Z" fill="#006b71" stroke="#006b71" stroke-width="1"/><path d="M671.5 525.1L668.8 525.8L667.8 531.4L671.5 530.4Z" fill="#007569" stroke="#007569" stroke-width="1"/><path d="M671.5 530.4L667.8 531.4L666.9 537.0L671.5 535.7Z" fill="#007a5b" stroke="#007a5b" stroke-width="1"/><path d="M671.5 535.7L666.9 537.0L666.0 542.5L671.5 541.1Z" fill="#007a47" stroke="#007a47" stroke-width="1"/><path d="M671.5 541.1L666.0 542.5L665.1 548.1L671.5 546.4Z" fill="#007a33" stroke="#007a33" stroke-width="1"/><path d="M671.5 546.4L665.1 548.1L664.2 553.6L671.5 551.7Z" fill="#007921" stroke="#007921" stroke-width="1"/><path d="M671.5 509.1L664.2 510.9L664.2 553.6L671.5 551.7Z" fill="none" stroke="#000" stroke-width="0.7" stroke-opacity="0.85"/><path d="M671.5 509.1L664.2 553.6" stroke="#000" stroke-width="0.95" stroke-dasharray="2.2 1.3" stroke-opacity="0.9"/><path d="M671.7 482.6L669.1 484.6L671.1 490.1L673.1 488.7Z" fill="#000ed9" stroke="#000ed9" stroke-width="1"/><path d="M673.1 488.7L671.1 490.1L673.1 495.7L674.4 494.7Z" fill="#002bd9" stroke="#002bd9" stroke-width="1"/><path d="M674.4 494.7L673.1 495.7L675.1 501.2L675.7 500.7Z" fill="#0047d9" stroke="#0047d9" stroke-width="1"/><path d="M675.7 500.7L675.1 501.2L677.1 506.8L677.1 506.8Z" fill="#006ad9" stroke="#006ad9" stroke-width="1"/><path d="M671.7 482.6L671.7 482.6L673.1 488.7L673.9 488.0Z" fill="#000ed9" stroke="#000ed9" stroke-width="1"/><path d="M673.9 488.0L673.1 488.7L674.4 494.7L676.2 493.3Z" fill="#002bd9" stroke="#002bd9" stroke-width="1"/><path d="M676.2 493.3L674.4 494.7L675.7 500.7L678.4 498.7Z" fill="#0047d9" stroke="#0047d9" stroke-width="1"/><path d="M678.4 498.7L675.7 500.7L677.1 506.8L680.6 504.0Z" fill="#006ad9" stroke="#006ad9" stroke-width="1"/><path d="M671.7 482.6L669.1 484.6L677.1 506.8L680.6 504.0Z" fill="none" stroke="#000" stroke-width="0.7" stroke-opacity="0.85"/><path d="M671.7 482.6L677.1 506.8" stroke="#000" stroke-width="0.95" stroke-dasharray="2.2 1.3" stroke-opacity="0.9"/><path d="M624.1 484.6L621.5 482.6L619.3 488.0L621.2 489.4Z" fill="#000ed9" stroke="#000ed9" stroke-width="1"/><path d="M621.2 489.4L619.3 488.0L617.0 493.3L618.3 494.3Z" fill="#002bd9" stroke="#002bd9" stroke-width="1"/><path d="M618.3 494.3L617.0 493.3L614.8 498.7L615.5 499.2Z" fill="#0047d9" stroke="#0047d9" stroke-width="1"/><path d="M615.5 499.2L614.8 498.7L612.6 504.0L612.6 504.0Z" fill="#006ad9" stroke="#006ad9" stroke-width="1"/><path d="M624.1 484.6L624.1 484.6L621.2 489.4L622.1 490.1Z" fill="#000ed9" stroke="#000ed9" stroke-width="1"/><path d="M622.1 490.1L621.2 489.4L618.3 494.3L620.1 495.7Z" fill="#002bd9" stroke="#002bd9" stroke-width="1"/><path d="M620.1 495.7L618.3 494.3L615.5 499.2L618.1 501.2Z" fill="#0047d9" stroke="#0047d9" stroke-width="1"/><path d="M618.1 501.2L615.5 499.2L612.6 504.0L616.1 506.8Z" fill="#006ad9" stroke="#006ad9" stroke-width="1"/><path d="M624.1 484.6L621.5 482.6L612.6 504.0L616.1 506.8Z" fill="none" stroke="#000" stroke-width="0.7" stroke-opacity="0.85"/><path d="M624.1 484.6L612.6 504.0" stroke="#000" stroke-width="0.95" stroke-dasharray="2.2 1.3" stroke-opacity="0.9"/><path d="M630.3 609.5L615.1 607.1L612.1 614.8L623.5 616.6Z" fill="#a5a200" stroke="#a5a200" stroke-width="1"/><path d="M623.5 616.6L612.1 614.8L609.2 622.6L616.8 623.8Z" fill="#b09900" stroke="#b09900" stroke-width="1"/><path d="M616.8 623.8L609.2 622.6L606.2 630.3L610.0 630.9Z" fill="#b08b00" stroke="#b08b00" stroke-width="1"/><path d="M610.0 630.9L606.2 630.3L603.3 638.0L603.3 638.0Z" fill="#b07c00" stroke="#b07c00" stroke-width="1"/><path d="M630.3 609.5L630.3 609.5L623.5 616.6L628.9 617.3Z" fill="#747200" stroke="#747200" stroke-width="1"/><path d="M628.9 617.3L623.5 616.6L616.8 623.8L627.5 625.0Z" fill="#7c6c00" stroke="#7c6c00" stroke-width="1"/><path d="M627.5 625.0L616.8 623.8L610.0 630.9L626.1 632.8Z" fill="#7c6200" stroke="#7c6200" stroke-width="1"/><path d="M626.1 632.8L610.0 630.9L603.3 638.0L624.7 640.6Z" fill="#7c5700" stroke="#7c5700" stroke-width="1"/><path d="M630.3 609.5L615.1 607.1L603.3 638.0L624.7 640.6Z" fill="none" stroke="#000" stroke-width="0.7" stroke-opacity="0.85"/><path d="M630.3 609.5L603.3 638.0" stroke="#000" stroke-width="0.95" stroke-dasharray="2.2 1.3" stroke-opacity="0.9"/><path d="M678.1 607.1L662.9 609.5L664.4 617.4L675.8 615.7Z" fill="#868300" stroke="#868300" stroke-width="1"/><path d="M675.8 615.7L664.4 617.4L666.0 625.4L673.6 624.2Z" fill="#8f7c00" stroke="#8f7c00" stroke-width="1"/><path d="M673.6 624.2L666.0 625.4L667.5 633.4L671.3 632.8Z" fill="#8f7000" stroke="#8f7000" stroke-width="1"/><path d="M671.3 632.8L667.5 633.4L669.0 641.4L669.0 641.4Z" fill="#8f6500" stroke="#8f6500" stroke-width="1"/><path d="M678.1 607.1L678.1 607.1L675.8 615.7L680.8 614.7Z" fill="#9a9600" stroke="#9a9600" stroke-width="1"/><path d="M680.8 614.7L675.8 615.7L673.6 624.2L683.5 622.2Z" fill="#a48e00" stroke="#a48e00" stroke-width="1"/><path d="M683.5 622.2L673.6 624.2L671.3 632.8L686.2 629.8Z" fill="#a48100" stroke="#a48100" stroke-width="1"/><path d="M686.2 629.8L671.3 632.8L669.0 641.4L688.9 637.4Z" fill="#a47400" stroke="#a47400" stroke-width="1"/><path d="M678.1 607.1L662.9 609.5L669.0 641.4L688.9 637.4Z" fill="none" stroke="#000" stroke-width="0.7" stroke-opacity="0.85"/><path d="M678.1 607.1L669.0 641.4" stroke="#000" stroke-width="0.95" stroke-dasharray="2.2 1.3" stroke-opacity="0.9"/><path d="M646.6 643.7L624.7 640.6L624.7 647.9L643.5 650.5Z" fill="#6b4300" stroke="#6b4300" stroke-width="1"/><path d="M643.5 650.5L624.7 647.9L624.7 655.1L640.3 657.3Z" fill="#6b3a00" stroke="#6b3a00" stroke-width="1"/><path d="M640.3 657.3L624.7 655.1L624.7 662.4L637.2 664.1Z" fill="#6b3200" stroke="#6b3200" stroke-width="1"/><path d="M637.2 664.1L624.7 662.4L624.7 669.6L634.1 671.0Z" fill="#6b2900" stroke="#6b2900" stroke-width="1"/><path d="M634.1 671.0L624.7 669.6L624.7 676.9L631.0 677.8Z" fill="#6b2000" stroke="#6b2000" stroke-width="1"/><path d="M631.0 677.8L624.7 676.9L624.7 684.1L627.8 684.6Z" fill="#6b1800" stroke="#6b1800" stroke-width="1"/><path d="M627.8 684.6L624.7 684.1L624.7 691.4L624.7 691.4Z" fill="#6b1000" stroke="#6b1000" stroke-width="1"/><path d="M646.6 643.7L646.6 643.7L643.5 650.5L646.6 649.7Z" fill="#583700" stroke="#583700" stroke-width="1"/><path d="M646.6 649.7L643.5 650.5L640.3 657.3L646.6 655.8Z" fill="#583000" stroke="#583000" stroke-width="1"/><path d="M646.6 655.8L640.3 657.3L637.2 664.1L646.6 661.8Z" fill="#582900" stroke="#582900" stroke-width="1"/><path d="M646.6 661.8L637.2 664.1L634.1 671.0L646.6 667.8Z" fill="#582200" stroke="#582200" stroke-width="1"/><path d="M646.6 667.8L634.1 671.0L631.0 677.8L646.6 673.8Z" fill="#581b00" stroke="#581b00" stroke-width="1"/><path d="M646.6 673.8L631.0 677.8L627.8 684.6L646.6 679.8Z" fill="#581400" stroke="#581400" stroke-width="1"/><path d="M646.6 679.8L627.8 684.6L624.7 691.4L646.6 685.9Z" fill="#580d00" stroke="#580d00" stroke-width="1"/><path d="M646.6 643.7L624.7 640.6L624.7 691.4L646.6 685.9Z" fill="none" stroke="#000" stroke-width="0.7" stroke-opacity="0.85"/><path d="M646.6 643.7L624.7 691.4" stroke="#000" stroke-width="0.95" stroke-dasharray="2.2 1.3" stroke-opacity="0.9"/><path d="M669.0 641.4L646.6 643.7L646.6 649.7L665.8 647.7Z" fill="#452b00" stroke="#452b00" stroke-width="1"/><path d="M665.8 647.7L646.6 649.7L646.6 655.8L662.6 654.1Z" fill="#452600" stroke="#452600" stroke-width="1"/><path d="M662.6 654.1L646.6 655.8L646.6 661.8L659.4 660.4Z" fill="#452100" stroke="#452100" stroke-width="1"/><path d="M659.4 660.4L646.6 661.8L646.6 667.8L656.2 666.8Z" fill="#451b00" stroke="#451b00" stroke-width="1"/><path d="M656.2 666.8L646.6 667.8L646.6 673.8L653.0 673.2Z" fill="#451600" stroke="#451600" stroke-width="1"/><path d="M653.0 673.2L646.6 673.8L646.6 679.8L649.8 679.5Z" fill="#451100" stroke="#451100" stroke-width="1"/><path d="M649.8 679.5L646.6 679.8L646.6 685.9L646.6 685.9Z" fill="#450c00" stroke="#450c00" stroke-width="1"/><path d="M669.0 641.4L669.0 641.4L665.8 647.7L669.0 648.0Z" fill="#4a2e00" stroke="#4a2e00" stroke-width="1"/><path d="M669.0 648.0L665.8 647.7L662.6 654.1L669.0 654.7Z" fill="#4a2900" stroke="#4a2900" stroke-width="1"/><path d="M669.0 654.7L662.6 654.1L659.4 660.4L669.0 661.3Z" fill="#4a2300" stroke="#4a2300" stroke-width="1"/><path d="M669.0 661.3L659.4 660.4L656.2 666.8L669.0 668.0Z" fill="#4a1d00" stroke="#4a1d00" stroke-width="1"/><path d="M669.0 668.0L656.2 666.8L653.0 673.2L669.0 674.6Z" fill="#4a1700" stroke="#4a1700" stroke-width="1"/><path d="M669.0 674.6L653.0 673.2L649.8 679.5L669.0 681.3Z" fill="#4a1200" stroke="#4a1200" stroke-width="1"/><path d="M669.0 681.3L649.8 679.5L646.6 685.9L669.0 687.9Z" fill="#4a0d00" stroke="#4a0d00" stroke-width="1"/><path d="M669.0 641.4L646.6 643.7L646.6 685.9L669.0 687.9Z" fill="none" stroke="#000" stroke-width="0.7" stroke-opacity="0.85"/><path d="M669.0 641.4L646.6 685.9" stroke="#000" stroke-width="0.95" stroke-dasharray="2.2 1.3" stroke-opacity="0.9"/><path d="M664.2 510.9L655.7 512.1L655.7 517.4L663.1 516.4Z" fill="#00466c" stroke="#00466c" stroke-width="1"/><path d="M663.1 516.4L655.7 517.4L655.7 522.8L662.1 521.9Z" fill="#00566b" stroke="#00566b" stroke-width="1"/><path d="M662.1 521.9L655.7 522.8L655.7 528.1L661.0 527.4Z" fill="#005f64" stroke="#005f64" stroke-width="1"/><path d="M661.0 527.4L655.7 528.1L655.7 533.5L660.0 532.9Z" fill="#00685d" stroke="#00685d" stroke-width="1"/><path d="M660.0 532.9L655.7 533.5L655.7 538.8L658.9 538.4Z" fill="#006c50" stroke="#006c50" stroke-width="1"/><path d="M658.9 538.4L655.7 538.8L655.7 544.2L657.8 543.9Z" fill="#006c3f" stroke="#006c3f" stroke-width="1"/><path d="M657.8 543.9L655.7 544.2L655.7 549.5L656.8 549.4Z" fill="#006c2d" stroke="#006c2d" stroke-width="1"/><path d="M656.8 549.4L655.7 549.5L655.7 554.9L655.7 554.9Z" fill="#006b1d" stroke="#006b1d" stroke-width="1"/><path d="M664.2 510.9L664.2 510.9L663.1 516.4L664.2 516.3Z" fill="#00466c" stroke="#00466c" stroke-width="1"/><path d="M664.2 516.3L663.1 516.4L662.1 521.9L664.2 521.6Z" fill="#00566b" stroke="#00566b" stroke-width="1"/><path d="M664.2 521.6L662.1 521.9L661.0 527.4L664.2 527.0Z" fill="#005f64" stroke="#005f64" stroke-width="1"/><path d="M664.2 527.0L661.0 527.4L660.0 532.9L664.2 532.3Z" fill="#00685d" stroke="#00685d" stroke-width="1"/><path d="M664.2 532.3L660.0 532.9L658.9 538.4L664.2 537.6Z" fill="#006c50" stroke="#006c50" stroke-width="1"/><path d="M664.2 537.6L658.9 538.4L657.8 543.9L664.2 543.0Z" fill="#006c3f" stroke="#006c3f" stroke-width="1"/><path d="M664.2 543.0L657.8 543.9L656.8 549.4L664.2 548.3Z" fill="#006c2d" stroke="#006c2d" stroke-width="1"/><path d="M664.2 548.3L656.8 549.4L655.7 554.9L664.2 553.6Z" fill="#006b1d" stroke="#006b1d" stroke-width="1"/><path d="M664.2 510.9L655.7 512.1L655.7 554.9L664.2 553.6Z" fill="none" stroke="#000" stroke-width="0.7" stroke-opacity="0.85"/><path d="M664.2 510.9L655.7 554.9" stroke="#000" stroke-width="0.95" stroke-dasharray="2.2 1.3" stroke-opacity="0.9"/><path d="M637.5 512.1L629.0 510.9L629.0 516.3L636.4 517.3Z" fill="#00466c" stroke="#00466c" stroke-width="1"/><path d="M636.4 517.3L629.0 516.3L629.0 521.6L635.4 522.5Z" fill="#00566b" stroke="#00566b" stroke-width="1"/><path d="M635.4 522.5L629.0 521.6L629.0 527.0L634.3 527.7Z" fill="#005f64" stroke="#005f64" stroke-width="1"/><path d="M634.3 527.7L629.0 527.0L629.0 532.3L633.2 532.9Z" fill="#00685d" stroke="#00685d" stroke-width="1"/><path d="M633.2 532.9L629.0 532.3L629.0 537.6L632.2 538.1Z" fill="#006c50" stroke="#006c50" stroke-width="1"/><path d="M632.2 538.1L629.0 537.6L629.0 543.0L631.1 543.3Z" fill="#006c3f" stroke="#006c3f" stroke-width="1"/><path d="M631.1 543.3L629.0 543.0L629.0 548.3L630.1 548.5Z" fill="#006c2d" stroke="#006c2d" stroke-width="1"/><path d="M630.1 548.5L629.0 548.3L629.0 553.6L629.0 553.6Z" fill="#006b1d" stroke="#006b1d" stroke-width="1"/><path d="M637.5 512.1L637.5 512.1L636.4 517.3L637.5 517.4Z" fill="#00466c" stroke="#00466c" stroke-width="1"/><path d="M637.5 517.4L636.4 517.3L635.4 522.5L637.5 522.8Z" fill="#00566b" stroke="#00566b" stroke-width="1"/><path d="M637.5 522.8L635.4 522.5L634.3 527.7L637.5 528.1Z" fill="#005f64" stroke="#005f64" stroke-width="1"/><path d="M637.5 528.1L634.3 527.7L633.2 532.9L637.5 533.5Z" fill="#00685d" stroke="#00685d" stroke-width="1"/><path d="M637.5 533.5L633.2 532.9L632.2 538.1L637.5 538.8Z" fill="#006c50" stroke="#006c50" stroke-width="1"/><path d="M637.5 538.8L632.2 538.1L631.1 543.3L637.5 544.2Z" fill="#006c3f" stroke="#006c3f" stroke-width="1"/><path d="M637.5 544.2L631.1 543.3L630.1 548.5L637.5 549.5Z" fill="#006c2d" stroke="#006c2d" stroke-width="1"/><path d="M637.5 549.5L630.1 548.5L629.0 553.6L637.5 554.9Z" fill="#006b1d" stroke="#006b1d" stroke-width="1"/><path d="M637.5 512.1L629.0 510.9L629.0 553.6L637.5 554.9Z" fill="none" stroke="#000" stroke-width="0.7" stroke-opacity="0.85"/><path d="M637.5 512.1L629.0 553.6" stroke="#000" stroke-width="0.95" stroke-dasharray="2.2 1.3" stroke-opacity="0.9"/><path d="M655.7 512.1L646.6 512.5L646.6 517.8L654.6 517.5Z" fill="#003c5c" stroke="#003c5c" stroke-width="1"/><path d="M654.6 517.5L646.6 517.8L646.6 523.2L653.4 522.9Z" fill="#00495b" stroke="#00495b" stroke-width="1"/><path d="M653.4 522.9L646.6 523.2L646.6 528.5L652.3 528.3Z" fill="#005155" stroke="#005155" stroke-width="1"/><path d="M652.3 528.3L646.6 528.5L646.6 533.9L651.2 533.7Z" fill="#00584f" stroke="#00584f" stroke-width="1"/><path d="M651.2 533.7L646.6 533.9L646.6 539.2L650.0 539.1Z" fill="#005c44" stroke="#005c44" stroke-width="1"/><path d="M650.0 539.1L646.6 539.2L646.6 544.6L648.9 544.5Z" fill="#005c35" stroke="#005c35" stroke-width="1"/><path d="M648.9 544.5L646.6 544.6L646.6 549.9L647.7 549.9Z" fill="#005c26" stroke="#005c26" stroke-width="1"/><path d="M647.7 549.9L646.6 549.9L646.6 555.3L646.6 555.3Z" fill="#005b19" stroke="#005b19" stroke-width="1"/><path d="M655.7 512.1L655.7 512.1L654.6 517.5L655.7 517.4Z" fill="#003c5c" stroke="#003c5c" stroke-width="1"/><path d="M655.7 517.4L654.6 517.5L653.4 522.9L655.7 522.8Z" fill="#00495b" stroke="#00495b" stroke-width="1"/><path d="M655.7 522.8L653.4 522.9L652.3 528.3L655.7 528.1Z" fill="#005155" stroke="#005155" stroke-width="1"/><path d="M655.7 528.1L652.3 528.3L651.2 533.7L655.7 533.5Z" fill="#00584f" stroke="#00584f" stroke-width="1"/><path d="M655.7 533.5L651.2 533.7L650.0 539.1L655.7 538.8Z" fill="#005c44" stroke="#005c44" stroke-width="1"/><path d="M655.7 538.8L650.0 539.1L648.9 544.5L655.7 544.2Z" fill="#005c35" stroke="#005c35" stroke-width="1"/><path d="M655.7 544.2L648.9 544.5L647.7 549.9L655.7 549.5Z" fill="#005c26" stroke="#005c26" stroke-width="1"/><path d="M655.7 549.5L647.7 549.9L646.6 555.3L655.7 554.9Z" fill="#005b19" stroke="#005b19" stroke-width="1"/><path d="M655.7 512.1L646.6 512.5L646.6 555.3L655.7 554.9Z" fill="none" stroke="#000" stroke-width="0.7" stroke-opacity="0.85"/><path d="M655.7 512.1L646.6 555.3" stroke="#000" stroke-width="0.95" stroke-dasharray="2.2 1.3" stroke-opacity="0.9"/><path d="M646.6 512.5L637.5 512.1L637.5 517.4L645.5 517.8Z" fill="#003c5c" stroke="#003c5c" stroke-width="1"/><path d="M645.5 517.8L637.5 517.4L637.5 522.8L644.3 523.1Z" fill="#00495b" stroke="#00495b" stroke-width="1"/><path d="M644.3 523.1L637.5 522.8L637.5 528.1L643.2 528.4Z" fill="#005155" stroke="#005155" stroke-width="1"/><path d="M643.2 528.4L637.5 528.1L637.5 533.5L642.0 533.7Z" fill="#00584f" stroke="#00584f" stroke-width="1"/><path d="M642.0 533.7L637.5 533.5L637.5 538.8L640.9 539.0Z" fill="#005c44" stroke="#005c44" stroke-width="1"/><path d="M640.9 539.0L637.5 538.8L637.5 544.2L639.8 544.3Z" fill="#005c35" stroke="#005c35" stroke-width="1"/><path d="M639.8 544.3L637.5 544.2L637.5 549.5L638.6 549.6Z" fill="#005c26" stroke="#005c26" stroke-width="1"/><path d="M638.6 549.6L637.5 549.5L637.5 554.9L637.5 554.9Z" fill="#005b19" stroke="#005b19" stroke-width="1"/><path d="M646.6 512.5L646.6 512.5L645.5 517.8L646.6 517.8Z" fill="#003c5c" stroke="#003c5c" stroke-width="1"/><path d="M646.6 517.8L645.5 517.8L644.3 523.1L646.6 523.2Z" fill="#00495b" stroke="#00495b" stroke-width="1"/><path d="M646.6 523.2L644.3 523.1L643.2 528.4L646.6 528.5Z" fill="#005155" stroke="#005155" stroke-width="1"/><path d="M646.6 528.5L643.2 528.4L642.0 533.7L646.6 533.9Z" fill="#00584f" stroke="#00584f" stroke-width="1"/><path d="M646.6 533.9L642.0 533.7L640.9 539.0L646.6 539.2Z" fill="#005c44" stroke="#005c44" stroke-width="1"/><path d="M646.6 539.2L640.9 539.0L639.8 544.3L646.6 544.6Z" fill="#005c35" stroke="#005c35" stroke-width="1"/><path d="M646.6 544.6L639.8 544.3L638.6 549.6L646.6 549.9Z" fill="#005c26" stroke="#005c26" stroke-width="1"/><path d="M646.6 549.9L638.6 549.6L637.5 554.9L646.6 555.3Z" fill="#005b19" stroke="#005b19" stroke-width="1"/><path d="M646.6 512.5L637.5 512.1L637.5 554.9L646.6 555.3Z" fill="none" stroke="#000" stroke-width="0.7" stroke-opacity="0.85"/><path d="M646.6 512.5L637.5 554.9" stroke="#000" stroke-width="0.95" stroke-dasharray="2.2 1.3" stroke-opacity="0.9"/><path d="M646.6 610.3L630.3 609.5L628.9 617.3L641.1 617.9Z" fill="#777400" stroke="#777400" stroke-width="1"/><path d="M641.1 617.9L628.9 617.3L627.5 625.0L635.7 625.4Z" fill="#7e6e00" stroke="#7e6e00" stroke-width="1"/><path d="M635.7 625.4L627.5 625.0L626.1 632.8L630.2 633.0Z" fill="#7e6400" stroke="#7e6400" stroke-width="1"/><path d="M630.2 633.0L626.1 632.8L624.7 640.6L624.7 640.6Z" fill="#7e5900" stroke="#7e5900" stroke-width="1"/><path d="M646.6 610.3L646.6 610.3L641.1 617.9L646.6 618.6Z" fill="#757300" stroke="#757300" stroke-width="1"/><path d="M646.6 618.6L641.1 617.9L635.7 625.4L646.6 627.0Z" fill="#7d6c00" stroke="#7d6c00" stroke-width="1"/><path d="M646.6 627.0L635.7 625.4L630.2 633.0L646.6 635.4Z" fill="#7d6200" stroke="#7d6200" stroke-width="1"/><path d="M646.6 635.4L630.2 633.0L624.7 640.6L646.6 643.7Z" fill="#7d5800" stroke="#7d5800" stroke-width="1"/><path d="M646.6 610.3L630.3 609.5L624.7 640.6L646.6 643.7Z" fill="none" stroke="#000" stroke-width="0.7" stroke-opacity="0.85"/><path d="M646.6 610.3L624.7 640.6" stroke="#000" stroke-width="0.95" stroke-dasharray="2.2 1.3" stroke-opacity="0.9"/><path d="M669.1 484.6L665.0 486.2L666.6 492.0L669.7 490.7Z" fill="#000dcc" stroke="#000dcc" stroke-width="1"/><path d="M669.7 490.7L666.6 492.0L668.2 497.7L670.3 496.8Z" fill="#0028cc" stroke="#0028cc" stroke-width="1"/><path d="M670.3 496.8L668.2 497.7L669.9 503.4L670.9 503.0Z" fill="#0043cc" stroke="#0043cc" stroke-width="1"/><path d="M670.9 503.0L669.9 503.4L671.5 509.1L671.5 509.1Z" fill="#0063cc" stroke="#0063cc" stroke-width="1"/><path d="M669.1 484.6L669.1 484.6L669.7 490.7L671.1 490.1Z" fill="#000dcc" stroke="#000dcc" stroke-width="1"/><path d="M671.1 490.1L669.7 490.7L670.3 496.8L673.1 495.7Z" fill="#0028cc" stroke="#0028cc" stroke-width="1"/><path d="M673.1 495.7L670.3 496.8L670.9 503.0L675.1 501.2Z" fill="#0043cc" stroke="#0043cc" stroke-width="1"/><path d="M675.1 501.2L670.9 503.0L671.5 509.1L677.1 506.8Z" fill="#0063cc" stroke="#0063cc" stroke-width="1"/><path d="M669.1 484.6L665.0 486.2L671.5 509.1L677.1 506.8Z" fill="none" stroke="#000" stroke-width="0.7" stroke-opacity="0.85"/><path d="M669.1 484.6L671.5 509.1" stroke="#000" stroke-width="0.95" stroke-dasharray="2.2 1.3" stroke-opacity="0.9"/><path d="M628.2 486.2L624.1 484.6L622.1 490.1L625.2 491.4Z" fill="#000dcc" stroke="#000dcc" stroke-width="1"/><path d="M625.2 491.4L622.1 490.1L620.1 495.7L622.2 496.5Z" fill="#0028cc" stroke="#0028cc" stroke-width="1"/><path d="M622.2 496.5L620.1 495.7L618.1 501.2L619.1 501.6Z" fill="#0043cc" stroke="#0043cc" stroke-width="1"/><path d="M619.1 501.6L618.1 501.2L616.1 506.8L616.1 506.8Z" fill="#0063cc" stroke="#0063cc" stroke-width="1"/><path d="M628.2 486.2L628.2 486.2L625.2 491.4L626.6 492.0Z" fill="#000dcc" stroke="#000dcc" stroke-width="1"/><path d="M626.6 492.0L625.2 491.4L622.2 496.5L625.0 497.7Z" fill="#0028cc" stroke="#0028cc" stroke-width="1"/><path d="M625.0 497.7L622.2 496.5L619.1 501.6L623.3 503.4Z" fill="#0043cc" stroke="#0043cc" stroke-width="1"/><path d="M623.3 503.4L619.1 501.6L616.1 506.8L621.7 509.1Z" fill="#0063cc" stroke="#0063cc" stroke-width="1"/><path d="M628.2 486.2L624.1 484.6L616.1 506.8L621.7 509.1Z" fill="none" stroke="#000" stroke-width="0.7" stroke-opacity="0.85"/><path d="M628.2 486.2L616.1 506.8" stroke="#000" stroke-width="0.95" stroke-dasharray="2.2 1.3" stroke-opacity="0.9"/><path d="M662.9 609.5L646.6 610.3L646.6 618.6L658.8 618.0Z" fill="#8a8700" stroke="#8a8700" stroke-width="1"/><path d="M658.8 618.0L646.6 618.6L646.6 627.0L654.8 626.6Z" fill="#938000" stroke="#938000" stroke-width="1"/><path d="M654.8 626.6L646.6 627.0L646.6 635.4L650.7 635.2Z" fill="#937400" stroke="#937400" stroke-width="1"/><path d="M650.7 635.2L646.6 635.4L646.6 643.7L646.6 643.7Z" fill="#936800" stroke="#936800" stroke-width="1"/><path d="M662.9 609.5L662.9 609.5L658.8 618.0L664.4 617.4Z" fill="#999500" stroke="#999500" stroke-width="1"/><path d="M664.4 617.4L658.8 618.0L654.8 626.6L666.0 625.4Z" fill="#a38d00" stroke="#a38d00" stroke-width="1"/><path d="M666.0 625.4L654.8 626.6L650.7 635.2L667.5 633.4Z" fill="#a38000" stroke="#a38000" stroke-width="1"/><path d="M667.5 633.4L650.7 635.2L646.6 643.7L669.0 641.4Z" fill="#a37300" stroke="#a37300" stroke-width="1"/><path d="M662.9 609.5L646.6 610.3L646.6 643.7L669.0 641.4Z" fill="none" stroke="#000" stroke-width="0.7" stroke-opacity="0.85"/><path d="M662.9 609.5L646.6 643.7" stroke="#000" stroke-width="0.95" stroke-dasharray="2.2 1.3" stroke-opacity="0.9"/><path d="M624.7 691.4L603.3 678.6L595.2 692.8L611.3 702.4Z" fill="#c41201" stroke="#c41201" stroke-width="1"/><path d="M611.3 702.4L595.2 692.8L587.2 707.0L597.9 713.4Z" fill="#bf090f" stroke="#bf090f" stroke-width="1"/><path d="M597.9 713.4L587.2 707.0L579.1 721.2L584.5 724.4Z" fill="#b9011d" stroke="#b9011d" stroke-width="1"/><path d="M584.5 724.4L579.1 721.2L571.1 735.4L571.1 735.4Z" fill="#b30036" stroke="#b30036" stroke-width="1"/><path d="M624.7 691.4L624.7 691.4L611.3 702.4L620.3 704.7Z" fill="#a60f01" stroke="#a60f01" stroke-width="1"/><path d="M620.3 704.7L611.3 702.4L597.9 713.4L615.9 718.0Z" fill="#a2080d" stroke="#a2080d" stroke-width="1"/><path d="M615.9 718.0L597.9 713.4L584.5 724.4L611.4 731.3Z" fill="#9d0018" stroke="#9d0018" stroke-width="1"/><path d="M611.4 731.3L584.5 724.4L571.1 735.4L607.0 744.6Z" fill="#98002e" stroke="#98002e" stroke-width="1"/><path d="M624.7 691.4L603.3 678.6L571.1 735.4L607.0 744.6Z" fill="none" stroke="#000" stroke-width="0.7" stroke-opacity="0.85"/><path d="M624.7 691.4L571.1 735.4" stroke="#000" stroke-width="0.75" stroke-dasharray="2.2 1.3" stroke-opacity="0.9"/><path d="M688.9 682.2L669.0 687.9L673.7 701.9L688.6 697.6Z" fill="#bc1101" stroke="#bc1101" stroke-width="1"/><path d="M688.6 697.6L673.7 701.9L678.3 716.0L688.2 713.1Z" fill="#b7090e" stroke="#b7090e" stroke-width="1"/><path d="M688.2 713.1L678.3 716.0L682.9 730.0L687.9 728.6Z" fill="#b2011b" stroke="#b2011b" stroke-width="1"/><path d="M687.9 728.6L682.9 730.0L687.6 744.1L687.6 744.1Z" fill="#ac0034" stroke="#ac0034" stroke-width="1"/><path d="M688.9 682.2L688.9 682.2L688.6 697.6L696.5 695.6Z" fill="#990e01" stroke="#990e01" stroke-width="1"/><path d="M696.5 695.6L688.6 697.6L688.2 713.1L704.2 709.1Z" fill="#95070c" stroke="#95070c" stroke-width="1"/><path d="M704.2 709.1L688.2 713.1L687.9 728.6L711.8 722.6Z" fill="#910016" stroke="#910016" stroke-width="1"/><path d="M711.8 722.6L687.9 728.6L687.6 744.1L719.4 736.1Z" fill="#8c002a" stroke="#8c002a" stroke-width="1"/><path d="M688.9 682.2L669.0 687.9L687.6 744.1L719.4 736.1Z" fill="none" stroke="#000" stroke-width="0.7" stroke-opacity="0.85"/><path d="M688.9 682.2L687.6 744.1" stroke="#000" stroke-width="0.75" stroke-dasharray="2.2 1.3" stroke-opacity="0.9"/><path d="M633.6 487.5L628.2 486.2L626.6 492.0L630.6 492.9Z" fill="#000cb9" stroke="#000cb9" stroke-width="1"/><path d="M630.6 492.9L626.6 492.0L625.0 497.7L627.7 498.3Z" fill="#0024b9" stroke="#0024b9" stroke-width="1"/><path d="M627.7 498.3L625.0 497.7L623.3 503.4L624.7 503.7Z" fill="#003db9" stroke="#003db9" stroke-width="1"/><path d="M624.7 503.7L623.3 503.4L621.7 509.1L621.7 509.1Z" fill="#005ab9" stroke="#005ab9" stroke-width="1"/><path d="M633.6 487.5L633.6 487.5L630.6 492.9L632.5 493.4Z" fill="#000cb9" stroke="#000cb9" stroke-width="1"/><path d="M632.5 493.4L630.6 492.9L627.7 498.3L631.3 499.2Z" fill="#0024b9" stroke="#0024b9" stroke-width="1"/><path d="M631.3 499.2L627.7 498.3L624.7 503.7L630.1 505.1Z" fill="#003db9" stroke="#003db9" stroke-width="1"/><path d="M630.1 505.1L624.7 503.7L621.7 509.1L629.0 510.9Z" fill="#005ab9" stroke="#005ab9" stroke-width="1"/><path d="M633.6 487.5L628.2 486.2L621.7 509.1L629.0 510.9Z" fill="none" stroke="#000" stroke-width="0.7" stroke-opacity="0.85"/><path d="M633.6 487.5L621.7 509.1" stroke="#000" stroke-width="0.95" stroke-dasharray="2.2 1.3" stroke-opacity="0.9"/><path d="M665.0 486.2L659.6 487.5L660.8 493.4L664.8 492.4Z" fill="#000cb9" stroke="#000cb9" stroke-width="1"/><path d="M664.8 492.4L660.8 493.4L661.9 499.2L664.6 498.6Z" fill="#0024b9" stroke="#0024b9" stroke-width="1"/><path d="M664.6 498.6L661.9 499.2L663.1 505.1L664.4 504.8Z" fill="#003db9" stroke="#003db9" stroke-width="1"/><path d="M664.4 504.8L663.1 505.1L664.2 510.9L664.2 510.9Z" fill="#005ab9" stroke="#005ab9" stroke-width="1"/><path d="M665.0 486.2L665.0 486.2L664.8 492.4L666.6 492.0Z" fill="#000cb9" stroke="#000cb9" stroke-width="1"/><path d="M666.6 492.0L664.8 492.4L664.6 498.6L668.2 497.7Z" fill="#0024b9" stroke="#0024b9" stroke-width="1"/><path d="M668.2 497.7L664.6 498.6L664.4 504.8L669.9 503.4Z" fill="#003db9" stroke="#003db9" stroke-width="1"/><path d="M669.9 503.4L664.4 504.8L664.2 510.9L671.5 509.1Z" fill="#005ab9" stroke="#005ab9" stroke-width="1"/><path d="M665.0 486.2L659.6 487.5L664.2 510.9L671.5 509.1Z" fill="none" stroke="#000" stroke-width="0.7" stroke-opacity="0.85"/><path d="M665.0 486.2L664.2 510.9" stroke="#000" stroke-width="0.95" stroke-dasharray="2.2 1.3" stroke-opacity="0.9"/><path d="M659.6 487.5L653.3 488.3L653.9 494.3L658.6 493.7Z" fill="#000aa2" stroke="#000aa2" stroke-width="1"/><path d="M658.6 493.7L653.9 494.3L654.5 500.2L657.7 499.8Z" fill="#0020a2" stroke="#0020a2" stroke-width="1"/><path d="M657.7 499.8L654.5 500.2L655.1 506.1L656.7 505.9Z" fill="#0035a2" stroke="#0035a2" stroke-width="1"/><path d="M656.7 505.9L655.1 506.1L655.7 512.1L655.7 512.1Z" fill="#004fa2" stroke="#004fa2" stroke-width="1"/><path d="M659.6 487.5L659.6 487.5L658.6 493.7L660.8 493.4Z" fill="#000aa2" stroke="#000aa2" stroke-width="1"/><path d="M660.8 493.4L658.6 493.7L657.7 499.8L661.9 499.2Z" fill="#0020a2" stroke="#0020a2" stroke-width="1"/><path d="M661.9 499.2L657.7 499.8L656.7 505.9L663.1 505.1Z" fill="#0035a2" stroke="#0035a2" stroke-width="1"/><path d="M663.1 505.1L656.7 505.9L655.7 512.1L664.2 510.9Z" fill="#004fa2" stroke="#004fa2" stroke-width="1"/><path d="M659.6 487.5L653.3 488.3L655.7 512.1L664.2 510.9Z" fill="none" stroke="#000" stroke-width="0.7" stroke-opacity="0.85"/><path d="M659.6 487.5L655.7 512.1" stroke="#000" stroke-width="0.95" stroke-dasharray="2.2 1.3" stroke-opacity="0.9"/><path d="M639.9 488.3L633.6 487.5L632.5 493.4L637.2 494.0Z" fill="#000aa2" stroke="#000aa2" stroke-width="1"/><path d="M637.2 494.0L632.5 493.4L631.3 499.2L634.4 499.6Z" fill="#0020a2" stroke="#0020a2" stroke-width="1"/><path d="M634.4 499.6L631.3 499.2L630.1 505.1L631.7 505.3Z" fill="#0035a2" stroke="#0035a2" stroke-width="1"/><path d="M631.7 505.3L630.1 505.1L629.0 510.9L629.0 510.9Z" fill="#004fa2" stroke="#004fa2" stroke-width="1"/><path d="M639.9 488.3L639.9 488.3L637.2 494.0L639.3 494.3Z" fill="#000aa2" stroke="#000aa2" stroke-width="1"/><path d="M639.3 494.3L637.2 494.0L634.4 499.6L638.7 500.2Z" fill="#0020a2" stroke="#0020a2" stroke-width="1"/><path d="M638.7 500.2L634.4 499.6L631.7 505.3L638.1 506.1Z" fill="#0035a2" stroke="#0035a2" stroke-width="1"/><path d="M638.1 506.1L631.7 505.3L629.0 510.9L637.5 512.1Z" fill="#004fa2" stroke="#004fa2" stroke-width="1"/><path d="M639.9 488.3L633.6 487.5L629.0 510.9L637.5 512.1Z" fill="none" stroke="#000" stroke-width="0.7" stroke-opacity="0.85"/><path d="M639.9 488.3L629.0 510.9" stroke="#000" stroke-width="0.95" stroke-dasharray="2.2 1.3" stroke-opacity="0.9"/><path d="M646.6 488.6L639.9 488.3L639.3 494.3L644.3 494.5Z" fill="#000989" stroke="#000989" stroke-width="1"/><path d="M644.3 494.5L639.3 494.3L638.7 500.2L642.0 500.3Z" fill="#001b89" stroke="#001b89" stroke-width="1"/><path d="M642.0 500.3L638.7 500.2L638.1 506.1L639.8 506.2Z" fill="#002d89" stroke="#002d89" stroke-width="1"/><path d="M639.8 506.2L638.1 506.1L637.5 512.1L637.5 512.1Z" fill="#004289" stroke="#004289" stroke-width="1"/><path d="M646.6 488.6L646.6 488.6L644.3 494.5L646.6 494.6Z" fill="#000989" stroke="#000989" stroke-width="1"/><path d="M646.6 494.6L644.3 494.5L642.0 500.3L646.6 500.5Z" fill="#001b89" stroke="#001b89" stroke-width="1"/><path d="M646.6 500.5L642.0 500.3L639.8 506.2L646.6 506.5Z" fill="#002d89" stroke="#002d89" stroke-width="1"/><path d="M646.6 506.5L639.8 506.2L637.5 512.1L646.6 512.5Z" fill="#004289" stroke="#004289" stroke-width="1"/><path d="M646.6 488.6L639.9 488.3L637.5 512.1L646.6 512.5Z" fill="none" stroke="#000" stroke-width="0.7" stroke-opacity="0.85"/><path d="M646.6 488.6L637.5 512.1" stroke="#000" stroke-width="0.95" stroke-dasharray="2.2 1.3" stroke-opacity="0.9"/><path d="M653.3 488.3L646.6 488.6L646.6 494.6L651.6 494.4Z" fill="#000989" stroke="#000989" stroke-width="1"/><path d="M651.6 494.4L646.6 494.6L646.6 500.5L650.0 500.4Z" fill="#001b89" stroke="#001b89" stroke-width="1"/><path d="M650.0 500.4L646.6 500.5L646.6 506.5L648.3 506.4Z" fill="#002d89" stroke="#002d89" stroke-width="1"/><path d="M648.3 506.4L646.6 506.5L646.6 512.5L646.6 512.5Z" fill="#004289" stroke="#004289" stroke-width="1"/><path d="M653.3 488.3L653.3 488.3L651.6 494.4L653.9 494.3Z" fill="#000989" stroke="#000989" stroke-width="1"/><path d="M653.9 494.3L651.6 494.4L650.0 500.4L654.5 500.2Z" fill="#001b89" stroke="#001b89" stroke-width="1"/><path d="M654.5 500.2L650.0 500.4L648.3 506.4L655.1 506.1Z" fill="#002d89" stroke="#002d89" stroke-width="1"/><path d="M655.1 506.1L648.3 506.4L646.6 512.5L655.7 512.1Z" fill="#004289" stroke="#004289" stroke-width="1"/><path d="M653.3 488.3L646.6 488.6L646.6 512.5L655.7 512.1Z" fill="none" stroke="#000" stroke-width="0.7" stroke-opacity="0.85"/><path d="M653.3 488.3L646.6 512.5" stroke="#000" stroke-width="0.95" stroke-dasharray="2.2 1.3" stroke-opacity="0.9"/><path d="M646.6 685.9L624.7 691.4L620.3 704.7L636.7 700.5Z" fill="#ba1101" stroke="#ba1101" stroke-width="1"/><path d="M636.7 700.5L620.3 704.7L615.9 718.0L626.8 715.2Z" fill="#b5090d" stroke="#b5090d" stroke-width="1"/><path d="M626.8 715.2L615.9 718.0L611.4 731.3L616.9 729.9Z" fill="#b10219" stroke="#b10219" stroke-width="1"/><path d="M616.9 729.9L611.4 731.3L607.0 744.6L607.0 744.6Z" fill="#ac002c" stroke="#ac002c" stroke-width="1"/><path d="M646.6 685.9L646.6 685.9L636.7 700.5L646.6 701.0Z" fill="#e31402" stroke="#e31402" stroke-width="1"/><path d="M646.6 701.0L636.7 700.5L626.8 715.2L646.6 716.2Z" fill="#de0c10" stroke="#de0c10" stroke-width="1"/><path d="M646.6 716.2L626.8 715.2L616.9 729.9L646.6 731.4Z" fill="#d8031e" stroke="#d8031e" stroke-width="1"/><path d="M646.6 731.4L616.9 729.9L607.0 744.6L646.6 746.6Z" fill="#d20036" stroke="#d20036" stroke-width="1"/><path d="M646.6 685.9L624.7 691.4L607.0 744.6L646.6 746.6Z" fill="none" stroke="#000" stroke-width="0.7" stroke-opacity="0.85"/><path d="M646.6 685.9L607.0 744.6" stroke="#000" stroke-width="0.75" stroke-dasharray="2.2 1.3" stroke-opacity="0.9"/><path d="M669.0 687.9L646.6 685.9L646.6 701.0L663.4 702.6Z" fill="#c11400" stroke="#c11400" stroke-width="1"/><path d="M663.4 702.6L646.6 701.0L646.6 716.2L657.8 717.2Z" fill="#bd0c0a" stroke="#bd0c0a" stroke-width="1"/><path d="M657.8 717.2L646.6 716.2L646.6 731.4L652.2 731.9Z" fill="#b80417" stroke="#b80417" stroke-width="1"/><path d="M652.2 731.9L646.6 731.4L646.6 746.6L646.6 746.6Z" fill="#b30028" stroke="#b30028" stroke-width="1"/><path d="M669.0 687.9L669.0 687.9L663.4 702.6L673.7 701.9Z" fill="#d11600" stroke="#d11600" stroke-width="1"/><path d="M673.7 701.9L663.4 702.6L657.8 717.2L678.3 716.0Z" fill="#cc0d0b" stroke="#cc0d0b" stroke-width="1"/><path d="M678.3 716.0L657.8 717.2L652.2 731.9L682.9 730.0Z" fill="#c70419" stroke="#c70419" stroke-width="1"/><path d="M682.9 730.0L652.2 731.9L646.6 746.6L687.6 744.1Z" fill="#c1002c" stroke="#c1002c" stroke-width="1"/><path d="M669.0 687.9L646.6 685.9L646.6 746.6L687.6 744.1Z" fill="none" stroke="#000" stroke-width="0.7" stroke-opacity="0.85"/><path d="M669.0 687.9L646.6 746.6" stroke="#000" stroke-width="0.75" stroke-dasharray="2.2 1.3" stroke-opacity="0.9"/><path d="M752.2 721.7L719.4 736.1L727.0 746.2L753.3 734.7Z" fill="#ce0055" stroke="#ce0055" stroke-width="1"/><path d="M753.3 734.7L727.0 746.2L734.7 756.4L754.4 747.7Z" fill="#c8006b" stroke="#c8006b" stroke-width="1"/><path d="M754.4 747.7L734.7 756.4L742.3 766.5L755.4 760.8Z" fill="#c30080" stroke="#c30080" stroke-width="1"/><path d="M755.4 760.8L742.3 766.5L750.0 776.7L756.5 773.8Z" fill="#be0095" stroke="#be0095" stroke-width="1"/><path d="M756.5 773.8L750.0 776.7L757.6 786.8L757.6 786.8Z" fill="#b800ab" stroke="#b800ab" stroke-width="1"/><path d="M752.2 721.7L752.2 721.7L753.3 734.7L762.5 731.6Z" fill="#cc0055" stroke="#cc0055" stroke-width="1"/><path d="M762.5 731.6L753.3 734.7L754.4 747.7L772.8 741.6Z" fill="#c7006a" stroke="#c7006a" stroke-width="1"/><path d="M772.8 741.6L754.4 747.7L755.4 760.8L783.0 751.5Z" fill="#c2007f" stroke="#c2007f" stroke-width="1"/><path d="M783.0 751.5L755.4 760.8L756.5 773.8L793.3 761.5Z" fill="#bc0094" stroke="#bc0094" stroke-width="1"/><path d="M793.3 761.5L756.5 773.8L757.6 786.8L803.6 771.4Z" fill="#b700aa" stroke="#b700aa" stroke-width="1"/><path d="M752.2 721.7L719.4 736.1L757.6 786.8L803.6 771.4Z" fill="none" stroke="#000" stroke-width="0.7" stroke-opacity="0.85"/><path d="M752.2 721.7L757.6 786.8" stroke="#000" stroke-width="0.75" stroke-dasharray="2.2 1.3" stroke-opacity="0.9"/><path d="M571.1 735.4L541.0 721.7L530.7 731.6L554.8 742.6Z" fill="#ca004f" stroke="#ca004f" stroke-width="1"/><path d="M554.8 742.6L530.7 731.6L520.4 741.6L538.5 749.8Z" fill="#c50064" stroke="#c50064" stroke-width="1"/><path d="M538.5 749.8L520.4 741.6L510.2 751.5L522.2 757.0Z" fill="#bf007a" stroke="#bf007a" stroke-width="1"/><path d="M522.2 757.0L510.2 751.5L499.9 761.5L505.9 764.2Z" fill="#ba0090" stroke="#ba0090" stroke-width="1"/><path d="M505.9 764.2L499.9 761.5L489.6 771.4L489.6 771.4Z" fill="#b400a7" stroke="#b400a7" stroke-width="1"/><path d="M571.1 735.4L571.1 735.4L554.8 742.6L564.0 745.7Z" fill="#cc004f" stroke="#cc004f" stroke-width="1"/><path d="M564.0 745.7L554.8 742.6L538.5 749.8L556.9 756.0Z" fill="#c70065" stroke="#c70065" stroke-width="1"/><path d="M556.9 756.0L538.5 749.8L522.2 757.0L549.8 766.3Z" fill="#c1007b" stroke="#c1007b" stroke-width="1"/><path d="M549.8 766.3L522.2 757.0L505.9 764.2L542.7 776.5Z" fill="#bb0092" stroke="#bb0092" stroke-width="1"/><path d="M542.7 776.5L505.9 764.2L489.6 771.4L535.6 786.8Z" fill="#b600a8" stroke="#b600a8" stroke-width="1"/><path d="M571.1 735.4L541.0 721.7L489.6 771.4L535.6 786.8Z" fill="none" stroke="#000" stroke-width="0.7" stroke-opacity="0.85"/><path d="M571.1 735.4L489.6 771.4" stroke="#000" stroke-width="0.75" stroke-dasharray="2.2 1.3" stroke-opacity="0.9"/><path d="M607.0 744.6L571.1 735.4L564.0 745.7L592.7 753.0Z" fill="#bc0053" stroke="#bc0053" stroke-width="1"/><path d="M592.7 753.0L564.0 745.7L556.9 756.0L578.4 761.5Z" fill="#b80065" stroke="#b80065" stroke-width="1"/><path d="M578.4 761.5L556.9 756.0L549.8 766.3L564.2 769.9Z" fill="#b30078" stroke="#b30078" stroke-width="1"/><path d="M564.2 769.9L549.8 766.3L542.7 776.5L549.9 778.4Z" fill="#ae008b" stroke="#ae008b" stroke-width="1"/><path d="M549.9 778.4L542.7 776.5L535.6 786.8L535.6 786.8Z" fill="#a9009e" stroke="#a9009e" stroke-width="1"/><path d="M607.0 744.6L607.0 744.6L592.7 753.0L603.4 754.9Z" fill="#bd0053" stroke="#bd0053" stroke-width="1"/><path d="M603.4 754.9L592.7 753.0L578.4 761.5L599.9 765.3Z" fill="#b90066" stroke="#b90066" stroke-width="1"/><path d="M599.9 765.3L578.4 761.5L564.2 769.9L596.3 775.7Z" fill="#b40079" stroke="#b40079" stroke-width="1"/><path d="M596.3 775.7L564.2 769.9L549.9 778.4L592.7 786.1Z" fill="#af008c" stroke="#af008c" stroke-width="1"/><path d="M592.7 786.1L549.9 778.4L535.6 786.8L589.1 796.5Z" fill="#ab009f" stroke="#ab009f" stroke-width="1"/><path d="M607.0 744.6L571.1 735.4L535.6 786.8L589.1 796.5Z" fill="none" stroke="#000" stroke-width="0.7" stroke-opacity="0.85"/><path d="M607.0 744.6L535.6 786.8" stroke="#000" stroke-width="0.75" stroke-dasharray="2.2 1.3" stroke-opacity="0.9"/><path d="M719.4 736.1L687.6 744.1L690.9 754.6L716.3 748.2Z" fill="#b1004e" stroke="#b1004e" stroke-width="1"/><path d="M716.3 748.2L690.9 754.6L694.2 765.0L713.3 760.3Z" fill="#ad005f" stroke="#ad005f" stroke-width="1"/><path d="M713.3 760.3L694.2 765.0L697.5 775.5L710.2 772.3Z" fill="#a90071" stroke="#a90071" stroke-width="1"/><path d="M710.2 772.3L697.5 775.5L700.8 786.0L707.1 784.4Z" fill="#a40083" stroke="#a40083" stroke-width="1"/><path d="M707.1 784.4L700.8 786.0L704.1 796.5L704.1 796.5Z" fill="#a00095" stroke="#a00095" stroke-width="1"/><path d="M719.4 736.1L719.4 736.1L716.3 748.2L727.0 746.2Z" fill="#bc0053" stroke="#bc0053" stroke-width="1"/><path d="M727.0 746.2L716.3 748.2L713.3 760.3L734.7 756.4Z" fill="#b80065" stroke="#b80065" stroke-width="1"/><path d="M734.7 756.4L713.3 760.3L710.2 772.3L742.3 766.5Z" fill="#b30078" stroke="#b30078" stroke-width="1"/><path d="M742.3 766.5L710.2 772.3L707.1 784.4L750.0 776.7Z" fill="#ae008b" stroke="#ae008b" stroke-width="1"/><path d="M750.0 776.7L707.1 784.4L704.1 796.5L757.6 786.8Z" fill="#aa009e" stroke="#aa009e" stroke-width="1"/><path d="M719.4 736.1L687.6 744.1L704.1 796.5L757.6 786.8Z" fill="none" stroke="#000" stroke-width="0.7" stroke-opacity="0.85"/><path d="M719.4 736.1L704.1 796.5" stroke="#000" stroke-width="0.75" stroke-dasharray="2.2 1.3" stroke-opacity="0.9"/><path d="M646.6 746.6L607.0 744.6L603.4 754.9L635.1 756.6Z" fill="#be004a" stroke="#be004a" stroke-width="1"/><path d="M635.1 756.6L603.4 754.9L599.9 765.3L623.6 766.5Z" fill="#b9005e" stroke="#b9005e" stroke-width="1"/><path d="M623.6 766.5L599.9 765.3L596.3 775.7L612.1 776.5Z" fill="#b40073" stroke="#b40073" stroke-width="1"/><path d="M612.1 776.5L596.3 775.7L592.7 786.1L600.6 786.5Z" fill="#af0088" stroke="#af0088" stroke-width="1"/><path d="M600.6 786.5L592.7 786.1L589.1 796.5L589.1 796.5Z" fill="#a9009c" stroke="#a9009c" stroke-width="1"/><path d="M646.6 746.6L646.6 746.6L635.1 756.6L646.6 757.2Z" fill="#ae0043" stroke="#ae0043" stroke-width="1"/><path d="M646.6 757.2L635.1 756.6L623.6 766.5L646.6 767.9Z" fill="#aa0056" stroke="#aa0056" stroke-width="1"/><path d="M646.6 767.9L623.6 766.5L612.1 776.5L646.6 778.5Z" fill="#a50069" stroke="#a50069" stroke-width="1"/><path d="M646.6 778.5L612.1 776.5L600.6 786.5L646.6 789.1Z" fill="#a0007c" stroke="#a0007c" stroke-width="1"/><path d="M646.6 789.1L600.6 786.5L589.1 796.5L646.6 799.8Z" fill="#9b008f" stroke="#9b008f" stroke-width="1"/><path d="M646.6 746.6L607.0 744.6L589.1 796.5L646.6 799.8Z" fill="none" stroke="#000" stroke-width="0.7" stroke-opacity="0.85"/><path d="M646.6 746.6L589.1 796.5" stroke="#000" stroke-width="0.75" stroke-dasharray="2.2 1.3" stroke-opacity="0.9"/><path d="M687.6 744.1L646.6 746.6L646.6 757.2L679.4 755.2Z" fill="#a0003a" stroke="#a0003a" stroke-width="1"/><path d="M679.4 755.2L646.6 757.2L646.6 767.9L671.2 766.4Z" fill="#9b004c" stroke="#9b004c" stroke-width="1"/><path d="M671.2 766.4L646.6 767.9L646.6 778.5L663.0 777.5Z" fill="#97005e" stroke="#97005e" stroke-width="1"/><path d="M663.0 777.5L646.6 778.5L646.6 789.1L654.8 788.7Z" fill="#920070" stroke="#920070" stroke-width="1"/><path d="M654.8 788.7L646.6 789.1L646.6 799.8L646.6 799.8Z" fill="#8e0082" stroke="#8e0082" stroke-width="1"/><path d="M687.6 744.1L687.6 744.1L679.4 755.2L690.9 754.6Z" fill="#b30041" stroke="#b30041" stroke-width="1"/><path d="M690.9 754.6L679.4 755.2L671.2 766.4L694.2 765.0Z" fill="#ae0055" stroke="#ae0055" stroke-width="1"/><path d="M694.2 765.0L671.2 766.4L663.0 777.5L697.5 775.5Z" fill="#a90069" stroke="#a90069" stroke-width="1"/><path d="M697.5 775.5L663.0 777.5L654.8 788.7L700.8 786.0Z" fill="#a4007d" stroke="#a4007d" stroke-width="1"/><path d="M700.8 786.0L654.8 788.7L646.6 799.8L704.1 796.5Z" fill="#9f0092" stroke="#9f0092" stroke-width="1"/><path d="M687.6 744.1L646.6 746.6L646.6 799.8L704.1 796.5Z" fill="none" stroke="#000" stroke-width="0.7" stroke-opacity="0.85"/><path d="M687.6 744.1L646.6 799.8" stroke="#000" stroke-width="0.75" stroke-dasharray="2.2 1.3" stroke-opacity="0.9"/><path d="M646.6 488.6 639.9 488.3 633.6 487.5 628.2 486.2 624.1 484.6 621.5 482.6 620.6 480.5 621.5 478.4 624.1 476.5 628.2 474.8 633.6 473.6 639.9 472.7 646.6 472.5 653.3 472.7 659.6 473.6 665.0 474.8 669.1 476.5 671.7 478.4 672.6 480.5 671.7 482.6 669.1 484.6 665.0 486.2 659.6 487.5 653.3 488.3Z" fill="#0a0f5a" stroke="#000" stroke-width="0.7"/><path d="M646.6 481 V378" stroke="#0000ff" stroke-width="1.4"/><path d="M646.6 370 L644.9 382 L646.6 380.5 L648.3 382 Z" fill="#0000ff"/><path d="M646.6 481 L568 504.8" stroke="#ff0000" stroke-width="1.4"/><path d="M561.6 506.8 L573.5 500.5 L572 503.6 L574.8 504.8 Z" fill="#ff0000"/><path d="M646.6 481 L725 504.8" stroke="#008000" stroke-width="1.4"/><path d="M731.9 506.8 L718.4 504.8 L721.2 503.6 L719.7 500.5 Z" fill="#008000"/><text x="0" y="0" transform="translate(646.6 356.3) scale(0.72 1)" text-anchor="middle" font-family="Liberation Sans" font-weight="bold" font-size="15" fill="#0000ff">1</text><text x="0" y="0" transform="translate(546.8 517.5) scale(0.72 1)" text-anchor="middle" font-family="Liberation Sans" font-weight="bold" font-size="15" fill="#ff0000">3</text><text x="0" y="0" transform="translate(745.7 517.5) scale(0.72 1)" text-anchor="middle" font-family="Liberation Sans" font-weight="bold" font-size="15" fill="#008000">2</text></svg>
<div class="a" style="left:991px;top:127px;width:120px;height:873px;background:#fafafa"></div>
<div class="a" style="left:991px;top:127px;width:120px;height:33px;background:#eeeeee;border-bottom:1px solid #dcdcdc"></div>
<div class="a" style="left:1006.5px;top:128.2px;font-size:12.5px;font-weight:bold;line-height:16px;color:#333;white-space:nowrap">Axial (x 10E+3<br>kN)</div>
<div class="a" style="left:991px;top:160px;width:32px;height:32px;background:#0000ff"></div>
<div class="t" style="left:1032.5px;top:170.6px;font-size:12px;color:#111">9.66</div>
<div class="a" style="left:991px;top:192px;width:32px;height:32px;background:#0064ff"></div>
<div class="t" style="left:1032.5px;top:202.6px;font-size:12px;color:#111">9.02</div>
<div class="a" style="left:991px;top:224px;width:32px;height:32px;background:#00c8ff"></div>
<div class="t" style="left:1032.5px;top:234.6px;font-size:12px;color:#111">8.38</div>
<div class="a" style="left:991px;top:256px;width:32px;height:32px;background:#00ffd2"></div>
<div class="t" style="left:1032.5px;top:266.6px;font-size:12px;color:#111">7.73</div>
<div class="a" style="left:991px;top:288px;width:32px;height:32px;background:#00ff66"></div>
<div class="t" style="left:1032.5px;top:298.6px;font-size:12px;color:#111">7.09</div>
<div class="a" style="left:991px;top:320px;width:32px;height:32px;background:#00fa00"></div>
<div class="t" style="left:1032.5px;top:330.6px;font-size:12px;color:#111">6.44</div>
<div class="a" style="left:991px;top:352px;width:32px;height:32px;background:#66ff00"></div>
<div class="t" style="left:1032.5px;top:362.6px;font-size:12px;color:#111">5.80</div>
<div class="a" style="left:991px;top:384px;width:32px;height:32px;background:#ccff00"></div>
<div class="t" style="left:1032.5px;top:394.6px;font-size:12px;color:#111">5.15</div>
<div class="a" style="left:991px;top:416px;width:32px;height:32px;background:#ffdd00"></div>
<div class="t" style="left:1032.5px;top:426.6px;font-size:12px;color:#111">4.51</div>
<div class="a" style="left:991px;top:448px;width:32px;height:32px;background:#ffaa00"></div>
<div class="t" style="left:1032.5px;top:458.6px;font-size:12px;color:#111">3.87</div>
<div class="a" style="left:991px;top:480px;width:32px;height:32px;background:#ff7700"></div>
<div class="t" style="left:1032.5px;top:490.6px;font-size:12px;color:#111">3.22</div>
<div class="a" style="left:991px;top:512px;width:32px;height:32px;background:#ff4500"></div>
<div class="t" style="left:1032.5px;top:522.6px;font-size:12px;color:#111">2.58</div>
<div class="a" style="left:991px;top:544px;width:32px;height:32px;background:#ff1a00"></div>
<div class="t" style="left:1032.5px;top:554.6px;font-size:12px;color:#111">1.93</div>
<div class="a" style="left:991px;top:576px;width:32px;height:32px;background:#f0002a"></div>
<div class="t" style="left:1032.5px;top:586.6px;font-size:12px;color:#111">1.29</div>
<div class="a" style="left:991px;top:608px;width:32px;height:32px;background:#dc0078"></div>
<div class="t" style="left:1032.5px;top:618.6px;font-size:12px;color:#111">0.64</div>
<div class="a" style="left:991px;top:640px;width:32px;height:32px;background:#c400d2"></div>
<div class="t" style="left:1032.5px;top:650.6px;font-size:12px;color:#111">0.00</div>
<div class="a" style="left:1111px;top:127px;width:1px;height:873px;background:#e6e6e6"></div>
<svg class="a" style="left:1112px;top:127px" width="804" height="440" viewBox="1112 127 804 440"><rect x="1112" y="127" width="804" height="440" fill="#fff"/><path d="M1166.4 127 V526M1180.8 127 V526M1195.2 127 V526M1209.7 127 V526M1224.1 127 V526M1238.5 127 V526M1252.9 127 V526M1267.3 127 V526M1281.8 127 V526M1296.2 127 V526M1310.6 127 V526M1325.0 127 V526M1339.4 127 V526M1353.9 127 V526M1368.3 127 V526M1382.7 127 V526M1397.1 127 V526M1411.5 127 V526M1426.0 127 V526M1440.4 127 V526M1454.8 127 V526M1469.2 127 V526M1483.6 127 V526M1498.1 127 V526M1512.5 127 V526M1526.9 127 V526M1541.3 127 V526M1555.7 127 V526M1570.2 127 V526M1584.6 127 V526M1599.0 127 V526M1613.4 127 V526M1627.8 127 V526M1642.3 127 V526M1656.7 127 V526M1671.1 127 V526M1685.5 127 V526M1699.9 127 V526M1714.4 127 V526M1728.8 127 V526M1743.2 127 V526M1757.6 127 V526M1772.0 127 V526M1786.5 127 V526M1800.9 127 V526M1815.3 127 V526M1829.7 127 V526M1844.1 127 V526M1858.6 127 V526M1873.0 127 V526M1887.4 127 V526M1901.8 127 V526M1152 512.3 H1916M1152 496.4 H1916M1152 480.4 H1916M1152 464.4 H1916M1152 448.5 H1916M1152 432.5 H1916M1152 416.6 H1916M1152 400.6 H1916M1152 384.6 H1916M1152 368.7 H1916M1152 352.7 H1916M1152 336.8 H1916M1152 320.8 H1916M1152 304.8 H1916M1152 288.9 H1916M1152 272.9 H1916M1152 257.0 H1916M1152 241.0 H1916M1152 225.0 H1916M1152 209.1 H1916M1152 193.1 H1916M1152 177.2 H1916M1152 161.2 H1916M1152 145.2 H1916M1152 129.3 H1916" stroke="#ebebeb" stroke-width="1" fill="none"/><path d="M1166.4 127 V526M1310.6 127 V526M1454.8 127 V526M1599.0 127 V526M1743.2 127 V526M1887.4 127 V526M1152 480.4 H1916M1152 320.8 H1916M1152 161.2 H1916" stroke="#d6d6d6" stroke-width="1" fill="none"/><path d="M1166.4 127 V526 M1152 480.4 H1916" stroke="#a8a8a8" stroke-width="1" fill="none"/><path d="M1152 127 V527 H1916" stroke="#888" stroke-width="2" fill="none"/><path d="M1166.4 527 V531" stroke="#888" stroke-width="2"/><path d="M1310.6 527 V531" stroke="#888" stroke-width="2"/><path d="M1454.8 527 V531" stroke="#888" stroke-width="2"/><path d="M1599.0 527 V531" stroke="#888" stroke-width="2"/><path d="M1743.2 527 V531" stroke="#888" stroke-width="2"/><path d="M1887.4 527 V531" stroke="#888" stroke-width="2"/><path d="M1146 480.4 H1152" stroke="#888" stroke-width="2"/><path d="M1146 400.6 H1152" stroke="#888" stroke-width="2"/><path d="M1146 320.8 H1152" stroke="#888" stroke-width="2"/><path d="M1146 241.0 H1152" stroke="#888" stroke-width="2"/><path d="M1146 161.2 H1152" stroke="#888" stroke-width="2"/><text x="1166.4" y="540" text-anchor="middle" font-family="Liberation Sans" font-size="10" fill="#555">0.0e+0</text><text x="1310.6" y="540" text-anchor="middle" font-family="Liberation Sans" font-size="10" fill="#555">1.0e-2</text><text x="1454.8" y="540" text-anchor="middle" font-family="Liberation Sans" font-size="10" fill="#555">2.0e-2</text><text x="1599.0" y="540" text-anchor="middle" font-family="Liberation Sans" font-size="10" fill="#555">3.0e-2</text><text x="1743.2" y="540" text-anchor="middle" font-family="Liberation Sans" font-size="10" fill="#555">4.0e-2</text><text x="1887.4" y="540" text-anchor="middle" font-family="Liberation Sans" font-size="10" fill="#555">5.0e-2</text><text x="0" y="0" transform="translate(1140 480.4) rotate(-90)" text-anchor="middle" font-family="Liberation Sans" font-size="10" fill="#555">0.0e+0</text><text x="0" y="0" transform="translate(1140 400.6) rotate(-90)" text-anchor="middle" font-family="Liberation Sans" font-size="10" fill="#555">2.5e+3</text><text x="0" y="0" transform="translate(1140 320.8) rotate(-90)" text-anchor="middle" font-family="Liberation Sans" font-size="10" fill="#555">5.0e+3</text><text x="0" y="0" transform="translate(1140 241.0) rotate(-90)" text-anchor="middle" font-family="Liberation Sans" font-size="10" fill="#555">7.5e+3</text><text x="0" y="0" transform="translate(1140 161.2) rotate(-90)" text-anchor="middle" font-family="Liberation Sans" font-size="10" fill="#555">1.0e+4</text><text x="0" y="0" transform="translate(1129.5 326.5) rotate(-90)" text-anchor="middle" font-family="Liberation Sans" font-weight="bold" font-size="13" fill="#111">Axial (kN)</text><text x="1515.7" y="556.5" text-anchor="middle" font-family="Liberation Sans" font-weight="bold" font-size="13" fill="#111">Curvature, Ø (x 10E-3 rads/mm)</text><path d="M1240.8 172.1 L1266.9 202.7 L1266.9 264.3 L1303.8 295.3 L1355.0 326.2 L1425.2 356.9 L1425.2 417.8 L1649.5 448.8 L1829.7 480.4" stroke="#3f51b5" stroke-width="2" fill="none" stroke-linejoin="round"/></svg>
<div class="a" style="left:1678px;top:131px;width:236px;height:32px;border-radius:4px;background:linear-gradient(#f4f4f4,#e6e6e6);box-shadow:0 1px 2px rgba(0,0,0,0.35)"></div>
<div class="t" style="left:1691px;top:140px;font-size:12px;color:#333">Angle</div>
<div class="a" style="left:1730px;top:135px;width:111px;height:24px;background:#fff;border:1px solid #c4c4c4"></div>
<div class="t" style="left:1739px;top:142px;font-size:12px;color:#111">0</div>
<svg class="a" style="left:1826px;top:143px" width="11" height="8"><path d="M1 1.5 L5.5 6 L10 1.5" stroke="#111" stroke-width="2" fill="none"/></svg>
<svg class="a" style="left:1853px;top:141px" width="16" height="14"><rect x="0" y="0" width="15.5" height="13.5" rx="1.5" fill="#333"/><rect x="2" y="2.5" width="5" height="3.5" fill="#fff"/><rect x="8.5" y="2.5" width="5" height="3.5" fill="#fff"/><rect x="2" y="7.5" width="5" height="3.5" fill="#fff"/><rect x="8.5" y="7.5" width="5" height="3.5" fill="#fff"/></svg>
<svg class="a" style="left:1886px;top:139px" width="14" height="17"><path d="M1.5 0 H9 L14 5 V15.5 Q14 17 12.5 17 H1.5 Q0 17 0 15.5 V1.5 Q0 0 1.5 0 Z" fill="#333"/><path d="M9 0.5 V5 H13.5 Z" fill="#fff"/><path d="M7 8.5 V15 M3.8 11.75 H10.2" stroke="#fff" stroke-width="1.8"/></svg>
<svg class="a" style="left:1112px;top:568px" width="804" height="432" viewBox="1112 568 804 432"><rect x="1112" y="568" width="804" height="432" fill="#fff"/><path d="M1158.6 568 V967M1170.4 568 V967M1182.2 568 V967M1193.9 568 V967M1205.7 568 V967M1217.5 568 V967M1229.2 568 V967M1241.0 568 V967M1252.8 568 V967M1264.6 568 V967M1276.4 568 V967M1288.1 568 V967M1299.9 568 V967M1311.7 568 V967M1323.5 568 V967M1335.2 568 V967M1347.0 568 V967M1358.8 568 V967M1370.6 568 V967M1382.3 568 V967M1394.1 568 V967M1405.9 568 V967M1417.7 568 V967M1429.4 568 V967M1441.2 568 V967M1453.0 568 V967M1464.8 568 V967M1476.5 568 V967M1488.3 568 V967M1500.1 568 V967M1511.9 568 V967M1523.6 568 V967M1535.4 568 V967M1547.2 568 V967M1559.0 568 V967M1570.7 568 V967M1582.5 568 V967M1594.3 568 V967M1606.1 568 V967M1617.8 568 V967M1629.6 568 V967M1641.4 568 V967M1653.2 568 V967M1664.9 568 V967M1676.7 568 V967M1688.5 568 V967M1700.2 568 V967M1712.0 568 V967M1723.8 568 V967M1735.6 568 V967M1747.4 568 V967M1759.1 568 V967M1770.9 568 V967M1782.7 568 V967M1794.5 568 V967M1806.2 568 V967M1818.0 568 V967M1829.8 568 V967M1841.6 568 V967M1853.3 568 V967M1865.1 568 V967M1876.9 568 V967M1888.7 568 V967M1900.4 568 V967M1912.2 568 V967M1152 956.2 H1916M1152 944.4 H1916M1152 932.6 H1916M1152 920.8 H1916M1152 909.0 H1916M1152 897.2 H1916M1152 885.4 H1916M1152 873.6 H1916M1152 861.8 H1916M1152 850.0 H1916M1152 838.2 H1916M1152 826.4 H1916M1152 814.6 H1916M1152 802.8 H1916M1152 791.0 H1916M1152 779.2 H1916M1152 767.4 H1916M1152 755.6 H1916M1152 743.8 H1916M1152 732.0 H1916M1152 720.2 H1916M1152 708.4 H1916M1152 696.6 H1916M1152 684.8 H1916M1152 673.0 H1916M1152 661.2 H1916M1152 649.4 H1916M1152 637.6 H1916M1152 625.8 H1916M1152 614.0 H1916M1152 602.2 H1916M1152 590.4 H1916M1152 578.6 H1916" stroke="#ebebeb" stroke-width="1" fill="none"/><path d="M1182.2 568 V967M1299.9 568 V967M1417.7 568 V967M1535.4 568 V967M1653.2 568 V967M1770.9 568 V967M1888.7 568 V967M1152 885.4 H1916M1152 767.4 H1916M1152 649.4 H1916" stroke="#d6d6d6" stroke-width="1" fill="none"/><path d="M1535.4 568 V967 M1152 767.4 H1916" stroke="#a8a8a8" stroke-width="1" fill="none"/><path d="M1152 568 V968 H1916" stroke="#888" stroke-width="2" fill="none"/><path d="M1158.6 968 V972" stroke="#888" stroke-width="2"/><path d="M1205.7 968 V972" stroke="#888" stroke-width="2"/><path d="M1252.8 968 V972" stroke="#888" stroke-width="2"/><path d="M1299.9 968 V972" stroke="#888" stroke-width="2"/><path d="M1347.0 968 V972" stroke="#888" stroke-width="2"/><path d="M1394.1 968 V972" stroke="#888" stroke-width="2"/><path d="M1441.2 968 V972" stroke="#888" stroke-width="2"/><path d="M1488.3 968 V972" stroke="#888" stroke-width="2"/><path d="M1535.4 968 V972" stroke="#888" stroke-width="2"/><path d="M1582.5 968 V972" stroke="#888" stroke-width="2"/><path d="M1629.6 968 V972" stroke="#888" stroke-width="2"/><path d="M1676.7 968 V972" stroke="#888" stroke-width="2"/><path d="M1723.8 968 V972" stroke="#888" stroke-width="2"/><path d="M1770.9 968 V972" stroke="#888" stroke-width="2"/><path d="M1818.0 968 V972" stroke="#888" stroke-width="2"/><path d="M1865.1 968 V972" stroke="#888" stroke-width="2"/><path d="M1912.2 968 V972" stroke="#888" stroke-width="2"/><path d="M1146 956.2 H1152" stroke="#888" stroke-width="2"/><path d="M1146 909.0 H1152" stroke="#888" stroke-width="2"/><path d="M1146 861.8 H1152" stroke="#888" stroke-width="2"/><path d="M1146 814.6 H1152" stroke="#888" stroke-width="2"/><path d="M1146 767.4 H1152" stroke="#888" stroke-width="2"/><path d="M1146 720.2 H1152" stroke="#888" stroke-width="2"/><path d="M1146 673.0 H1152" stroke="#888" stroke-width="2"/><path d="M1146 625.8 H1152" stroke="#888" stroke-width="2"/><path d="M1146 578.6 H1152" stroke="#888" stroke-width="2"/><text x="1158.6" y="981.5" text-anchor="middle" font-family="Liberation Sans" font-size="10" fill="#555">-0.16</text><text x="1205.7" y="981.5" text-anchor="middle" font-family="Liberation Sans" font-size="10" fill="#555">-0.14</text><text x="1252.8" y="981.5" text-anchor="middle" font-family="Liberation Sans" font-size="10" fill="#555">-0.12</text><text x="1299.9" y="981.5" text-anchor="middle" font-family="Liberation Sans" font-size="10" fill="#555">-0.10</text><text x="1347.0" y="981.5" text-anchor="middle" font-family="Liberation Sans" font-size="10" fill="#555">-0.08</text><text x="1394.1" y="981.5" text-anchor="middle" font-family="Liberation Sans" font-size="10" fill="#555">-0.06</text><text x="1441.2" y="981.5" text-anchor="middle" font-family="Liberation Sans" font-size="10" fill="#555">-0.04</text><text x="1488.3" y="981.5" text-anchor="middle" font-family="Liberation Sans" font-size="10" fill="#555">-0.02</text><text x="1535.4" y="981.5" text-anchor="middle" font-family="Liberation Sans" font-size="10" fill="#555">0.00</text><text x="1582.5" y="981.5" text-anchor="middle" font-family="Liberation Sans" font-size="10" fill="#555">0.02</text><text x="1629.6" y="981.5" text-anchor="middle" font-family="Liberation Sans" font-size="10" fill="#555">0.04</text><text x="1676.7" y="981.5" text-anchor="middle" font-family="Liberation Sans" font-size="10" fill="#555">0.06</text><text x="1723.8" y="981.5" text-anchor="middle" font-family="Liberation Sans" font-size="10" fill="#555">0.08</text><text x="1770.9" y="981.5" text-anchor="middle" font-family="Liberation Sans" font-size="10" fill="#555">0.10</text><text x="1818.0" y="981.5" text-anchor="middle" font-family="Liberation Sans" font-size="10" fill="#555">0.12</text><text x="1865.1" y="981.5" text-anchor="middle" font-family="Liberation Sans" font-size="10" fill="#555">0.14</text><text x="1912.2" y="981.5" text-anchor="middle" font-family="Liberation Sans" font-size="10" fill="#555">0.16</text><text x="0" y="0" transform="translate(1140 956.2) rotate(-90)" text-anchor="middle" font-family="Liberation Sans" font-size="10" fill="#555">-0.08</text><text x="0" y="0" transform="translate(1140 909.0) rotate(-90)" text-anchor="middle" font-family="Liberation Sans" font-size="10" fill="#555">-0.06</text><text x="0" y="0" transform="translate(1140 861.8) rotate(-90)" text-anchor="middle" font-family="Liberation Sans" font-size="10" fill="#555">-0.04</text><text x="0" y="0" transform="translate(1140 814.6) rotate(-90)" text-anchor="middle" font-family="Liberation Sans" font-size="10" fill="#555">-0.02</text><text x="0" y="0" transform="translate(1140 767.4) rotate(-90)" text-anchor="middle" font-family="Liberation Sans" font-size="10" fill="#555">0.00</text><text x="0" y="0" transform="translate(1140 720.2) rotate(-90)" text-anchor="middle" font-family="Liberation Sans" font-size="10" fill="#555">0.02</text><text x="0" y="0" transform="translate(1140 673.0) rotate(-90)" text-anchor="middle" font-family="Liberation Sans" font-size="10" fill="#555">0.04</text><text x="0" y="0" transform="translate(1140 625.8) rotate(-90)" text-anchor="middle" font-family="Liberation Sans" font-size="10" fill="#555">0.06</text><text x="0" y="0" transform="translate(1140 578.6) rotate(-90)" text-anchor="middle" font-family="Liberation Sans" font-size="10" fill="#555">0.08</text><text x="0" y="0" transform="translate(1129.5 768) rotate(-90)" text-anchor="middle" font-family="Liberation Sans" font-weight="bold" font-size="13" fill="#111">Curvature 2, Ø (x 10E-3 rads/mm)</text><text x="1515.6" y="998" text-anchor="middle" font-family="Liberation Sans" font-weight="bold" font-size="13" fill="#111">Curvature 3, Ø (x 10E-3 rads/mm)</text><path d="M1535.4 614.3 L1575.0 619.5 L1611.9 634.8 L1643.6 659.2 L1668.0 690.9 L1683.3 727.8 L1688.5 767.4 L1683.3 807.0 L1668.0 843.9 L1643.6 875.6 L1611.9 900.0 L1575.0 915.3 L1535.4 920.5 L1495.8 915.3 L1458.9 900.0 L1427.2 875.6 L1402.8 843.9 L1387.5 807.0 L1382.3 767.4 L1387.5 727.8 L1402.8 690.9 L1427.2 659.2 L1458.9 634.8 L1495.8 619.5Z" stroke="#3f51b5" stroke-width="2" fill="none" stroke-linejoin="round"/></svg>
<div class="a" style="left:1112px;top:567px;width:804px;height:1px;background:#dcdcdc"></div>
<div class="a" style="left:1655px;top:572px;width:259px;height:32px;border-radius:4px;background:linear-gradient(#f4f4f4,#e6e6e6);box-shadow:0 1px 2px rgba(0,0,0,0.35)"></div>
<div class="t" style="left:1670.5px;top:582px;font-size:12px;color:#333">Pu</div>
<div class="a" style="left:1692px;top:577px;width:128px;height:22px;background:#fff;border:1px solid #c4c4c4"></div>
<div class="t" style="left:1700.5px;top:583px;font-size:12px;color:#111">0</div>
<div class="t" style="left:1825.5px;top:582px;font-size:12px;color:#333">kN</div>
<svg class="a" style="left:1853px;top:582px" width="16" height="14"><rect x="0" y="0" width="15.5" height="13.5" rx="1.5" fill="#333"/><rect x="2" y="2.5" width="5" height="3.5" fill="#fff"/><rect x="8.5" y="2.5" width="5" height="3.5" fill="#fff"/><rect x="2" y="7.5" width="5" height="3.5" fill="#fff"/><rect x="8.5" y="7.5" width="5" height="3.5" fill="#fff"/></svg>
<svg class="a" style="left:1886px;top:580px" width="14" height="17"><path d="M1.5 0 H9 L14 5 V15.5 Q14 17 12.5 17 H1.5 Q0 17 0 15.5 V1.5 Q0 0 1.5 0 Z" fill="#333"/><path d="M9 0.5 V5 H13.5 Z" fill="#fff"/><path d="M7 8.5 V15 M3.8 11.75 H10.2" stroke="#fff" stroke-width="1.8"/></svg>
</body></html>
